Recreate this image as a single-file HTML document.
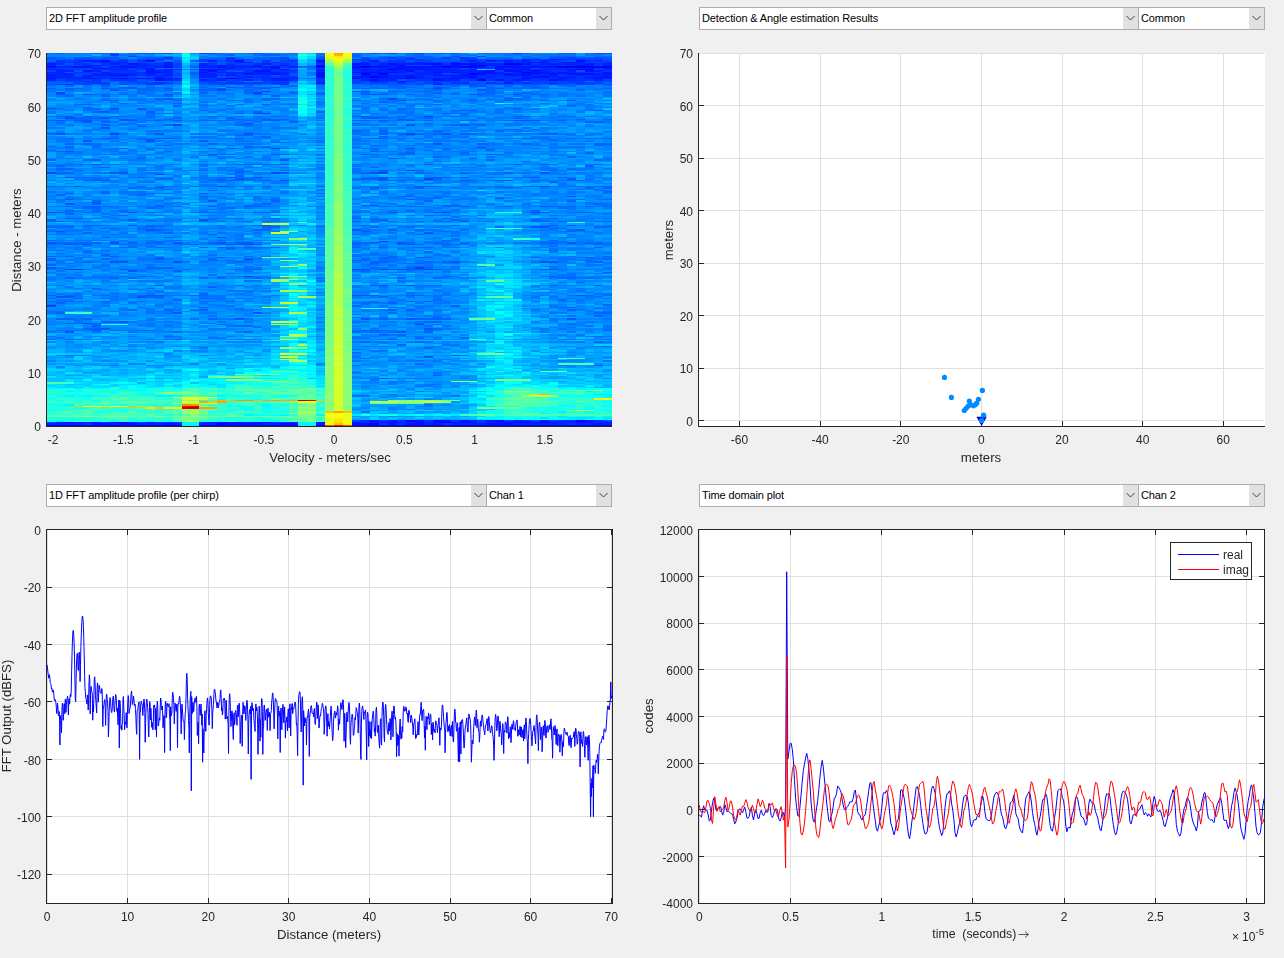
<!DOCTYPE html>
<html><head><meta charset="utf-8"><style>
html,body{margin:0;padding:0;background:#f0f0f0;width:1284px;height:958px;overflow:hidden;font-family:"Liberation Sans",sans-serif}
.dd{position:absolute;background:#fff;border:1px solid #adadad;}
.dd .t{position:absolute;left:2px;top:4px;font-size:11px;color:#000;white-space:nowrap;line-height:13px;letter-spacing:-0.12px}
.dd .ar{position:absolute;right:0;top:0;width:15px;height:21px;background:#e1e1e1}
#hmw{position:absolute;left:46px;top:53px;width:566px;height:373px;overflow:hidden;background:#0a6eff}
#hmw canvas{position:absolute;left:0.9px;top:0;width:565.1px;height:373px;image-rendering:pixelated}
svg text{font-family:"Liberation Sans",sans-serif}
</style></head><body>
<div class="dd" style="left:46px;top:7px;width:439px;height:21px"><span class="t">2D FFT amplitude profile</span><div class="ar"><svg width="15" height="21" style="display:block"><path d="M3.5 8 L7.5 12 L11.5 8" fill="none" stroke="#404040" stroke-width="1"/></svg></div></div><div class="dd" style="left:486px;top:7px;width:124px;height:21px"><span class="t">Common</span><div class="ar"><svg width="15" height="21" style="display:block"><path d="M3.5 8 L7.5 12 L11.5 8" fill="none" stroke="#404040" stroke-width="1"/></svg></div></div><div class="dd" style="left:699px;top:7px;width:438px;height:21px"><span class="t">Detection &amp; Angle estimation Results</span><div class="ar"><svg width="15" height="21" style="display:block"><path d="M3.5 8 L7.5 12 L11.5 8" fill="none" stroke="#404040" stroke-width="1"/></svg></div></div><div class="dd" style="left:1138px;top:7px;width:125px;height:21px"><span class="t">Common</span><div class="ar"><svg width="15" height="21" style="display:block"><path d="M3.5 8 L7.5 12 L11.5 8" fill="none" stroke="#404040" stroke-width="1"/></svg></div></div><div class="dd" style="left:46px;top:484px;width:439px;height:21px"><span class="t">1D FFT amplitude profile (per chirp)</span><div class="ar"><svg width="15" height="21" style="display:block"><path d="M3.5 8 L7.5 12 L11.5 8" fill="none" stroke="#404040" stroke-width="1"/></svg></div></div><div class="dd" style="left:486px;top:484px;width:124px;height:21px"><span class="t">Chan 1</span><div class="ar"><svg width="15" height="21" style="display:block"><path d="M3.5 8 L7.5 12 L11.5 8" fill="none" stroke="#404040" stroke-width="1"/></svg></div></div><div class="dd" style="left:699px;top:484px;width:438px;height:21px"><span class="t">Time domain plot</span><div class="ar"><svg width="15" height="21" style="display:block"><path d="M3.5 8 L7.5 12 L11.5 8" fill="none" stroke="#404040" stroke-width="1"/></svg></div></div><div class="dd" style="left:1138px;top:484px;width:125px;height:21px"><span class="t">Chan 2</span><div class="ar"><svg width="15" height="21" style="display:block"><path d="M3.5 8 L7.5 12 L11.5 8" fill="none" stroke="#404040" stroke-width="1"/></svg></div></div>
<div id="hmw"><svg width="567" height="373" style="position:absolute;left:0.9px;top:0" shape-rendering="crispEdges"><rect x="0.0" y="0.0" width="9" height="12.2" fill="#005fff"/><rect x="9.0" y="0.0" width="9" height="12.2" fill="#0059ff"/><rect x="17.9" y="0.0" width="9" height="12.2" fill="#0065ff"/><rect x="26.9" y="0.0" width="9" height="12.2" fill="#0059ff"/><rect x="35.9" y="0.0" width="9" height="12.2" fill="#005bff"/><rect x="44.9" y="0.0" width="9" height="12.2" fill="#005dff"/><rect x="53.8" y="0.0" width="9" height="12.2" fill="#004eff"/><rect x="62.8" y="0.0" width="9" height="12.2" fill="#004aff"/><rect x="71.8" y="0.0" width="9" height="12.2" fill="#0059ff"/><rect x="80.7" y="0.0" width="9" height="12.2" fill="#0059ff"/><rect x="89.7" y="0.0" width="9" height="12.2" fill="#0052ff"/><rect x="98.7" y="0.0" width="9" height="12.2" fill="#0050ff"/><rect x="107.6" y="0.0" width="9" height="12.2" fill="#005dff"/><rect x="116.6" y="0.0" width="9" height="12.2" fill="#0057ff"/><rect x="125.6" y="0.0" width="9" height="12.2" fill="#0077ff"/><rect x="134.6" y="0.0" width="9" height="12.2" fill="#05e9f9"/><rect x="143.5" y="0.0" width="9" height="12.2" fill="#00a3ff"/><rect x="152.5" y="0.0" width="9" height="12.2" fill="#005dff"/><rect x="161.5" y="0.0" width="9" height="12.2" fill="#0059ff"/><rect x="170.4" y="0.0" width="9" height="12.2" fill="#0063ff"/><rect x="179.4" y="0.0" width="9" height="12.2" fill="#0050ff"/><rect x="188.4" y="0.0" width="9" height="12.2" fill="#0057ff"/><rect x="197.3" y="0.0" width="9" height="12.2" fill="#005fff"/><rect x="206.3" y="0.0" width="9" height="12.2" fill="#005fff"/><rect x="215.3" y="0.0" width="9" height="12.2" fill="#0057ff"/><rect x="224.3" y="0.0" width="9" height="12.2" fill="#005fff"/><rect x="233.2" y="0.0" width="9" height="12.2" fill="#0059ff"/><rect x="242.2" y="0.0" width="9" height="12.2" fill="#0065ff"/><rect x="251.2" y="0.0" width="9" height="12.2" fill="#08e4f6"/><rect x="260.1" y="0.0" width="9" height="12.2" fill="#00c6ff"/><rect x="269.1" y="0.0" width="9" height="12.2" fill="#0048ff"/><rect x="278.1" y="0.0" width="9" height="12.2" fill="#c0ff3e"/><rect x="287.0" y="0.0" width="9" height="12.2" fill="#efe50f"/><rect x="296.0" y="0.0" width="9" height="12.2" fill="#beff40"/><rect x="305.0" y="0.0" width="9" height="12.2" fill="#0054ff"/><rect x="314.0" y="0.0" width="9" height="12.2" fill="#0050ff"/><rect x="322.9" y="0.0" width="9" height="12.2" fill="#0054ff"/><rect x="331.9" y="0.0" width="9" height="12.2" fill="#0059ff"/><rect x="340.9" y="0.0" width="9" height="12.2" fill="#004eff"/><rect x="349.8" y="0.0" width="9" height="12.2" fill="#0052ff"/><rect x="358.8" y="0.0" width="9" height="12.2" fill="#004eff"/><rect x="367.8" y="0.0" width="9" height="12.2" fill="#0046ff"/><rect x="376.7" y="0.0" width="9" height="12.2" fill="#0050ff"/><rect x="385.7" y="0.0" width="9" height="12.2" fill="#0054ff"/><rect x="394.7" y="0.0" width="9" height="12.2" fill="#005bff"/><rect x="403.7" y="0.0" width="9" height="12.2" fill="#004eff"/><rect x="412.6" y="0.0" width="9" height="12.2" fill="#0050ff"/><rect x="421.6" y="0.0" width="9" height="12.2" fill="#0052ff"/><rect x="430.6" y="0.0" width="9" height="12.2" fill="#0052ff"/><rect x="439.5" y="0.0" width="9" height="12.2" fill="#005bff"/><rect x="448.5" y="0.0" width="9" height="12.2" fill="#005bff"/><rect x="457.5" y="0.0" width="9" height="12.2" fill="#004aff"/><rect x="466.4" y="0.0" width="9" height="12.2" fill="#004cff"/><rect x="475.4" y="0.0" width="9" height="12.2" fill="#0044ff"/><rect x="484.4" y="0.0" width="9" height="12.2" fill="#0052ff"/><rect x="493.4" y="0.0" width="9" height="12.2" fill="#0050ff"/><rect x="502.3" y="0.0" width="9" height="12.2" fill="#004eff"/><rect x="511.3" y="0.0" width="9" height="12.2" fill="#0048ff"/><rect x="520.3" y="0.0" width="9" height="12.2" fill="#0048ff"/><rect x="529.2" y="0.0" width="9" height="12.2" fill="#0050ff"/><rect x="538.2" y="0.0" width="9" height="12.2" fill="#0050ff"/><rect x="547.2" y="0.0" width="9" height="12.2" fill="#004aff"/><rect x="556.1" y="0.0" width="9" height="12.2" fill="#004eff"/><rect x="0.0" y="11.7" width="9" height="12.2" fill="#0024ff"/><rect x="9.0" y="11.7" width="9" height="12.2" fill="#002cff"/><rect x="17.9" y="11.7" width="9" height="12.2" fill="#0032ff"/><rect x="26.9" y="11.7" width="9" height="12.2" fill="#003cff"/><rect x="35.9" y="11.7" width="9" height="12.2" fill="#002cff"/><rect x="44.9" y="11.7" width="9" height="12.2" fill="#0026ff"/><rect x="53.8" y="11.7" width="9" height="12.2" fill="#002cff"/><rect x="62.8" y="11.7" width="9" height="12.2" fill="#002aff"/><rect x="71.8" y="11.7" width="9" height="12.2" fill="#0022ff"/><rect x="80.7" y="11.7" width="9" height="12.2" fill="#002eff"/><rect x="89.7" y="11.7" width="9" height="12.2" fill="#0030ff"/><rect x="98.7" y="11.7" width="9" height="12.2" fill="#001eff"/><rect x="107.6" y="11.7" width="9" height="12.2" fill="#0032ff"/><rect x="116.6" y="11.7" width="9" height="12.2" fill="#0028ff"/><rect x="125.6" y="11.7" width="9" height="12.2" fill="#0048ff"/><rect x="134.6" y="11.7" width="9" height="12.2" fill="#00b2ff"/><rect x="143.5" y="11.7" width="9" height="12.2" fill="#0071ff"/><rect x="152.5" y="11.7" width="9" height="12.2" fill="#0022ff"/><rect x="161.5" y="11.7" width="9" height="12.2" fill="#0026ff"/><rect x="170.4" y="11.7" width="9" height="12.2" fill="#0028ff"/><rect x="179.4" y="11.7" width="9" height="12.2" fill="#0028ff"/><rect x="188.4" y="11.7" width="9" height="12.2" fill="#0032ff"/><rect x="197.3" y="11.7" width="9" height="12.2" fill="#002eff"/><rect x="206.3" y="11.7" width="9" height="12.2" fill="#002aff"/><rect x="215.3" y="11.7" width="9" height="12.2" fill="#002aff"/><rect x="224.3" y="11.7" width="9" height="12.2" fill="#0028ff"/><rect x="233.2" y="11.7" width="9" height="12.2" fill="#002eff"/><rect x="242.2" y="11.7" width="9" height="12.2" fill="#0040ff"/><rect x="251.2" y="11.7" width="9" height="12.2" fill="#00a3ff"/><rect x="260.1" y="11.7" width="9" height="12.2" fill="#0079ff"/><rect x="269.1" y="11.7" width="9" height="12.2" fill="#0018ff"/><rect x="278.1" y="11.7" width="9" height="12.2" fill="#30ffce"/><rect x="287.0" y="11.7" width="9" height="12.2" fill="#7fff7f"/><rect x="296.0" y="11.7" width="9" height="12.2" fill="#2effd0"/><rect x="305.0" y="11.7" width="9" height="12.2" fill="#0026ff"/><rect x="314.0" y="11.7" width="9" height="12.2" fill="#0018fd"/><rect x="322.9" y="11.7" width="9" height="12.2" fill="#0022ff"/><rect x="331.9" y="11.7" width="9" height="12.2" fill="#001aff"/><rect x="340.9" y="11.7" width="9" height="12.2" fill="#001cff"/><rect x="349.8" y="11.7" width="9" height="12.2" fill="#001cff"/><rect x="358.8" y="11.7" width="9" height="12.2" fill="#0022ff"/><rect x="367.8" y="11.7" width="9" height="12.2" fill="#0022ff"/><rect x="376.7" y="11.7" width="9" height="12.2" fill="#0024ff"/><rect x="385.7" y="11.7" width="9" height="12.2" fill="#001cff"/><rect x="394.7" y="11.7" width="9" height="12.2" fill="#0020ff"/><rect x="403.7" y="11.7" width="9" height="12.2" fill="#0020ff"/><rect x="412.6" y="11.7" width="9" height="12.2" fill="#0024ff"/><rect x="421.6" y="11.7" width="9" height="12.2" fill="#001aff"/><rect x="430.6" y="11.7" width="9" height="12.2" fill="#0030ff"/><rect x="439.5" y="11.7" width="9" height="12.2" fill="#0036ff"/><rect x="448.5" y="11.7" width="9" height="12.2" fill="#0022ff"/><rect x="457.5" y="11.7" width="9" height="12.2" fill="#001eff"/><rect x="466.4" y="11.7" width="9" height="12.2" fill="#001aff"/><rect x="475.4" y="11.7" width="9" height="12.2" fill="#0018ff"/><rect x="484.4" y="11.7" width="9" height="12.2" fill="#0022ff"/><rect x="493.4" y="11.7" width="9" height="12.2" fill="#0022ff"/><rect x="502.3" y="11.7" width="9" height="12.2" fill="#0022ff"/><rect x="511.3" y="11.7" width="9" height="12.2" fill="#0026fd"/><rect x="520.3" y="11.7" width="9" height="12.2" fill="#001eff"/><rect x="529.2" y="11.7" width="9" height="12.2" fill="#001efd"/><rect x="538.2" y="11.7" width="9" height="12.2" fill="#001aff"/><rect x="547.2" y="11.7" width="9" height="12.2" fill="#002aff"/><rect x="556.1" y="11.7" width="9" height="12.2" fill="#001cff"/><rect x="0.0" y="23.3" width="9" height="12.2" fill="#004aff"/><rect x="9.0" y="23.3" width="9" height="12.2" fill="#0052ff"/><rect x="17.9" y="23.3" width="9" height="12.2" fill="#004aff"/><rect x="26.9" y="23.3" width="9" height="12.2" fill="#0050ff"/><rect x="35.9" y="23.3" width="9" height="12.2" fill="#0042ff"/><rect x="44.9" y="23.3" width="9" height="12.2" fill="#004eff"/><rect x="53.8" y="23.3" width="9" height="12.2" fill="#004eff"/><rect x="62.8" y="23.3" width="9" height="12.2" fill="#005bff"/><rect x="71.8" y="23.3" width="9" height="12.2" fill="#004aff"/><rect x="80.7" y="23.3" width="9" height="12.2" fill="#004eff"/><rect x="89.7" y="23.3" width="9" height="12.2" fill="#0057ff"/><rect x="98.7" y="23.3" width="9" height="12.2" fill="#004aff"/><rect x="107.6" y="23.3" width="9" height="12.2" fill="#0044ff"/><rect x="116.6" y="23.3" width="9" height="12.2" fill="#004eff"/><rect x="125.6" y="23.3" width="9" height="12.2" fill="#0063ff"/><rect x="134.6" y="23.3" width="9" height="12.2" fill="#02dffc"/><rect x="143.5" y="23.3" width="9" height="12.2" fill="#0093ff"/><rect x="152.5" y="23.3" width="9" height="12.2" fill="#004aff"/><rect x="161.5" y="23.3" width="9" height="12.2" fill="#004aff"/><rect x="170.4" y="23.3" width="9" height="12.2" fill="#0052ff"/><rect x="179.4" y="23.3" width="9" height="12.2" fill="#0046ff"/><rect x="188.4" y="23.3" width="9" height="12.2" fill="#0048ff"/><rect x="197.3" y="23.3" width="9" height="12.2" fill="#004aff"/><rect x="206.3" y="23.3" width="9" height="12.2" fill="#0052ff"/><rect x="215.3" y="23.3" width="9" height="12.2" fill="#004aff"/><rect x="224.3" y="23.3" width="9" height="12.2" fill="#0044ff"/><rect x="233.2" y="23.3" width="9" height="12.2" fill="#0040ff"/><rect x="242.2" y="23.3" width="9" height="12.2" fill="#005bff"/><rect x="251.2" y="23.3" width="9" height="12.2" fill="#00c2ff"/><rect x="260.1" y="23.3" width="9" height="12.2" fill="#00b2ff"/><rect x="269.1" y="23.3" width="9" height="12.2" fill="#0040ff"/><rect x="278.1" y="23.3" width="9" height="12.2" fill="#2cffd2"/><rect x="287.0" y="23.3" width="9" height="12.2" fill="#73ff8b"/><rect x="296.0" y="23.3" width="9" height="12.2" fill="#2cffd2"/><rect x="305.0" y="23.3" width="9" height="12.2" fill="#004aff"/><rect x="314.0" y="23.3" width="9" height="12.2" fill="#004aff"/><rect x="322.9" y="23.3" width="9" height="12.2" fill="#003aff"/><rect x="331.9" y="23.3" width="9" height="12.2" fill="#0042ff"/><rect x="340.9" y="23.3" width="9" height="12.2" fill="#0042ff"/><rect x="349.8" y="23.3" width="9" height="12.2" fill="#0040ff"/><rect x="358.8" y="23.3" width="9" height="12.2" fill="#0042ff"/><rect x="367.8" y="23.3" width="9" height="12.2" fill="#0048ff"/><rect x="376.7" y="23.3" width="9" height="12.2" fill="#004eff"/><rect x="385.7" y="23.3" width="9" height="12.2" fill="#0036ff"/><rect x="394.7" y="23.3" width="9" height="12.2" fill="#0040ff"/><rect x="403.7" y="23.3" width="9" height="12.2" fill="#0040ff"/><rect x="412.6" y="23.3" width="9" height="12.2" fill="#004cff"/><rect x="421.6" y="23.3" width="9" height="12.2" fill="#0044ff"/><rect x="430.6" y="23.3" width="9" height="12.2" fill="#0048ff"/><rect x="439.5" y="23.3" width="9" height="12.2" fill="#004aff"/><rect x="448.5" y="23.3" width="9" height="12.2" fill="#004aff"/><rect x="457.5" y="23.3" width="9" height="12.2" fill="#0042ff"/><rect x="466.4" y="23.3" width="9" height="12.2" fill="#0048ff"/><rect x="475.4" y="23.3" width="9" height="12.2" fill="#0040ff"/><rect x="484.4" y="23.3" width="9" height="12.2" fill="#0040ff"/><rect x="493.4" y="23.3" width="9" height="12.2" fill="#0046ff"/><rect x="502.3" y="23.3" width="9" height="12.2" fill="#0048ff"/><rect x="511.3" y="23.3" width="9" height="12.2" fill="#0046ff"/><rect x="520.3" y="23.3" width="9" height="12.2" fill="#0046ff"/><rect x="529.2" y="23.3" width="9" height="12.2" fill="#004aff"/><rect x="538.2" y="23.3" width="9" height="12.2" fill="#004aff"/><rect x="547.2" y="23.3" width="9" height="12.2" fill="#0048ff"/><rect x="556.1" y="23.3" width="9" height="12.2" fill="#004aff"/><rect x="0.0" y="35.0" width="9" height="12.2" fill="#0081ff"/><rect x="9.0" y="35.0" width="9" height="12.2" fill="#007dff"/><rect x="17.9" y="35.0" width="9" height="12.2" fill="#0077ff"/><rect x="26.9" y="35.0" width="9" height="12.2" fill="#0083ff"/><rect x="35.9" y="35.0" width="9" height="12.2" fill="#007fff"/><rect x="44.9" y="35.0" width="9" height="12.2" fill="#008bff"/><rect x="53.8" y="35.0" width="9" height="12.2" fill="#0077ff"/><rect x="62.8" y="35.0" width="9" height="12.2" fill="#007fff"/><rect x="71.8" y="35.0" width="9" height="12.2" fill="#0083ff"/><rect x="80.7" y="35.0" width="9" height="12.2" fill="#007bff"/><rect x="89.7" y="35.0" width="9" height="12.2" fill="#0077ff"/><rect x="98.7" y="35.0" width="9" height="12.2" fill="#0079ff"/><rect x="107.6" y="35.0" width="9" height="12.2" fill="#007dff"/><rect x="116.6" y="35.0" width="9" height="12.2" fill="#006dff"/><rect x="125.6" y="35.0" width="9" height="12.2" fill="#0091ff"/><rect x="134.6" y="35.0" width="9" height="12.2" fill="#00ceff"/><rect x="143.5" y="35.0" width="9" height="12.2" fill="#00a5ff"/><rect x="152.5" y="35.0" width="9" height="12.2" fill="#0077ff"/><rect x="161.5" y="35.0" width="9" height="12.2" fill="#007dff"/><rect x="170.4" y="35.0" width="9" height="12.2" fill="#0075ff"/><rect x="179.4" y="35.0" width="9" height="12.2" fill="#0083ff"/><rect x="188.4" y="35.0" width="9" height="12.2" fill="#008dff"/><rect x="197.3" y="35.0" width="9" height="12.2" fill="#0079ff"/><rect x="206.3" y="35.0" width="9" height="12.2" fill="#0071ff"/><rect x="215.3" y="35.0" width="9" height="12.2" fill="#0075ff"/><rect x="224.3" y="35.0" width="9" height="12.2" fill="#007fff"/><rect x="233.2" y="35.0" width="9" height="12.2" fill="#0091ff"/><rect x="242.2" y="35.0" width="9" height="12.2" fill="#0089ff"/><rect x="251.2" y="35.0" width="9" height="12.2" fill="#06f2f8"/><rect x="260.1" y="35.0" width="9" height="12.2" fill="#00d4ff"/><rect x="269.1" y="35.0" width="9" height="12.2" fill="#007fff"/><rect x="278.1" y="35.0" width="9" height="12.2" fill="#2cffd2"/><rect x="287.0" y="35.0" width="9" height="12.2" fill="#77ff87"/><rect x="296.0" y="35.0" width="9" height="12.2" fill="#2cffd2"/><rect x="305.0" y="35.0" width="9" height="12.2" fill="#008bff"/><rect x="314.0" y="35.0" width="9" height="12.2" fill="#0077ff"/><rect x="322.9" y="35.0" width="9" height="12.2" fill="#0087ff"/><rect x="331.9" y="35.0" width="9" height="12.2" fill="#007fff"/><rect x="340.9" y="35.0" width="9" height="12.2" fill="#0075ff"/><rect x="349.8" y="35.0" width="9" height="12.2" fill="#0081ff"/><rect x="358.8" y="35.0" width="9" height="12.2" fill="#007fff"/><rect x="367.8" y="35.0" width="9" height="12.2" fill="#007bff"/><rect x="376.7" y="35.0" width="9" height="12.2" fill="#0073ff"/><rect x="385.7" y="35.0" width="9" height="12.2" fill="#0073ff"/><rect x="394.7" y="35.0" width="9" height="12.2" fill="#0087ff"/><rect x="403.7" y="35.0" width="9" height="12.2" fill="#0081ff"/><rect x="412.6" y="35.0" width="9" height="12.2" fill="#0089ff"/><rect x="421.6" y="35.0" width="9" height="12.2" fill="#0081ff"/><rect x="430.6" y="35.0" width="9" height="12.2" fill="#0077ff"/><rect x="439.5" y="35.0" width="9" height="12.2" fill="#006fff"/><rect x="448.5" y="35.0" width="9" height="12.2" fill="#0079ff"/><rect x="457.5" y="35.0" width="9" height="12.2" fill="#0083ff"/><rect x="466.4" y="35.0" width="9" height="12.2" fill="#0079ff"/><rect x="475.4" y="35.0" width="9" height="12.2" fill="#007bff"/><rect x="484.4" y="35.0" width="9" height="12.2" fill="#007fff"/><rect x="493.4" y="35.0" width="9" height="12.2" fill="#0079ff"/><rect x="502.3" y="35.0" width="9" height="12.2" fill="#0087ff"/><rect x="511.3" y="35.0" width="9" height="12.2" fill="#0085ff"/><rect x="520.3" y="35.0" width="9" height="12.2" fill="#0085ff"/><rect x="529.2" y="35.0" width="9" height="12.2" fill="#007fff"/><rect x="538.2" y="35.0" width="9" height="12.2" fill="#0089ff"/><rect x="547.2" y="35.0" width="9" height="12.2" fill="#0087ff"/><rect x="556.1" y="35.0" width="9" height="12.2" fill="#0081ff"/><rect x="0.0" y="46.6" width="9" height="12.2" fill="#008dff"/><rect x="9.0" y="46.6" width="9" height="12.2" fill="#0089ff"/><rect x="17.9" y="46.6" width="9" height="12.2" fill="#008bff"/><rect x="26.9" y="46.6" width="9" height="12.2" fill="#0089ff"/><rect x="35.9" y="46.6" width="9" height="12.2" fill="#0079ff"/><rect x="44.9" y="46.6" width="9" height="12.2" fill="#0087ff"/><rect x="53.8" y="46.6" width="9" height="12.2" fill="#008fff"/><rect x="62.8" y="46.6" width="9" height="12.2" fill="#0079ff"/><rect x="71.8" y="46.6" width="9" height="12.2" fill="#0089ff"/><rect x="80.7" y="46.6" width="9" height="12.2" fill="#0089ff"/><rect x="89.7" y="46.6" width="9" height="12.2" fill="#007fff"/><rect x="98.7" y="46.6" width="9" height="12.2" fill="#0089ff"/><rect x="107.6" y="46.6" width="9" height="12.2" fill="#0087ff"/><rect x="116.6" y="46.6" width="9" height="12.2" fill="#0093ff"/><rect x="125.6" y="46.6" width="9" height="12.2" fill="#007bff"/><rect x="134.6" y="46.6" width="9" height="12.2" fill="#00a5ff"/><rect x="143.5" y="46.6" width="9" height="12.2" fill="#00a1ff"/><rect x="152.5" y="46.6" width="9" height="12.2" fill="#007bff"/><rect x="161.5" y="46.6" width="9" height="12.2" fill="#008fff"/><rect x="170.4" y="46.6" width="9" height="12.2" fill="#0087ff"/><rect x="179.4" y="46.6" width="9" height="12.2" fill="#008bff"/><rect x="188.4" y="46.6" width="9" height="12.2" fill="#008fff"/><rect x="197.3" y="46.6" width="9" height="12.2" fill="#008dff"/><rect x="206.3" y="46.6" width="9" height="12.2" fill="#0091ff"/><rect x="215.3" y="46.6" width="9" height="12.2" fill="#0089ff"/><rect x="224.3" y="46.6" width="9" height="12.2" fill="#0089ff"/><rect x="233.2" y="46.6" width="9" height="12.2" fill="#0089ff"/><rect x="242.2" y="46.6" width="9" height="12.2" fill="#0095ff"/><rect x="251.2" y="46.6" width="9" height="12.2" fill="#11fbed"/><rect x="260.1" y="46.6" width="9" height="12.2" fill="#02dffc"/><rect x="269.1" y="46.6" width="9" height="12.2" fill="#0089ff"/><rect x="278.1" y="46.6" width="9" height="12.2" fill="#2effd0"/><rect x="287.0" y="46.6" width="9" height="12.2" fill="#77ff87"/><rect x="296.0" y="46.6" width="9" height="12.2" fill="#2cffd2"/><rect x="305.0" y="46.6" width="9" height="12.2" fill="#0089ff"/><rect x="314.0" y="46.6" width="9" height="12.2" fill="#007bff"/><rect x="322.9" y="46.6" width="9" height="12.2" fill="#008dff"/><rect x="331.9" y="46.6" width="9" height="12.2" fill="#007dff"/><rect x="340.9" y="46.6" width="9" height="12.2" fill="#0085ff"/><rect x="349.8" y="46.6" width="9" height="12.2" fill="#0079ff"/><rect x="358.8" y="46.6" width="9" height="12.2" fill="#007fff"/><rect x="367.8" y="46.6" width="9" height="12.2" fill="#008fff"/><rect x="376.7" y="46.6" width="9" height="12.2" fill="#0083ff"/><rect x="385.7" y="46.6" width="9" height="12.2" fill="#007fff"/><rect x="394.7" y="46.6" width="9" height="12.2" fill="#008bff"/><rect x="403.7" y="46.6" width="9" height="12.2" fill="#0089ff"/><rect x="412.6" y="46.6" width="9" height="12.2" fill="#008bff"/><rect x="421.6" y="46.6" width="9" height="12.2" fill="#0081ff"/><rect x="430.6" y="46.6" width="9" height="12.2" fill="#0085ff"/><rect x="439.5" y="46.6" width="9" height="12.2" fill="#008fff"/><rect x="448.5" y="46.6" width="9" height="12.2" fill="#0292fc"/><rect x="457.5" y="46.6" width="9" height="12.2" fill="#008dff"/><rect x="466.4" y="46.6" width="9" height="12.2" fill="#0085ff"/><rect x="475.4" y="46.6" width="9" height="12.2" fill="#0087ff"/><rect x="484.4" y="46.6" width="9" height="12.2" fill="#0093ff"/><rect x="493.4" y="46.6" width="9" height="12.2" fill="#0097ff"/><rect x="502.3" y="46.6" width="9" height="12.2" fill="#0095ff"/><rect x="511.3" y="46.6" width="9" height="12.2" fill="#0091ff"/><rect x="520.3" y="46.6" width="9" height="12.2" fill="#0081ff"/><rect x="529.2" y="46.6" width="9" height="12.2" fill="#0087ff"/><rect x="538.2" y="46.6" width="9" height="12.2" fill="#0081ff"/><rect x="547.2" y="46.6" width="9" height="12.2" fill="#0089ff"/><rect x="556.1" y="46.6" width="9" height="12.2" fill="#0093ff"/><rect x="0.0" y="58.3" width="9" height="12.2" fill="#007fff"/><rect x="9.0" y="58.3" width="9" height="12.2" fill="#007dff"/><rect x="17.9" y="58.3" width="9" height="12.2" fill="#007bff"/><rect x="26.9" y="58.3" width="9" height="12.2" fill="#0079ff"/><rect x="35.9" y="58.3" width="9" height="12.2" fill="#0073ff"/><rect x="44.9" y="58.3" width="9" height="12.2" fill="#007dff"/><rect x="53.8" y="58.3" width="9" height="12.2" fill="#0077ff"/><rect x="62.8" y="58.3" width="9" height="12.2" fill="#0083ff"/><rect x="71.8" y="58.3" width="9" height="12.2" fill="#0079ff"/><rect x="80.7" y="58.3" width="9" height="12.2" fill="#007bff"/><rect x="89.7" y="58.3" width="9" height="12.2" fill="#007fff"/><rect x="98.7" y="58.3" width="9" height="12.2" fill="#0071ff"/><rect x="107.6" y="58.3" width="9" height="12.2" fill="#007fff"/><rect x="116.6" y="58.3" width="9" height="12.2" fill="#0089ff"/><rect x="125.6" y="58.3" width="9" height="12.2" fill="#0079ff"/><rect x="134.6" y="58.3" width="9" height="12.2" fill="#0099ff"/><rect x="143.5" y="58.3" width="9" height="12.2" fill="#0093ff"/><rect x="152.5" y="58.3" width="9" height="12.2" fill="#0085ff"/><rect x="161.5" y="58.3" width="9" height="12.2" fill="#0085ff"/><rect x="170.4" y="58.3" width="9" height="12.2" fill="#008bff"/><rect x="179.4" y="58.3" width="9" height="12.2" fill="#007fff"/><rect x="188.4" y="58.3" width="9" height="12.2" fill="#0079ff"/><rect x="197.3" y="58.3" width="9" height="12.2" fill="#0085ff"/><rect x="206.3" y="58.3" width="9" height="12.2" fill="#0071ff"/><rect x="215.3" y="58.3" width="9" height="12.2" fill="#0073ff"/><rect x="224.3" y="58.3" width="9" height="12.2" fill="#007fff"/><rect x="233.2" y="58.3" width="9" height="12.2" fill="#007fff"/><rect x="242.2" y="58.3" width="9" height="12.2" fill="#0081ff"/><rect x="251.2" y="58.3" width="9" height="12.2" fill="#01cafd"/><rect x="260.1" y="58.3" width="9" height="12.2" fill="#00b4ff"/><rect x="269.1" y="58.3" width="9" height="12.2" fill="#0083ff"/><rect x="278.1" y="58.3" width="9" height="12.2" fill="#2cffd2"/><rect x="287.0" y="58.3" width="9" height="12.2" fill="#75ff89"/><rect x="296.0" y="58.3" width="9" height="12.2" fill="#2effd0"/><rect x="305.0" y="58.3" width="9" height="12.2" fill="#0083ff"/><rect x="314.0" y="58.3" width="9" height="12.2" fill="#007bff"/><rect x="322.9" y="58.3" width="9" height="12.2" fill="#007dff"/><rect x="331.9" y="58.3" width="9" height="12.2" fill="#0079ff"/><rect x="340.9" y="58.3" width="9" height="12.2" fill="#007bff"/><rect x="349.8" y="58.3" width="9" height="12.2" fill="#0073ff"/><rect x="358.8" y="58.3" width="9" height="12.2" fill="#0077ff"/><rect x="367.8" y="58.3" width="9" height="12.2" fill="#0083ff"/><rect x="376.7" y="58.3" width="9" height="12.2" fill="#007dff"/><rect x="385.7" y="58.3" width="9" height="12.2" fill="#0087ff"/><rect x="394.7" y="58.3" width="9" height="12.2" fill="#0081ff"/><rect x="403.7" y="58.3" width="9" height="12.2" fill="#0081ff"/><rect x="412.6" y="58.3" width="9" height="12.2" fill="#007fff"/><rect x="421.6" y="58.3" width="9" height="12.2" fill="#0081ff"/><rect x="430.6" y="58.3" width="9" height="12.2" fill="#008bff"/><rect x="439.5" y="58.3" width="9" height="12.2" fill="#0083ff"/><rect x="448.5" y="58.3" width="9" height="12.2" fill="#0081ff"/><rect x="457.5" y="58.3" width="9" height="12.2" fill="#0085ff"/><rect x="466.4" y="58.3" width="9" height="12.2" fill="#007bff"/><rect x="475.4" y="58.3" width="9" height="12.2" fill="#0081ff"/><rect x="484.4" y="58.3" width="9" height="12.2" fill="#008bff"/><rect x="493.4" y="58.3" width="9" height="12.2" fill="#008fff"/><rect x="502.3" y="58.3" width="9" height="12.2" fill="#007fff"/><rect x="511.3" y="58.3" width="9" height="12.2" fill="#007fff"/><rect x="520.3" y="58.3" width="9" height="12.2" fill="#0089ff"/><rect x="529.2" y="58.3" width="9" height="12.2" fill="#0085ff"/><rect x="538.2" y="58.3" width="9" height="12.2" fill="#0093ff"/><rect x="547.2" y="58.3" width="9" height="12.2" fill="#008bff"/><rect x="556.1" y="58.3" width="9" height="12.2" fill="#0083ff"/><rect x="0.0" y="69.9" width="9" height="12.2" fill="#0085ff"/><rect x="9.0" y="69.9" width="9" height="12.2" fill="#007dff"/><rect x="17.9" y="69.9" width="9" height="12.2" fill="#0093ff"/><rect x="26.9" y="69.9" width="9" height="12.2" fill="#0093ff"/><rect x="35.9" y="69.9" width="9" height="12.2" fill="#0087ff"/><rect x="44.9" y="69.9" width="9" height="12.2" fill="#0085ff"/><rect x="53.8" y="69.9" width="9" height="12.2" fill="#007fff"/><rect x="62.8" y="69.9" width="9" height="12.2" fill="#0083ff"/><rect x="71.8" y="69.9" width="9" height="12.2" fill="#0089ff"/><rect x="80.7" y="69.9" width="9" height="12.2" fill="#0087ff"/><rect x="89.7" y="69.9" width="9" height="12.2" fill="#008bff"/><rect x="98.7" y="69.9" width="9" height="12.2" fill="#0087ff"/><rect x="107.6" y="69.9" width="9" height="12.2" fill="#0083ff"/><rect x="116.6" y="69.9" width="9" height="12.2" fill="#008fff"/><rect x="125.6" y="69.9" width="9" height="12.2" fill="#0089ff"/><rect x="134.6" y="69.9" width="9" height="12.2" fill="#009dff"/><rect x="143.5" y="69.9" width="9" height="12.2" fill="#00a7ff"/><rect x="152.5" y="69.9" width="9" height="12.2" fill="#008dff"/><rect x="161.5" y="69.9" width="9" height="12.2" fill="#0093ff"/><rect x="170.4" y="69.9" width="9" height="12.2" fill="#008dff"/><rect x="179.4" y="69.9" width="9" height="12.2" fill="#0087ff"/><rect x="188.4" y="69.9" width="9" height="12.2" fill="#0085ff"/><rect x="197.3" y="69.9" width="9" height="12.2" fill="#0071ff"/><rect x="206.3" y="69.9" width="9" height="12.2" fill="#007fff"/><rect x="215.3" y="69.9" width="9" height="12.2" fill="#0085ff"/><rect x="224.3" y="69.9" width="9" height="12.2" fill="#0085ff"/><rect x="233.2" y="69.9" width="9" height="12.2" fill="#0093ff"/><rect x="242.2" y="69.9" width="9" height="12.2" fill="#0091ff"/><rect x="251.2" y="69.9" width="9" height="12.2" fill="#00a5ff"/><rect x="260.1" y="69.9" width="9" height="12.2" fill="#00b2ff"/><rect x="269.1" y="69.9" width="9" height="12.2" fill="#008fff"/><rect x="278.1" y="69.9" width="9" height="12.2" fill="#34ffca"/><rect x="287.0" y="69.9" width="9" height="12.2" fill="#77ff87"/><rect x="296.0" y="69.9" width="9" height="12.2" fill="#2effd0"/><rect x="305.0" y="69.9" width="9" height="12.2" fill="#007bff"/><rect x="314.0" y="69.9" width="9" height="12.2" fill="#0081ff"/><rect x="322.9" y="69.9" width="9" height="12.2" fill="#008bff"/><rect x="331.9" y="69.9" width="9" height="12.2" fill="#007bff"/><rect x="340.9" y="69.9" width="9" height="12.2" fill="#0089ff"/><rect x="349.8" y="69.9" width="9" height="12.2" fill="#008fff"/><rect x="358.8" y="69.9" width="9" height="12.2" fill="#007dff"/><rect x="367.8" y="69.9" width="9" height="12.2" fill="#0087ff"/><rect x="376.7" y="69.9" width="9" height="12.2" fill="#0081ff"/><rect x="385.7" y="69.9" width="9" height="12.2" fill="#0083ff"/><rect x="394.7" y="69.9" width="9" height="12.2" fill="#007fff"/><rect x="403.7" y="69.9" width="9" height="12.2" fill="#0085ff"/><rect x="412.6" y="69.9" width="9" height="12.2" fill="#007dff"/><rect x="421.6" y="69.9" width="9" height="12.2" fill="#007dff"/><rect x="430.6" y="69.9" width="9" height="12.2" fill="#0081ff"/><rect x="439.5" y="69.9" width="9" height="12.2" fill="#008dff"/><rect x="448.5" y="69.9" width="9" height="12.2" fill="#0087ff"/><rect x="457.5" y="69.9" width="9" height="12.2" fill="#0085ff"/><rect x="466.4" y="69.9" width="9" height="12.2" fill="#0081ff"/><rect x="475.4" y="69.9" width="9" height="12.2" fill="#008bff"/><rect x="484.4" y="69.9" width="9" height="12.2" fill="#0087ff"/><rect x="493.4" y="69.9" width="9" height="12.2" fill="#0081ff"/><rect x="502.3" y="69.9" width="9" height="12.2" fill="#0089ff"/><rect x="511.3" y="69.9" width="9" height="12.2" fill="#008fff"/><rect x="520.3" y="69.9" width="9" height="12.2" fill="#0091ff"/><rect x="529.2" y="69.9" width="9" height="12.2" fill="#0097ff"/><rect x="538.2" y="69.9" width="9" height="12.2" fill="#008fff"/><rect x="547.2" y="69.9" width="9" height="12.2" fill="#0091ff"/><rect x="556.1" y="69.9" width="9" height="12.2" fill="#0091ff"/><rect x="0.0" y="81.6" width="9" height="12.2" fill="#008dff"/><rect x="9.0" y="81.6" width="9" height="12.2" fill="#0087ff"/><rect x="17.9" y="81.6" width="9" height="12.2" fill="#0081ff"/><rect x="26.9" y="81.6" width="9" height="12.2" fill="#0093ff"/><rect x="35.9" y="81.6" width="9" height="12.2" fill="#007dff"/><rect x="44.9" y="81.6" width="9" height="12.2" fill="#0083ff"/><rect x="53.8" y="81.6" width="9" height="12.2" fill="#0087ff"/><rect x="62.8" y="81.6" width="9" height="12.2" fill="#007dff"/><rect x="71.8" y="81.6" width="9" height="12.2" fill="#0085ff"/><rect x="80.7" y="81.6" width="9" height="12.2" fill="#008dff"/><rect x="89.7" y="81.6" width="9" height="12.2" fill="#0085ff"/><rect x="98.7" y="81.6" width="9" height="12.2" fill="#0081ff"/><rect x="107.6" y="81.6" width="9" height="12.2" fill="#0081ff"/><rect x="116.6" y="81.6" width="9" height="12.2" fill="#007bff"/><rect x="125.6" y="81.6" width="9" height="12.2" fill="#0085ff"/><rect x="134.6" y="81.6" width="9" height="12.2" fill="#009bff"/><rect x="143.5" y="81.6" width="9" height="12.2" fill="#008fff"/><rect x="152.5" y="81.6" width="9" height="12.2" fill="#0081ff"/><rect x="161.5" y="81.6" width="9" height="12.2" fill="#0085ff"/><rect x="170.4" y="81.6" width="9" height="12.2" fill="#0085ff"/><rect x="179.4" y="81.6" width="9" height="12.2" fill="#0087ff"/><rect x="188.4" y="81.6" width="9" height="12.2" fill="#0075ff"/><rect x="197.3" y="81.6" width="9" height="12.2" fill="#007dff"/><rect x="206.3" y="81.6" width="9" height="12.2" fill="#0083ff"/><rect x="215.3" y="81.6" width="9" height="12.2" fill="#008dff"/><rect x="224.3" y="81.6" width="9" height="12.2" fill="#0089ff"/><rect x="233.2" y="81.6" width="9" height="12.2" fill="#0089ff"/><rect x="242.2" y="81.6" width="9" height="12.2" fill="#008fff"/><rect x="251.2" y="81.6" width="9" height="12.2" fill="#009fff"/><rect x="260.1" y="81.6" width="9" height="12.2" fill="#0093ff"/><rect x="269.1" y="81.6" width="9" height="12.2" fill="#0081ff"/><rect x="278.1" y="81.6" width="9" height="12.2" fill="#32ffcc"/><rect x="287.0" y="81.6" width="9" height="12.2" fill="#77ff87"/><rect x="296.0" y="81.6" width="9" height="12.2" fill="#34ffca"/><rect x="305.0" y="81.6" width="9" height="12.2" fill="#007fff"/><rect x="314.0" y="81.6" width="9" height="12.2" fill="#0087ff"/><rect x="322.9" y="81.6" width="9" height="12.2" fill="#0083ff"/><rect x="331.9" y="81.6" width="9" height="12.2" fill="#007dff"/><rect x="340.9" y="81.6" width="9" height="12.2" fill="#008dff"/><rect x="349.8" y="81.6" width="9" height="12.2" fill="#0083ff"/><rect x="358.8" y="81.6" width="9" height="12.2" fill="#0089ff"/><rect x="367.8" y="81.6" width="9" height="12.2" fill="#0087ff"/><rect x="376.7" y="81.6" width="9" height="12.2" fill="#0085ff"/><rect x="385.7" y="81.6" width="9" height="12.2" fill="#007bff"/><rect x="394.7" y="81.6" width="9" height="12.2" fill="#007dff"/><rect x="403.7" y="81.6" width="9" height="12.2" fill="#0085ff"/><rect x="412.6" y="81.6" width="9" height="12.2" fill="#0083ff"/><rect x="421.6" y="81.6" width="9" height="12.2" fill="#0089ff"/><rect x="430.6" y="81.6" width="9" height="12.2" fill="#008bff"/><rect x="439.5" y="81.6" width="9" height="12.2" fill="#008bff"/><rect x="448.5" y="81.6" width="9" height="12.2" fill="#0087ff"/><rect x="457.5" y="81.6" width="9" height="12.2" fill="#008bff"/><rect x="466.4" y="81.6" width="9" height="12.2" fill="#008bff"/><rect x="475.4" y="81.6" width="9" height="12.2" fill="#0083ff"/><rect x="484.4" y="81.6" width="9" height="12.2" fill="#0081ff"/><rect x="493.4" y="81.6" width="9" height="12.2" fill="#007fff"/><rect x="502.3" y="81.6" width="9" height="12.2" fill="#0081ff"/><rect x="511.3" y="81.6" width="9" height="12.2" fill="#0089ff"/><rect x="520.3" y="81.6" width="9" height="12.2" fill="#0085ff"/><rect x="529.2" y="81.6" width="9" height="12.2" fill="#0085ff"/><rect x="538.2" y="81.6" width="9" height="12.2" fill="#0089ff"/><rect x="547.2" y="81.6" width="9" height="12.2" fill="#0083ff"/><rect x="556.1" y="81.6" width="9" height="12.2" fill="#007dff"/><rect x="0.0" y="93.2" width="9" height="12.2" fill="#008fff"/><rect x="9.0" y="93.2" width="9" height="12.2" fill="#007fff"/><rect x="17.9" y="93.2" width="9" height="12.2" fill="#007bff"/><rect x="26.9" y="93.2" width="9" height="12.2" fill="#0087ff"/><rect x="35.9" y="93.2" width="9" height="12.2" fill="#0093ff"/><rect x="44.9" y="93.2" width="9" height="12.2" fill="#0081ff"/><rect x="53.8" y="93.2" width="9" height="12.2" fill="#0089ff"/><rect x="62.8" y="93.2" width="9" height="12.2" fill="#0087ff"/><rect x="71.8" y="93.2" width="9" height="12.2" fill="#0089ff"/><rect x="80.7" y="93.2" width="9" height="12.2" fill="#0089ff"/><rect x="89.7" y="93.2" width="9" height="12.2" fill="#0085ff"/><rect x="98.7" y="93.2" width="9" height="12.2" fill="#008dff"/><rect x="107.6" y="93.2" width="9" height="12.2" fill="#0089ff"/><rect x="116.6" y="93.2" width="9" height="12.2" fill="#0081ff"/><rect x="125.6" y="93.2" width="9" height="12.2" fill="#008bff"/><rect x="134.6" y="93.2" width="9" height="12.2" fill="#00a1ff"/><rect x="143.5" y="93.2" width="9" height="12.2" fill="#0093ff"/><rect x="152.5" y="93.2" width="9" height="12.2" fill="#008dff"/><rect x="161.5" y="93.2" width="9" height="12.2" fill="#007fff"/><rect x="170.4" y="93.2" width="9" height="12.2" fill="#0085ff"/><rect x="179.4" y="93.2" width="9" height="12.2" fill="#0087ff"/><rect x="188.4" y="93.2" width="9" height="12.2" fill="#0091ff"/><rect x="197.3" y="93.2" width="9" height="12.2" fill="#0081ff"/><rect x="206.3" y="93.2" width="9" height="12.2" fill="#008fff"/><rect x="215.3" y="93.2" width="9" height="12.2" fill="#0087ff"/><rect x="224.3" y="93.2" width="9" height="12.2" fill="#007bff"/><rect x="233.2" y="93.2" width="9" height="12.2" fill="#0095ff"/><rect x="242.2" y="93.2" width="9" height="12.2" fill="#00aaff"/><rect x="251.2" y="93.2" width="9" height="12.2" fill="#009fff"/><rect x="260.1" y="93.2" width="9" height="12.2" fill="#00acff"/><rect x="269.1" y="93.2" width="9" height="12.2" fill="#0091ff"/><rect x="278.1" y="93.2" width="9" height="12.2" fill="#34ffca"/><rect x="287.0" y="93.2" width="9" height="12.2" fill="#7bff83"/><rect x="296.0" y="93.2" width="9" height="12.2" fill="#34ffca"/><rect x="305.0" y="93.2" width="9" height="12.2" fill="#008dff"/><rect x="314.0" y="93.2" width="9" height="12.2" fill="#0085ff"/><rect x="322.9" y="93.2" width="9" height="12.2" fill="#0075ff"/><rect x="331.9" y="93.2" width="9" height="12.2" fill="#0085ff"/><rect x="340.9" y="93.2" width="9" height="12.2" fill="#008dff"/><rect x="349.8" y="93.2" width="9" height="12.2" fill="#007fff"/><rect x="358.8" y="93.2" width="9" height="12.2" fill="#0079ff"/><rect x="367.8" y="93.2" width="9" height="12.2" fill="#008fff"/><rect x="376.7" y="93.2" width="9" height="12.2" fill="#0087ff"/><rect x="385.7" y="93.2" width="9" height="12.2" fill="#007fff"/><rect x="394.7" y="93.2" width="9" height="12.2" fill="#007bff"/><rect x="403.7" y="93.2" width="9" height="12.2" fill="#0083ff"/><rect x="412.6" y="93.2" width="9" height="12.2" fill="#007fff"/><rect x="421.6" y="93.2" width="9" height="12.2" fill="#0083ff"/><rect x="430.6" y="93.2" width="9" height="12.2" fill="#008bff"/><rect x="439.5" y="93.2" width="9" height="12.2" fill="#007fff"/><rect x="448.5" y="93.2" width="9" height="12.2" fill="#0085ff"/><rect x="457.5" y="93.2" width="9" height="12.2" fill="#007fff"/><rect x="466.4" y="93.2" width="9" height="12.2" fill="#008bff"/><rect x="475.4" y="93.2" width="9" height="12.2" fill="#0091ff"/><rect x="484.4" y="93.2" width="9" height="12.2" fill="#008dff"/><rect x="493.4" y="93.2" width="9" height="12.2" fill="#0091ff"/><rect x="502.3" y="93.2" width="9" height="12.2" fill="#007fff"/><rect x="511.3" y="93.2" width="9" height="12.2" fill="#0083ff"/><rect x="520.3" y="93.2" width="9" height="12.2" fill="#008bff"/><rect x="529.2" y="93.2" width="9" height="12.2" fill="#0087ff"/><rect x="538.2" y="93.2" width="9" height="12.2" fill="#008dff"/><rect x="547.2" y="93.2" width="9" height="12.2" fill="#0099ff"/><rect x="556.1" y="93.2" width="9" height="12.2" fill="#008bff"/><rect x="0.0" y="104.9" width="9" height="12.2" fill="#0085ff"/><rect x="9.0" y="104.9" width="9" height="12.2" fill="#007fff"/><rect x="17.9" y="104.9" width="9" height="12.2" fill="#007fff"/><rect x="26.9" y="104.9" width="9" height="12.2" fill="#0089ff"/><rect x="35.9" y="104.9" width="9" height="12.2" fill="#008bff"/><rect x="44.9" y="104.9" width="9" height="12.2" fill="#0081ff"/><rect x="53.8" y="104.9" width="9" height="12.2" fill="#0087ff"/><rect x="62.8" y="104.9" width="9" height="12.2" fill="#0095ff"/><rect x="71.8" y="104.9" width="9" height="12.2" fill="#0091ff"/><rect x="80.7" y="104.9" width="9" height="12.2" fill="#008dff"/><rect x="89.7" y="104.9" width="9" height="12.2" fill="#0081ff"/><rect x="98.7" y="104.9" width="9" height="12.2" fill="#008fff"/><rect x="107.6" y="104.9" width="9" height="12.2" fill="#0087ff"/><rect x="116.6" y="104.9" width="9" height="12.2" fill="#0093ff"/><rect x="125.6" y="104.9" width="9" height="12.2" fill="#008dff"/><rect x="134.6" y="104.9" width="9" height="12.2" fill="#00acff"/><rect x="143.5" y="104.9" width="9" height="12.2" fill="#00a1ff"/><rect x="152.5" y="104.9" width="9" height="12.2" fill="#0085ff"/><rect x="161.5" y="104.9" width="9" height="12.2" fill="#0095ff"/><rect x="170.4" y="104.9" width="9" height="12.2" fill="#008bff"/><rect x="179.4" y="104.9" width="9" height="12.2" fill="#008bff"/><rect x="188.4" y="104.9" width="9" height="12.2" fill="#0087ff"/><rect x="197.3" y="104.9" width="9" height="12.2" fill="#0087ff"/><rect x="206.3" y="104.9" width="9" height="12.2" fill="#0089ff"/><rect x="215.3" y="104.9" width="9" height="12.2" fill="#0085ff"/><rect x="224.3" y="104.9" width="9" height="12.2" fill="#008fff"/><rect x="233.2" y="104.9" width="9" height="12.2" fill="#007dff"/><rect x="242.2" y="104.9" width="9" height="12.2" fill="#00a3ff"/><rect x="251.2" y="104.9" width="9" height="12.2" fill="#00b0ff"/><rect x="260.1" y="104.9" width="9" height="12.2" fill="#00a7ff"/><rect x="269.1" y="104.9" width="9" height="12.2" fill="#007fff"/><rect x="278.1" y="104.9" width="9" height="12.2" fill="#36ffc8"/><rect x="287.0" y="104.9" width="9" height="12.2" fill="#83ff7b"/><rect x="296.0" y="104.9" width="9" height="12.2" fill="#36ffc8"/><rect x="305.0" y="104.9" width="9" height="12.2" fill="#0089ff"/><rect x="314.0" y="104.9" width="9" height="12.2" fill="#0089ff"/><rect x="322.9" y="104.9" width="9" height="12.2" fill="#008dff"/><rect x="331.9" y="104.9" width="9" height="12.2" fill="#008bff"/><rect x="340.9" y="104.9" width="9" height="12.2" fill="#0089ff"/><rect x="349.8" y="104.9" width="9" height="12.2" fill="#0091ff"/><rect x="358.8" y="104.9" width="9" height="12.2" fill="#0093ff"/><rect x="367.8" y="104.9" width="9" height="12.2" fill="#0095ff"/><rect x="376.7" y="104.9" width="9" height="12.2" fill="#0095ff"/><rect x="385.7" y="104.9" width="9" height="12.2" fill="#008fff"/><rect x="394.7" y="104.9" width="9" height="12.2" fill="#008bff"/><rect x="403.7" y="104.9" width="9" height="12.2" fill="#0095ff"/><rect x="412.6" y="104.9" width="9" height="12.2" fill="#008bff"/><rect x="421.6" y="104.9" width="9" height="12.2" fill="#0081ff"/><rect x="430.6" y="104.9" width="9" height="12.2" fill="#008fff"/><rect x="439.5" y="104.9" width="9" height="12.2" fill="#0091ff"/><rect x="448.5" y="104.9" width="9" height="12.2" fill="#0091ff"/><rect x="457.5" y="104.9" width="9" height="12.2" fill="#0091ff"/><rect x="466.4" y="104.9" width="9" height="12.2" fill="#0091ff"/><rect x="475.4" y="104.9" width="9" height="12.2" fill="#0093ff"/><rect x="484.4" y="104.9" width="9" height="12.2" fill="#008fff"/><rect x="493.4" y="104.9" width="9" height="12.2" fill="#0087ff"/><rect x="502.3" y="104.9" width="9" height="12.2" fill="#0089ff"/><rect x="511.3" y="104.9" width="9" height="12.2" fill="#0093ff"/><rect x="520.3" y="104.9" width="9" height="12.2" fill="#008bff"/><rect x="529.2" y="104.9" width="9" height="12.2" fill="#0093ff"/><rect x="538.2" y="104.9" width="9" height="12.2" fill="#0083ff"/><rect x="547.2" y="104.9" width="9" height="12.2" fill="#0089ff"/><rect x="556.1" y="104.9" width="9" height="12.2" fill="#0089ff"/><rect x="0.0" y="116.6" width="9" height="12.2" fill="#0085ff"/><rect x="9.0" y="116.6" width="9" height="12.2" fill="#0087ff"/><rect x="17.9" y="116.6" width="9" height="12.2" fill="#0081ff"/><rect x="26.9" y="116.6" width="9" height="12.2" fill="#007dff"/><rect x="35.9" y="116.6" width="9" height="12.2" fill="#0083ff"/><rect x="44.9" y="116.6" width="9" height="12.2" fill="#007bff"/><rect x="53.8" y="116.6" width="9" height="12.2" fill="#0087ff"/><rect x="62.8" y="116.6" width="9" height="12.2" fill="#0087ff"/><rect x="71.8" y="116.6" width="9" height="12.2" fill="#007fff"/><rect x="80.7" y="116.6" width="9" height="12.2" fill="#008dff"/><rect x="89.7" y="116.6" width="9" height="12.2" fill="#007dff"/><rect x="98.7" y="116.6" width="9" height="12.2" fill="#0087ff"/><rect x="107.6" y="116.6" width="9" height="12.2" fill="#007fff"/><rect x="116.6" y="116.6" width="9" height="12.2" fill="#0091ff"/><rect x="125.6" y="116.6" width="9" height="12.2" fill="#0089ff"/><rect x="134.6" y="116.6" width="9" height="12.2" fill="#009dff"/><rect x="143.5" y="116.6" width="9" height="12.2" fill="#0093ff"/><rect x="152.5" y="116.6" width="9" height="12.2" fill="#007dff"/><rect x="161.5" y="116.6" width="9" height="12.2" fill="#008dff"/><rect x="170.4" y="116.6" width="9" height="12.2" fill="#007fff"/><rect x="179.4" y="116.6" width="9" height="12.2" fill="#0077ff"/><rect x="188.4" y="116.6" width="9" height="12.2" fill="#0067ff"/><rect x="197.3" y="116.6" width="9" height="12.2" fill="#007fff"/><rect x="206.3" y="116.6" width="9" height="12.2" fill="#007dff"/><rect x="215.3" y="116.6" width="9" height="12.2" fill="#0083ff"/><rect x="224.3" y="116.6" width="9" height="12.2" fill="#0087ff"/><rect x="233.2" y="116.6" width="9" height="12.2" fill="#0081ff"/><rect x="242.2" y="116.6" width="9" height="12.2" fill="#00a1ff"/><rect x="251.2" y="116.6" width="9" height="12.2" fill="#00a5ff"/><rect x="260.1" y="116.6" width="9" height="12.2" fill="#00a5ff"/><rect x="269.1" y="116.6" width="9" height="12.2" fill="#008bff"/><rect x="278.1" y="116.6" width="9" height="12.2" fill="#36ffc8"/><rect x="287.0" y="116.6" width="9" height="12.2" fill="#83ff7b"/><rect x="296.0" y="116.6" width="9" height="12.2" fill="#38ffc6"/><rect x="305.0" y="116.6" width="9" height="12.2" fill="#0081ff"/><rect x="314.0" y="116.6" width="9" height="12.2" fill="#007dff"/><rect x="322.9" y="116.6" width="9" height="12.2" fill="#0079ff"/><rect x="331.9" y="116.6" width="9" height="12.2" fill="#0071ff"/><rect x="340.9" y="116.6" width="9" height="12.2" fill="#008bff"/><rect x="349.8" y="116.6" width="9" height="12.2" fill="#007fff"/><rect x="358.8" y="116.6" width="9" height="12.2" fill="#007fff"/><rect x="367.8" y="116.6" width="9" height="12.2" fill="#0085ff"/><rect x="376.7" y="116.6" width="9" height="12.2" fill="#0079ff"/><rect x="385.7" y="116.6" width="9" height="12.2" fill="#007dff"/><rect x="394.7" y="116.6" width="9" height="12.2" fill="#0087ff"/><rect x="403.7" y="116.6" width="9" height="12.2" fill="#008bff"/><rect x="412.6" y="116.6" width="9" height="12.2" fill="#007dff"/><rect x="421.6" y="116.6" width="9" height="12.2" fill="#0085ff"/><rect x="430.6" y="116.6" width="9" height="12.2" fill="#0089ff"/><rect x="439.5" y="116.6" width="9" height="12.2" fill="#0085ff"/><rect x="448.5" y="116.6" width="9" height="12.2" fill="#0083ff"/><rect x="457.5" y="116.6" width="9" height="12.2" fill="#008dff"/><rect x="466.4" y="116.6" width="9" height="12.2" fill="#008fff"/><rect x="475.4" y="116.6" width="9" height="12.2" fill="#0081ff"/><rect x="484.4" y="116.6" width="9" height="12.2" fill="#0083ff"/><rect x="493.4" y="116.6" width="9" height="12.2" fill="#0081ff"/><rect x="502.3" y="116.6" width="9" height="12.2" fill="#007fff"/><rect x="511.3" y="116.6" width="9" height="12.2" fill="#007bff"/><rect x="520.3" y="116.6" width="9" height="12.2" fill="#0083ff"/><rect x="529.2" y="116.6" width="9" height="12.2" fill="#008bff"/><rect x="538.2" y="116.6" width="9" height="12.2" fill="#0081ff"/><rect x="547.2" y="116.6" width="9" height="12.2" fill="#0085ff"/><rect x="556.1" y="116.6" width="9" height="12.2" fill="#0091ff"/><rect x="0.0" y="128.2" width="9" height="12.2" fill="#008dff"/><rect x="9.0" y="128.2" width="9" height="12.2" fill="#0091ff"/><rect x="17.9" y="128.2" width="9" height="12.2" fill="#0093ff"/><rect x="26.9" y="128.2" width="9" height="12.2" fill="#0097ff"/><rect x="35.9" y="128.2" width="9" height="12.2" fill="#0097ff"/><rect x="44.9" y="128.2" width="9" height="12.2" fill="#0095ff"/><rect x="53.8" y="128.2" width="9" height="12.2" fill="#008bff"/><rect x="62.8" y="128.2" width="9" height="12.2" fill="#008dff"/><rect x="71.8" y="128.2" width="9" height="12.2" fill="#0087ff"/><rect x="80.7" y="128.2" width="9" height="12.2" fill="#008bff"/><rect x="89.7" y="128.2" width="9" height="12.2" fill="#0085ff"/><rect x="98.7" y="128.2" width="9" height="12.2" fill="#0091ff"/><rect x="107.6" y="128.2" width="9" height="12.2" fill="#0087ff"/><rect x="116.6" y="128.2" width="9" height="12.2" fill="#0093ff"/><rect x="125.6" y="128.2" width="9" height="12.2" fill="#0083ff"/><rect x="134.6" y="128.2" width="9" height="12.2" fill="#00a5ff"/><rect x="143.5" y="128.2" width="9" height="12.2" fill="#009fff"/><rect x="152.5" y="128.2" width="9" height="12.2" fill="#0089ff"/><rect x="161.5" y="128.2" width="9" height="12.2" fill="#0081ff"/><rect x="170.4" y="128.2" width="9" height="12.2" fill="#0087ff"/><rect x="179.4" y="128.2" width="9" height="12.2" fill="#0089ff"/><rect x="188.4" y="128.2" width="9" height="12.2" fill="#0095ff"/><rect x="197.3" y="128.2" width="9" height="12.2" fill="#0097ff"/><rect x="206.3" y="128.2" width="9" height="12.2" fill="#009fff"/><rect x="215.3" y="128.2" width="9" height="12.2" fill="#008bff"/><rect x="224.3" y="128.2" width="9" height="12.2" fill="#0089ff"/><rect x="233.2" y="128.2" width="9" height="12.2" fill="#008bff"/><rect x="242.2" y="128.2" width="9" height="12.2" fill="#00b4ff"/><rect x="251.2" y="128.2" width="9" height="12.2" fill="#00b4ff"/><rect x="260.1" y="128.2" width="9" height="12.2" fill="#00b4ff"/><rect x="269.1" y="128.2" width="9" height="12.2" fill="#008bff"/><rect x="278.1" y="128.2" width="9" height="12.2" fill="#3effc0"/><rect x="287.0" y="128.2" width="9" height="12.2" fill="#87ff77"/><rect x="296.0" y="128.2" width="9" height="12.2" fill="#3affc4"/><rect x="305.0" y="128.2" width="9" height="12.2" fill="#0095ff"/><rect x="314.0" y="128.2" width="9" height="12.2" fill="#0089ff"/><rect x="322.9" y="128.2" width="9" height="12.2" fill="#0091ff"/><rect x="331.9" y="128.2" width="9" height="12.2" fill="#008bff"/><rect x="340.9" y="128.2" width="9" height="12.2" fill="#0097ff"/><rect x="349.8" y="128.2" width="9" height="12.2" fill="#008dff"/><rect x="358.8" y="128.2" width="9" height="12.2" fill="#0087ff"/><rect x="367.8" y="128.2" width="9" height="12.2" fill="#0085ff"/><rect x="376.7" y="128.2" width="9" height="12.2" fill="#0087ff"/><rect x="385.7" y="128.2" width="9" height="12.2" fill="#0085ff"/><rect x="394.7" y="128.2" width="9" height="12.2" fill="#008bff"/><rect x="403.7" y="128.2" width="9" height="12.2" fill="#0091ff"/><rect x="412.6" y="128.2" width="9" height="12.2" fill="#0087ff"/><rect x="421.6" y="128.2" width="9" height="12.2" fill="#008bff"/><rect x="430.6" y="128.2" width="9" height="12.2" fill="#0093ff"/><rect x="439.5" y="128.2" width="9" height="12.2" fill="#009bff"/><rect x="448.5" y="128.2" width="9" height="12.2" fill="#008bff"/><rect x="457.5" y="128.2" width="9" height="12.2" fill="#008fff"/><rect x="466.4" y="128.2" width="9" height="12.2" fill="#0097ff"/><rect x="475.4" y="128.2" width="9" height="12.2" fill="#008fff"/><rect x="484.4" y="128.2" width="9" height="12.2" fill="#0093ff"/><rect x="493.4" y="128.2" width="9" height="12.2" fill="#0089ff"/><rect x="502.3" y="128.2" width="9" height="12.2" fill="#0087ff"/><rect x="511.3" y="128.2" width="9" height="12.2" fill="#0083ff"/><rect x="520.3" y="128.2" width="9" height="12.2" fill="#0083ff"/><rect x="529.2" y="128.2" width="9" height="12.2" fill="#008bff"/><rect x="538.2" y="128.2" width="9" height="12.2" fill="#008bff"/><rect x="547.2" y="128.2" width="9" height="12.2" fill="#0081ff"/><rect x="556.1" y="128.2" width="9" height="12.2" fill="#007dff"/><rect x="0.0" y="139.9" width="9" height="12.2" fill="#0087ff"/><rect x="9.0" y="139.9" width="9" height="12.2" fill="#0081ff"/><rect x="17.9" y="139.9" width="9" height="12.2" fill="#0075ff"/><rect x="26.9" y="139.9" width="9" height="12.2" fill="#0089ff"/><rect x="35.9" y="139.9" width="9" height="12.2" fill="#0087ff"/><rect x="44.9" y="139.9" width="9" height="12.2" fill="#007bff"/><rect x="53.8" y="139.9" width="9" height="12.2" fill="#008bff"/><rect x="62.8" y="139.9" width="9" height="12.2" fill="#0099ff"/><rect x="71.8" y="139.9" width="9" height="12.2" fill="#008bff"/><rect x="80.7" y="139.9" width="9" height="12.2" fill="#0089ff"/><rect x="89.7" y="139.9" width="9" height="12.2" fill="#0085ff"/><rect x="98.7" y="139.9" width="9" height="12.2" fill="#0085ff"/><rect x="107.6" y="139.9" width="9" height="12.2" fill="#008dff"/><rect x="116.6" y="139.9" width="9" height="12.2" fill="#0083ff"/><rect x="125.6" y="139.9" width="9" height="12.2" fill="#008dff"/><rect x="134.6" y="139.9" width="9" height="12.2" fill="#00a1ff"/><rect x="143.5" y="139.9" width="9" height="12.2" fill="#009fff"/><rect x="152.5" y="139.9" width="9" height="12.2" fill="#007dff"/><rect x="161.5" y="139.9" width="9" height="12.2" fill="#0085ff"/><rect x="170.4" y="139.9" width="9" height="12.2" fill="#0085ff"/><rect x="179.4" y="139.9" width="9" height="12.2" fill="#008dff"/><rect x="188.4" y="139.9" width="9" height="12.2" fill="#0091ff"/><rect x="197.3" y="139.9" width="9" height="12.2" fill="#0099ff"/><rect x="206.3" y="139.9" width="9" height="12.2" fill="#0083ff"/><rect x="215.3" y="139.9" width="9" height="12.2" fill="#0083ff"/><rect x="224.3" y="139.9" width="9" height="12.2" fill="#007dff"/><rect x="233.2" y="139.9" width="9" height="12.2" fill="#008fff"/><rect x="242.2" y="139.9" width="9" height="12.2" fill="#00a7ff"/><rect x="251.2" y="139.9" width="9" height="12.2" fill="#00b8ff"/><rect x="260.1" y="139.9" width="9" height="12.2" fill="#00a7ff"/><rect x="269.1" y="139.9" width="9" height="12.2" fill="#0089ff"/><rect x="278.1" y="139.9" width="9" height="12.2" fill="#40ffbe"/><rect x="287.0" y="139.9" width="9" height="12.2" fill="#87ff77"/><rect x="296.0" y="139.9" width="9" height="12.2" fill="#44ffba"/><rect x="305.0" y="139.9" width="9" height="12.2" fill="#008dff"/><rect x="314.0" y="139.9" width="9" height="12.2" fill="#0095ff"/><rect x="322.9" y="139.9" width="9" height="12.2" fill="#0087ff"/><rect x="331.9" y="139.9" width="9" height="12.2" fill="#0087ff"/><rect x="340.9" y="139.9" width="9" height="12.2" fill="#0085ff"/><rect x="349.8" y="139.9" width="9" height="12.2" fill="#008dff"/><rect x="358.8" y="139.9" width="9" height="12.2" fill="#007fff"/><rect x="367.8" y="139.9" width="9" height="12.2" fill="#007dff"/><rect x="376.7" y="139.9" width="9" height="12.2" fill="#0081ff"/><rect x="385.7" y="139.9" width="9" height="12.2" fill="#008fff"/><rect x="394.7" y="139.9" width="9" height="12.2" fill="#0085ff"/><rect x="403.7" y="139.9" width="9" height="12.2" fill="#0085ff"/><rect x="412.6" y="139.9" width="9" height="12.2" fill="#0087ff"/><rect x="421.6" y="139.9" width="9" height="12.2" fill="#0087ff"/><rect x="430.6" y="139.9" width="9" height="12.2" fill="#0093ff"/><rect x="439.5" y="139.9" width="9" height="12.2" fill="#0099ff"/><rect x="448.5" y="139.9" width="9" height="12.2" fill="#0095ff"/><rect x="457.5" y="139.9" width="9" height="12.2" fill="#0097ff"/><rect x="466.4" y="139.9" width="9" height="12.2" fill="#008fff"/><rect x="475.4" y="139.9" width="9" height="12.2" fill="#0087ff"/><rect x="484.4" y="139.9" width="9" height="12.2" fill="#008bff"/><rect x="493.4" y="139.9" width="9" height="12.2" fill="#0089ff"/><rect x="502.3" y="139.9" width="9" height="12.2" fill="#0081ff"/><rect x="511.3" y="139.9" width="9" height="12.2" fill="#008bff"/><rect x="520.3" y="139.9" width="9" height="12.2" fill="#0077ff"/><rect x="529.2" y="139.9" width="9" height="12.2" fill="#008fff"/><rect x="538.2" y="139.9" width="9" height="12.2" fill="#0083ff"/><rect x="547.2" y="139.9" width="9" height="12.2" fill="#007fff"/><rect x="556.1" y="139.9" width="9" height="12.2" fill="#0081ff"/><rect x="0.0" y="151.5" width="9" height="12.2" fill="#0085ff"/><rect x="9.0" y="151.5" width="9" height="12.2" fill="#0089ff"/><rect x="17.9" y="151.5" width="9" height="12.2" fill="#007bff"/><rect x="26.9" y="151.5" width="9" height="12.2" fill="#0085ff"/><rect x="35.9" y="151.5" width="9" height="12.2" fill="#007dff"/><rect x="44.9" y="151.5" width="9" height="12.2" fill="#0077ff"/><rect x="53.8" y="151.5" width="9" height="12.2" fill="#0083ff"/><rect x="62.8" y="151.5" width="9" height="12.2" fill="#0081ff"/><rect x="71.8" y="151.5" width="9" height="12.2" fill="#007fff"/><rect x="80.7" y="151.5" width="9" height="12.2" fill="#0087ff"/><rect x="89.7" y="151.5" width="9" height="12.2" fill="#0085ff"/><rect x="98.7" y="151.5" width="9" height="12.2" fill="#0085ff"/><rect x="107.6" y="151.5" width="9" height="12.2" fill="#007dff"/><rect x="116.6" y="151.5" width="9" height="12.2" fill="#0087ff"/><rect x="125.6" y="151.5" width="9" height="12.2" fill="#0087ff"/><rect x="134.6" y="151.5" width="9" height="12.2" fill="#00a9ff"/><rect x="143.5" y="151.5" width="9" height="12.2" fill="#009bff"/><rect x="152.5" y="151.5" width="9" height="12.2" fill="#0081ff"/><rect x="161.5" y="151.5" width="9" height="12.2" fill="#007bff"/><rect x="170.4" y="151.5" width="9" height="12.2" fill="#007bff"/><rect x="179.4" y="151.5" width="9" height="12.2" fill="#0085ff"/><rect x="188.4" y="151.5" width="9" height="12.2" fill="#0091ff"/><rect x="197.3" y="151.5" width="9" height="12.2" fill="#0089ff"/><rect x="206.3" y="151.5" width="9" height="12.2" fill="#0085ff"/><rect x="215.3" y="151.5" width="9" height="12.2" fill="#0087ff"/><rect x="224.3" y="151.5" width="9" height="12.2" fill="#0085ff"/><rect x="233.2" y="151.5" width="9" height="12.2" fill="#00a3ff"/><rect x="242.2" y="151.5" width="9" height="12.2" fill="#00b6ff"/><rect x="251.2" y="151.5" width="9" height="12.2" fill="#00baff"/><rect x="260.1" y="151.5" width="9" height="12.2" fill="#00aaff"/><rect x="269.1" y="151.5" width="9" height="12.2" fill="#0087ff"/><rect x="278.1" y="151.5" width="9" height="12.2" fill="#46ffb8"/><rect x="287.0" y="151.5" width="9" height="12.2" fill="#95ff69"/><rect x="296.0" y="151.5" width="9" height="12.2" fill="#48ffb6"/><rect x="305.0" y="151.5" width="9" height="12.2" fill="#0089ff"/><rect x="314.0" y="151.5" width="9" height="12.2" fill="#0087ff"/><rect x="322.9" y="151.5" width="9" height="12.2" fill="#0087ff"/><rect x="331.9" y="151.5" width="9" height="12.2" fill="#0083ff"/><rect x="340.9" y="151.5" width="9" height="12.2" fill="#0083ff"/><rect x="349.8" y="151.5" width="9" height="12.2" fill="#0087ff"/><rect x="358.8" y="151.5" width="9" height="12.2" fill="#0083ff"/><rect x="367.8" y="151.5" width="9" height="12.2" fill="#0089ff"/><rect x="376.7" y="151.5" width="9" height="12.2" fill="#007fff"/><rect x="385.7" y="151.5" width="9" height="12.2" fill="#007bff"/><rect x="394.7" y="151.5" width="9" height="12.2" fill="#0075ff"/><rect x="403.7" y="151.5" width="9" height="12.2" fill="#007bff"/><rect x="412.6" y="151.5" width="9" height="12.2" fill="#0089ff"/><rect x="421.6" y="151.5" width="9" height="12.2" fill="#009bff"/><rect x="430.6" y="151.5" width="9" height="12.2" fill="#0097ff"/><rect x="439.5" y="151.5" width="9" height="12.2" fill="#009fff"/><rect x="448.5" y="151.5" width="9" height="12.2" fill="#04a5fa"/><rect x="457.5" y="151.5" width="9" height="12.2" fill="#04a5fa"/><rect x="466.4" y="151.5" width="9" height="12.2" fill="#06a9f8"/><rect x="475.4" y="151.5" width="9" height="12.2" fill="#0085ff"/><rect x="484.4" y="151.5" width="9" height="12.2" fill="#007dff"/><rect x="493.4" y="151.5" width="9" height="12.2" fill="#0081ff"/><rect x="502.3" y="151.5" width="9" height="12.2" fill="#0081ff"/><rect x="511.3" y="151.5" width="9" height="12.2" fill="#0083ff"/><rect x="520.3" y="151.5" width="9" height="12.2" fill="#0079ff"/><rect x="529.2" y="151.5" width="9" height="12.2" fill="#0089ff"/><rect x="538.2" y="151.5" width="9" height="12.2" fill="#0083ff"/><rect x="547.2" y="151.5" width="9" height="12.2" fill="#008bff"/><rect x="556.1" y="151.5" width="9" height="12.2" fill="#0081ff"/><rect x="0.0" y="163.2" width="9" height="12.2" fill="#0085ff"/><rect x="9.0" y="163.2" width="9" height="12.2" fill="#0087ff"/><rect x="17.9" y="163.2" width="9" height="12.2" fill="#0081ff"/><rect x="26.9" y="163.2" width="9" height="12.2" fill="#0085ff"/><rect x="35.9" y="163.2" width="9" height="12.2" fill="#0083ff"/><rect x="44.9" y="163.2" width="9" height="12.2" fill="#0087ff"/><rect x="53.8" y="163.2" width="9" height="12.2" fill="#0087ff"/><rect x="62.8" y="163.2" width="9" height="12.2" fill="#0087ff"/><rect x="71.8" y="163.2" width="9" height="12.2" fill="#0093ff"/><rect x="80.7" y="163.2" width="9" height="12.2" fill="#0087ff"/><rect x="89.7" y="163.2" width="9" height="12.2" fill="#008bff"/><rect x="98.7" y="163.2" width="9" height="12.2" fill="#0089ff"/><rect x="107.6" y="163.2" width="9" height="12.2" fill="#0087ff"/><rect x="116.6" y="163.2" width="9" height="12.2" fill="#007bff"/><rect x="125.6" y="163.2" width="9" height="12.2" fill="#008dff"/><rect x="134.6" y="163.2" width="9" height="12.2" fill="#009bff"/><rect x="143.5" y="163.2" width="9" height="12.2" fill="#009bff"/><rect x="152.5" y="163.2" width="9" height="12.2" fill="#008dff"/><rect x="161.5" y="163.2" width="9" height="12.2" fill="#0087ff"/><rect x="170.4" y="163.2" width="9" height="12.2" fill="#0089ff"/><rect x="179.4" y="163.2" width="9" height="12.2" fill="#0093ff"/><rect x="188.4" y="163.2" width="9" height="12.2" fill="#0087ff"/><rect x="197.3" y="163.2" width="9" height="12.2" fill="#0093ff"/><rect x="206.3" y="163.2" width="9" height="12.2" fill="#009dff"/><rect x="215.3" y="163.2" width="9" height="12.2" fill="#1b86e3"/><rect x="224.3" y="163.2" width="9" height="12.2" fill="#1797e7"/><rect x="233.2" y="163.2" width="9" height="12.2" fill="#19a9e5"/><rect x="242.2" y="163.2" width="9" height="12.2" fill="#00b8ff"/><rect x="251.2" y="163.2" width="9" height="12.2" fill="#08c7f6"/><rect x="260.1" y="163.2" width="9" height="12.2" fill="#00beff"/><rect x="269.1" y="163.2" width="9" height="12.2" fill="#008fff"/><rect x="278.1" y="163.2" width="9" height="12.2" fill="#48ffb6"/><rect x="287.0" y="163.2" width="9" height="12.2" fill="#95ff69"/><rect x="296.0" y="163.2" width="9" height="12.2" fill="#46ffb8"/><rect x="305.0" y="163.2" width="9" height="12.2" fill="#007bff"/><rect x="314.0" y="163.2" width="9" height="12.2" fill="#008fff"/><rect x="322.9" y="163.2" width="9" height="12.2" fill="#007dff"/><rect x="331.9" y="163.2" width="9" height="12.2" fill="#0089ff"/><rect x="340.9" y="163.2" width="9" height="12.2" fill="#008dff"/><rect x="349.8" y="163.2" width="9" height="12.2" fill="#0093ff"/><rect x="358.8" y="163.2" width="9" height="12.2" fill="#0085ff"/><rect x="367.8" y="163.2" width="9" height="12.2" fill="#0089ff"/><rect x="376.7" y="163.2" width="9" height="12.2" fill="#0091ff"/><rect x="385.7" y="163.2" width="9" height="12.2" fill="#0089ff"/><rect x="394.7" y="163.2" width="9" height="12.2" fill="#0085ff"/><rect x="403.7" y="163.2" width="9" height="12.2" fill="#0085ff"/><rect x="412.6" y="163.2" width="9" height="12.2" fill="#008dff"/><rect x="421.6" y="163.2" width="9" height="12.2" fill="#0091ff"/><rect x="430.6" y="163.2" width="9" height="12.2" fill="#0097ff"/><rect x="439.5" y="163.2" width="9" height="12.2" fill="#009fff"/><rect x="448.5" y="163.2" width="9" height="12.2" fill="#00a1ff"/><rect x="457.5" y="163.2" width="9" height="12.2" fill="#00b0ff"/><rect x="466.4" y="163.2" width="9" height="12.2" fill="#009dff"/><rect x="475.4" y="163.2" width="9" height="12.2" fill="#0097ff"/><rect x="484.4" y="163.2" width="9" height="12.2" fill="#0089ff"/><rect x="493.4" y="163.2" width="9" height="12.2" fill="#007dff"/><rect x="502.3" y="163.2" width="9" height="12.2" fill="#007bff"/><rect x="511.3" y="163.2" width="9" height="12.2" fill="#0085ff"/><rect x="520.3" y="163.2" width="9" height="12.2" fill="#0297fc"/><rect x="529.2" y="163.2" width="9" height="12.2" fill="#0697f8"/><rect x="538.2" y="163.2" width="9" height="12.2" fill="#0083ff"/><rect x="547.2" y="163.2" width="9" height="12.2" fill="#0085ff"/><rect x="556.1" y="163.2" width="9" height="12.2" fill="#007bff"/><rect x="0.0" y="174.8" width="9" height="12.2" fill="#008bff"/><rect x="9.0" y="174.8" width="9" height="12.2" fill="#007dff"/><rect x="17.9" y="174.8" width="9" height="12.2" fill="#0083ff"/><rect x="26.9" y="174.8" width="9" height="12.2" fill="#0087ff"/><rect x="35.9" y="174.8" width="9" height="12.2" fill="#0087ff"/><rect x="44.9" y="174.8" width="9" height="12.2" fill="#0089ff"/><rect x="53.8" y="174.8" width="9" height="12.2" fill="#007dff"/><rect x="62.8" y="174.8" width="9" height="12.2" fill="#0083ff"/><rect x="71.8" y="174.8" width="9" height="12.2" fill="#0081ff"/><rect x="80.7" y="174.8" width="9" height="12.2" fill="#0089ff"/><rect x="89.7" y="174.8" width="9" height="12.2" fill="#0087ff"/><rect x="98.7" y="174.8" width="9" height="12.2" fill="#0081ff"/><rect x="107.6" y="174.8" width="9" height="12.2" fill="#0085ff"/><rect x="116.6" y="174.8" width="9" height="12.2" fill="#0081ff"/><rect x="125.6" y="174.8" width="9" height="12.2" fill="#008bff"/><rect x="134.6" y="174.8" width="9" height="12.2" fill="#009fff"/><rect x="143.5" y="174.8" width="9" height="12.2" fill="#009fff"/><rect x="152.5" y="174.8" width="9" height="12.2" fill="#0081ff"/><rect x="161.5" y="174.8" width="9" height="12.2" fill="#0085ff"/><rect x="170.4" y="174.8" width="9" height="12.2" fill="#007fff"/><rect x="179.4" y="174.8" width="9" height="12.2" fill="#0085ff"/><rect x="188.4" y="174.8" width="9" height="12.2" fill="#007fff"/><rect x="197.3" y="174.8" width="9" height="12.2" fill="#008dff"/><rect x="206.3" y="174.8" width="9" height="12.2" fill="#0087ff"/><rect x="215.3" y="174.8" width="9" height="12.2" fill="#008fff"/><rect x="224.3" y="174.8" width="9" height="12.2" fill="#1ba9e3"/><rect x="233.2" y="174.8" width="9" height="12.2" fill="#2cc4d2"/><rect x="242.2" y="174.8" width="9" height="12.2" fill="#21d5dd"/><rect x="251.2" y="174.8" width="9" height="12.2" fill="#14cbea"/><rect x="260.1" y="174.8" width="9" height="12.2" fill="#00beff"/><rect x="269.1" y="174.8" width="9" height="12.2" fill="#008fff"/><rect x="278.1" y="174.8" width="9" height="12.2" fill="#54ffaa"/><rect x="287.0" y="174.8" width="9" height="12.2" fill="#9bff63"/><rect x="296.0" y="174.8" width="9" height="12.2" fill="#50ffae"/><rect x="305.0" y="174.8" width="9" height="12.2" fill="#0085ff"/><rect x="314.0" y="174.8" width="9" height="12.2" fill="#0081ff"/><rect x="322.9" y="174.8" width="9" height="12.2" fill="#008dff"/><rect x="331.9" y="174.8" width="9" height="12.2" fill="#008dff"/><rect x="340.9" y="174.8" width="9" height="12.2" fill="#007fff"/><rect x="349.8" y="174.8" width="9" height="12.2" fill="#008dff"/><rect x="358.8" y="174.8" width="9" height="12.2" fill="#008bff"/><rect x="367.8" y="174.8" width="9" height="12.2" fill="#008bff"/><rect x="376.7" y="174.8" width="9" height="12.2" fill="#0083ff"/><rect x="385.7" y="174.8" width="9" height="12.2" fill="#0083ff"/><rect x="394.7" y="174.8" width="9" height="12.2" fill="#008bff"/><rect x="403.7" y="174.8" width="9" height="12.2" fill="#0081ff"/><rect x="412.6" y="174.8" width="9" height="12.2" fill="#0089ff"/><rect x="421.6" y="174.8" width="9" height="12.2" fill="#0095ff"/><rect x="430.6" y="174.8" width="9" height="12.2" fill="#00aaff"/><rect x="439.5" y="174.8" width="9" height="12.2" fill="#06bbf8"/><rect x="448.5" y="174.8" width="9" height="12.2" fill="#0ab7f4"/><rect x="457.5" y="174.8" width="9" height="12.2" fill="#08b7f6"/><rect x="466.4" y="174.8" width="9" height="12.2" fill="#0db6f1"/><rect x="475.4" y="174.8" width="9" height="12.2" fill="#06a7f8"/><rect x="484.4" y="174.8" width="9" height="12.2" fill="#02a1fc"/><rect x="493.4" y="174.8" width="9" height="12.2" fill="#0083ff"/><rect x="502.3" y="174.8" width="9" height="12.2" fill="#0087ff"/><rect x="511.3" y="174.8" width="9" height="12.2" fill="#0089ff"/><rect x="520.3" y="174.8" width="9" height="12.2" fill="#007fff"/><rect x="529.2" y="174.8" width="9" height="12.2" fill="#0083ff"/><rect x="538.2" y="174.8" width="9" height="12.2" fill="#0089ff"/><rect x="547.2" y="174.8" width="9" height="12.2" fill="#008fff"/><rect x="556.1" y="174.8" width="9" height="12.2" fill="#008dff"/><rect x="0.0" y="186.5" width="9" height="12.2" fill="#0073ff"/><rect x="9.0" y="186.5" width="9" height="12.2" fill="#0079ff"/><rect x="17.9" y="186.5" width="9" height="12.2" fill="#007dff"/><rect x="26.9" y="186.5" width="9" height="12.2" fill="#0075ff"/><rect x="35.9" y="186.5" width="9" height="12.2" fill="#007bff"/><rect x="44.9" y="186.5" width="9" height="12.2" fill="#0089ff"/><rect x="53.8" y="186.5" width="9" height="12.2" fill="#0083ff"/><rect x="62.8" y="186.5" width="9" height="12.2" fill="#007fff"/><rect x="71.8" y="186.5" width="9" height="12.2" fill="#007dff"/><rect x="80.7" y="186.5" width="9" height="12.2" fill="#007fff"/><rect x="89.7" y="186.5" width="9" height="12.2" fill="#0087ff"/><rect x="98.7" y="186.5" width="9" height="12.2" fill="#007bff"/><rect x="107.6" y="186.5" width="9" height="12.2" fill="#007fff"/><rect x="116.6" y="186.5" width="9" height="12.2" fill="#007fff"/><rect x="125.6" y="186.5" width="9" height="12.2" fill="#0075ff"/><rect x="134.6" y="186.5" width="9" height="12.2" fill="#0091ff"/><rect x="143.5" y="186.5" width="9" height="12.2" fill="#008fff"/><rect x="152.5" y="186.5" width="9" height="12.2" fill="#008fff"/><rect x="161.5" y="186.5" width="9" height="12.2" fill="#0089ff"/><rect x="170.4" y="186.5" width="9" height="12.2" fill="#0077ff"/><rect x="179.4" y="186.5" width="9" height="12.2" fill="#007dff"/><rect x="188.4" y="186.5" width="9" height="12.2" fill="#007dff"/><rect x="197.3" y="186.5" width="9" height="12.2" fill="#0077ff"/><rect x="206.3" y="186.5" width="9" height="12.2" fill="#007dff"/><rect x="215.3" y="186.5" width="9" height="12.2" fill="#0095ff"/><rect x="224.3" y="186.5" width="9" height="12.2" fill="#0ca5f2"/><rect x="233.2" y="186.5" width="9" height="12.2" fill="#19b7e5"/><rect x="242.2" y="186.5" width="9" height="12.2" fill="#19e1e5"/><rect x="251.2" y="186.5" width="9" height="12.2" fill="#21dbdd"/><rect x="260.1" y="186.5" width="9" height="12.2" fill="#0abbf4"/><rect x="269.1" y="186.5" width="9" height="12.2" fill="#0093ff"/><rect x="278.1" y="186.5" width="9" height="12.2" fill="#57ffa7"/><rect x="287.0" y="186.5" width="9" height="12.2" fill="#9fff5f"/><rect x="296.0" y="186.5" width="9" height="12.2" fill="#59ffa5"/><rect x="305.0" y="186.5" width="9" height="12.2" fill="#0073ff"/><rect x="314.0" y="186.5" width="9" height="12.2" fill="#0083ff"/><rect x="322.9" y="186.5" width="9" height="12.2" fill="#0091ff"/><rect x="331.9" y="186.5" width="9" height="12.2" fill="#007dff"/><rect x="340.9" y="186.5" width="9" height="12.2" fill="#0091ff"/><rect x="349.8" y="186.5" width="9" height="12.2" fill="#007fff"/><rect x="358.8" y="186.5" width="9" height="12.2" fill="#0077ff"/><rect x="367.8" y="186.5" width="9" height="12.2" fill="#0083ff"/><rect x="376.7" y="186.5" width="9" height="12.2" fill="#0089ff"/><rect x="385.7" y="186.5" width="9" height="12.2" fill="#0081ff"/><rect x="394.7" y="186.5" width="9" height="12.2" fill="#0077ff"/><rect x="403.7" y="186.5" width="9" height="12.2" fill="#0081ff"/><rect x="412.6" y="186.5" width="9" height="12.2" fill="#008fff"/><rect x="421.6" y="186.5" width="9" height="12.2" fill="#0099ff"/><rect x="430.6" y="186.5" width="9" height="12.2" fill="#00aeff"/><rect x="439.5" y="186.5" width="9" height="12.2" fill="#00b2ff"/><rect x="448.5" y="186.5" width="9" height="12.2" fill="#00a7ff"/><rect x="457.5" y="186.5" width="9" height="12.2" fill="#00b2ff"/><rect x="466.4" y="186.5" width="9" height="12.2" fill="#00a3ff"/><rect x="475.4" y="186.5" width="9" height="12.2" fill="#0095ff"/><rect x="484.4" y="186.5" width="9" height="12.2" fill="#0089ff"/><rect x="493.4" y="186.5" width="9" height="12.2" fill="#007fff"/><rect x="502.3" y="186.5" width="9" height="12.2" fill="#006fff"/><rect x="511.3" y="186.5" width="9" height="12.2" fill="#0083ff"/><rect x="520.3" y="186.5" width="9" height="12.2" fill="#007fff"/><rect x="529.2" y="186.5" width="9" height="12.2" fill="#007fff"/><rect x="538.2" y="186.5" width="9" height="12.2" fill="#0083ff"/><rect x="547.2" y="186.5" width="9" height="12.2" fill="#007fff"/><rect x="556.1" y="186.5" width="9" height="12.2" fill="#008bff"/><rect x="0.0" y="198.2" width="9" height="12.2" fill="#0081ff"/><rect x="9.0" y="198.2" width="9" height="12.2" fill="#007fff"/><rect x="17.9" y="198.2" width="9" height="12.2" fill="#0085ff"/><rect x="26.9" y="198.2" width="9" height="12.2" fill="#0087ff"/><rect x="35.9" y="198.2" width="9" height="12.2" fill="#007dff"/><rect x="44.9" y="198.2" width="9" height="12.2" fill="#0087ff"/><rect x="53.8" y="198.2" width="9" height="12.2" fill="#007fff"/><rect x="62.8" y="198.2" width="9" height="12.2" fill="#0077ff"/><rect x="71.8" y="198.2" width="9" height="12.2" fill="#0081ff"/><rect x="80.7" y="198.2" width="9" height="12.2" fill="#008bff"/><rect x="89.7" y="198.2" width="9" height="12.2" fill="#0083ff"/><rect x="98.7" y="198.2" width="9" height="12.2" fill="#0085ff"/><rect x="107.6" y="198.2" width="9" height="12.2" fill="#0083ff"/><rect x="116.6" y="198.2" width="9" height="12.2" fill="#0091ff"/><rect x="125.6" y="198.2" width="9" height="12.2" fill="#0085ff"/><rect x="134.6" y="198.2" width="9" height="12.2" fill="#009bff"/><rect x="143.5" y="198.2" width="9" height="12.2" fill="#009dff"/><rect x="152.5" y="198.2" width="9" height="12.2" fill="#0089ff"/><rect x="161.5" y="198.2" width="9" height="12.2" fill="#007bff"/><rect x="170.4" y="198.2" width="9" height="12.2" fill="#0087ff"/><rect x="179.4" y="198.2" width="9" height="12.2" fill="#0087ff"/><rect x="188.4" y="198.2" width="9" height="12.2" fill="#0087ff"/><rect x="197.3" y="198.2" width="9" height="12.2" fill="#007bff"/><rect x="206.3" y="198.2" width="9" height="12.2" fill="#0089ff"/><rect x="215.3" y="198.2" width="9" height="12.2" fill="#0e9ff0"/><rect x="224.3" y="198.2" width="9" height="12.2" fill="#0eb5f0"/><rect x="233.2" y="198.2" width="9" height="12.2" fill="#25cad9"/><rect x="242.2" y="198.2" width="9" height="12.2" fill="#15dfe9"/><rect x="251.2" y="198.2" width="9" height="12.2" fill="#00d7fe"/><rect x="260.1" y="198.2" width="9" height="12.2" fill="#00c8ff"/><rect x="269.1" y="198.2" width="9" height="12.2" fill="#009dff"/><rect x="278.1" y="198.2" width="9" height="12.2" fill="#5fff9f"/><rect x="287.0" y="198.2" width="9" height="12.2" fill="#a5ff59"/><rect x="296.0" y="198.2" width="9" height="12.2" fill="#61ff9d"/><rect x="305.0" y="198.2" width="9" height="12.2" fill="#007fff"/><rect x="314.0" y="198.2" width="9" height="12.2" fill="#007dff"/><rect x="322.9" y="198.2" width="9" height="12.2" fill="#007bff"/><rect x="331.9" y="198.2" width="9" height="12.2" fill="#0073ff"/><rect x="340.9" y="198.2" width="9" height="12.2" fill="#0077ff"/><rect x="349.8" y="198.2" width="9" height="12.2" fill="#008bff"/><rect x="358.8" y="198.2" width="9" height="12.2" fill="#008dff"/><rect x="367.8" y="198.2" width="9" height="12.2" fill="#0085ff"/><rect x="376.7" y="198.2" width="9" height="12.2" fill="#007bff"/><rect x="385.7" y="198.2" width="9" height="12.2" fill="#0085ff"/><rect x="394.7" y="198.2" width="9" height="12.2" fill="#0087ff"/><rect x="403.7" y="198.2" width="9" height="12.2" fill="#0083ff"/><rect x="412.6" y="198.2" width="9" height="12.2" fill="#0093ff"/><rect x="421.6" y="198.2" width="9" height="12.2" fill="#009fff"/><rect x="430.6" y="198.2" width="9" height="12.2" fill="#00b4ff"/><rect x="439.5" y="198.2" width="9" height="12.2" fill="#00bcff"/><rect x="448.5" y="198.2" width="9" height="12.2" fill="#00c4ff"/><rect x="457.5" y="198.2" width="9" height="12.2" fill="#00c2ff"/><rect x="466.4" y="198.2" width="9" height="12.2" fill="#00b0ff"/><rect x="475.4" y="198.2" width="9" height="12.2" fill="#009fff"/><rect x="484.4" y="198.2" width="9" height="12.2" fill="#0091ff"/><rect x="493.4" y="198.2" width="9" height="12.2" fill="#008dff"/><rect x="502.3" y="198.2" width="9" height="12.2" fill="#0083ff"/><rect x="511.3" y="198.2" width="9" height="12.2" fill="#0085ff"/><rect x="520.3" y="198.2" width="9" height="12.2" fill="#008fff"/><rect x="529.2" y="198.2" width="9" height="12.2" fill="#0085ff"/><rect x="538.2" y="198.2" width="9" height="12.2" fill="#007bff"/><rect x="547.2" y="198.2" width="9" height="12.2" fill="#007bff"/><rect x="556.1" y="198.2" width="9" height="12.2" fill="#0079ff"/><rect x="0.0" y="209.8" width="9" height="12.2" fill="#007bff"/><rect x="9.0" y="209.8" width="9" height="12.2" fill="#0081ff"/><rect x="17.9" y="209.8" width="9" height="12.2" fill="#007bff"/><rect x="26.9" y="209.8" width="9" height="12.2" fill="#007dff"/><rect x="35.9" y="209.8" width="9" height="12.2" fill="#0091ff"/><rect x="44.9" y="209.8" width="9" height="12.2" fill="#008fff"/><rect x="53.8" y="209.8" width="9" height="12.2" fill="#0083ff"/><rect x="62.8" y="209.8" width="9" height="12.2" fill="#008dff"/><rect x="71.8" y="209.8" width="9" height="12.2" fill="#0083ff"/><rect x="80.7" y="209.8" width="9" height="12.2" fill="#0081ff"/><rect x="89.7" y="209.8" width="9" height="12.2" fill="#0085ff"/><rect x="98.7" y="209.8" width="9" height="12.2" fill="#007dff"/><rect x="107.6" y="209.8" width="9" height="12.2" fill="#0083ff"/><rect x="116.6" y="209.8" width="9" height="12.2" fill="#0085ff"/><rect x="125.6" y="209.8" width="9" height="12.2" fill="#0087ff"/><rect x="134.6" y="209.8" width="9" height="12.2" fill="#0095ff"/><rect x="143.5" y="209.8" width="9" height="12.2" fill="#0097ff"/><rect x="152.5" y="209.8" width="9" height="12.2" fill="#008bff"/><rect x="161.5" y="209.8" width="9" height="12.2" fill="#0087ff"/><rect x="170.4" y="209.8" width="9" height="12.2" fill="#008fff"/><rect x="179.4" y="209.8" width="9" height="12.2" fill="#008dff"/><rect x="188.4" y="209.8" width="9" height="12.2" fill="#0087ff"/><rect x="197.3" y="209.8" width="9" height="12.2" fill="#007bff"/><rect x="206.3" y="209.8" width="9" height="12.2" fill="#0083ff"/><rect x="215.3" y="209.8" width="9" height="12.2" fill="#0099ff"/><rect x="224.3" y="209.8" width="9" height="12.2" fill="#00aaff"/><rect x="233.2" y="209.8" width="9" height="12.2" fill="#14cbea"/><rect x="242.2" y="209.8" width="9" height="12.2" fill="#17d9e7"/><rect x="251.2" y="209.8" width="9" height="12.2" fill="#13e1eb"/><rect x="260.1" y="209.8" width="9" height="12.2" fill="#00beff"/><rect x="269.1" y="209.8" width="9" height="12.2" fill="#008fff"/><rect x="278.1" y="209.8" width="9" height="12.2" fill="#63ff9b"/><rect x="287.0" y="209.8" width="9" height="12.2" fill="#a7ff57"/><rect x="296.0" y="209.8" width="9" height="12.2" fill="#65ff99"/><rect x="305.0" y="209.8" width="9" height="12.2" fill="#0085ff"/><rect x="314.0" y="209.8" width="9" height="12.2" fill="#0077ff"/><rect x="322.9" y="209.8" width="9" height="12.2" fill="#0081ff"/><rect x="331.9" y="209.8" width="9" height="12.2" fill="#0081ff"/><rect x="340.9" y="209.8" width="9" height="12.2" fill="#0081ff"/><rect x="349.8" y="209.8" width="9" height="12.2" fill="#0083ff"/><rect x="358.8" y="209.8" width="9" height="12.2" fill="#007bff"/><rect x="367.8" y="209.8" width="9" height="12.2" fill="#0071ff"/><rect x="376.7" y="209.8" width="9" height="12.2" fill="#0071ff"/><rect x="385.7" y="209.8" width="9" height="12.2" fill="#0085ff"/><rect x="394.7" y="209.8" width="9" height="12.2" fill="#0081ff"/><rect x="403.7" y="209.8" width="9" height="12.2" fill="#0087ff"/><rect x="412.6" y="209.8" width="9" height="12.2" fill="#009fff"/><rect x="421.6" y="209.8" width="9" height="12.2" fill="#00a7ff"/><rect x="430.6" y="209.8" width="9" height="12.2" fill="#08bff6"/><rect x="439.5" y="209.8" width="9" height="12.2" fill="#0ccdf2"/><rect x="448.5" y="209.8" width="9" height="12.2" fill="#00bcff"/><rect x="457.5" y="209.8" width="9" height="12.2" fill="#00caff"/><rect x="466.4" y="209.8" width="9" height="12.2" fill="#00c2ff"/><rect x="475.4" y="209.8" width="9" height="12.2" fill="#00acff"/><rect x="484.4" y="209.8" width="9" height="12.2" fill="#0097ff"/><rect x="493.4" y="209.8" width="9" height="12.2" fill="#0093ff"/><rect x="502.3" y="209.8" width="9" height="12.2" fill="#007dff"/><rect x="511.3" y="209.8" width="9" height="12.2" fill="#0085ff"/><rect x="520.3" y="209.8" width="9" height="12.2" fill="#008dff"/><rect x="529.2" y="209.8" width="9" height="12.2" fill="#0087ff"/><rect x="538.2" y="209.8" width="9" height="12.2" fill="#0087ff"/><rect x="547.2" y="209.8" width="9" height="12.2" fill="#0089ff"/><rect x="556.1" y="209.8" width="9" height="12.2" fill="#007bff"/><rect x="0.0" y="221.5" width="9" height="12.2" fill="#008dff"/><rect x="9.0" y="221.5" width="9" height="12.2" fill="#0085ff"/><rect x="17.9" y="221.5" width="9" height="12.2" fill="#008bff"/><rect x="26.9" y="221.5" width="9" height="12.2" fill="#0093ff"/><rect x="35.9" y="221.5" width="9" height="12.2" fill="#008bff"/><rect x="44.9" y="221.5" width="9" height="12.2" fill="#008dff"/><rect x="53.8" y="221.5" width="9" height="12.2" fill="#0081ff"/><rect x="62.8" y="221.5" width="9" height="12.2" fill="#0081ff"/><rect x="71.8" y="221.5" width="9" height="12.2" fill="#008fff"/><rect x="80.7" y="221.5" width="9" height="12.2" fill="#0091ff"/><rect x="89.7" y="221.5" width="9" height="12.2" fill="#0087ff"/><rect x="98.7" y="221.5" width="9" height="12.2" fill="#008dff"/><rect x="107.6" y="221.5" width="9" height="12.2" fill="#0085ff"/><rect x="116.6" y="221.5" width="9" height="12.2" fill="#0093ff"/><rect x="125.6" y="221.5" width="9" height="12.2" fill="#008fff"/><rect x="134.6" y="221.5" width="9" height="12.2" fill="#00b0ff"/><rect x="143.5" y="221.5" width="9" height="12.2" fill="#00a7ff"/><rect x="152.5" y="221.5" width="9" height="12.2" fill="#0095ff"/><rect x="161.5" y="221.5" width="9" height="12.2" fill="#008dff"/><rect x="170.4" y="221.5" width="9" height="12.2" fill="#008bff"/><rect x="179.4" y="221.5" width="9" height="12.2" fill="#0093ff"/><rect x="188.4" y="221.5" width="9" height="12.2" fill="#0097ff"/><rect x="197.3" y="221.5" width="9" height="12.2" fill="#008bff"/><rect x="206.3" y="221.5" width="9" height="12.2" fill="#008dff"/><rect x="215.3" y="221.5" width="9" height="12.2" fill="#0097ff"/><rect x="224.3" y="221.5" width="9" height="12.2" fill="#29b8d5"/><rect x="233.2" y="221.5" width="9" height="12.2" fill="#3cdac2"/><rect x="242.2" y="221.5" width="9" height="12.2" fill="#3cf2c2"/><rect x="251.2" y="221.5" width="9" height="12.2" fill="#27e1d7"/><rect x="260.1" y="221.5" width="9" height="12.2" fill="#00d1fe"/><rect x="269.1" y="221.5" width="9" height="12.2" fill="#008fff"/><rect x="278.1" y="221.5" width="9" height="12.2" fill="#69ff95"/><rect x="287.0" y="221.5" width="9" height="12.2" fill="#b6ff48"/><rect x="296.0" y="221.5" width="9" height="12.2" fill="#67ff97"/><rect x="305.0" y="221.5" width="9" height="12.2" fill="#0093ff"/><rect x="314.0" y="221.5" width="9" height="12.2" fill="#009bff"/><rect x="322.9" y="221.5" width="9" height="12.2" fill="#0085ff"/><rect x="331.9" y="221.5" width="9" height="12.2" fill="#0093ff"/><rect x="340.9" y="221.5" width="9" height="12.2" fill="#009fff"/><rect x="349.8" y="221.5" width="9" height="12.2" fill="#007fff"/><rect x="358.8" y="221.5" width="9" height="12.2" fill="#0091ff"/><rect x="367.8" y="221.5" width="9" height="12.2" fill="#0089ff"/><rect x="376.7" y="221.5" width="9" height="12.2" fill="#008fff"/><rect x="385.7" y="221.5" width="9" height="12.2" fill="#0089ff"/><rect x="394.7" y="221.5" width="9" height="12.2" fill="#008dff"/><rect x="403.7" y="221.5" width="9" height="12.2" fill="#0095ff"/><rect x="412.6" y="221.5" width="9" height="12.2" fill="#009dff"/><rect x="421.6" y="221.5" width="9" height="12.2" fill="#00aaff"/><rect x="430.6" y="221.5" width="9" height="12.2" fill="#00c0ff"/><rect x="439.5" y="221.5" width="9" height="12.2" fill="#0cd5f2"/><rect x="448.5" y="221.5" width="9" height="12.2" fill="#12e4ec"/><rect x="457.5" y="221.5" width="9" height="12.2" fill="#00e2ff"/><rect x="466.4" y="221.5" width="9" height="12.2" fill="#00ceff"/><rect x="475.4" y="221.5" width="9" height="12.2" fill="#00b8ff"/><rect x="484.4" y="221.5" width="9" height="12.2" fill="#00a3ff"/><rect x="493.4" y="221.5" width="9" height="12.2" fill="#0099ff"/><rect x="502.3" y="221.5" width="9" height="12.2" fill="#0085ff"/><rect x="511.3" y="221.5" width="9" height="12.2" fill="#0083ff"/><rect x="520.3" y="221.5" width="9" height="12.2" fill="#0083ff"/><rect x="529.2" y="221.5" width="9" height="12.2" fill="#0083ff"/><rect x="538.2" y="221.5" width="9" height="12.2" fill="#008fff"/><rect x="547.2" y="221.5" width="9" height="12.2" fill="#0087ff"/><rect x="556.1" y="221.5" width="9" height="12.2" fill="#0095ff"/><rect x="0.0" y="233.1" width="9" height="12.2" fill="#0089ff"/><rect x="9.0" y="233.1" width="9" height="12.2" fill="#0089ff"/><rect x="17.9" y="233.1" width="9" height="12.2" fill="#0081ff"/><rect x="26.9" y="233.1" width="9" height="12.2" fill="#0085ff"/><rect x="35.9" y="233.1" width="9" height="12.2" fill="#0093ff"/><rect x="44.9" y="233.1" width="9" height="12.2" fill="#0083ff"/><rect x="53.8" y="233.1" width="9" height="12.2" fill="#0087ff"/><rect x="62.8" y="233.1" width="9" height="12.2" fill="#0087ff"/><rect x="71.8" y="233.1" width="9" height="12.2" fill="#0093ff"/><rect x="80.7" y="233.1" width="9" height="12.2" fill="#0089ff"/><rect x="89.7" y="233.1" width="9" height="12.2" fill="#0081ff"/><rect x="98.7" y="233.1" width="9" height="12.2" fill="#0077ff"/><rect x="107.6" y="233.1" width="9" height="12.2" fill="#0083ff"/><rect x="116.6" y="233.1" width="9" height="12.2" fill="#0083ff"/><rect x="125.6" y="233.1" width="9" height="12.2" fill="#0085ff"/><rect x="134.6" y="233.1" width="9" height="12.2" fill="#0093ff"/><rect x="143.5" y="233.1" width="9" height="12.2" fill="#0093ff"/><rect x="152.5" y="233.1" width="9" height="12.2" fill="#007dff"/><rect x="161.5" y="233.1" width="9" height="12.2" fill="#0083ff"/><rect x="170.4" y="233.1" width="9" height="12.2" fill="#0085ff"/><rect x="179.4" y="233.1" width="9" height="12.2" fill="#008dff"/><rect x="188.4" y="233.1" width="9" height="12.2" fill="#0091ff"/><rect x="197.3" y="233.1" width="9" height="12.2" fill="#0085ff"/><rect x="206.3" y="233.1" width="9" height="12.2" fill="#008bff"/><rect x="215.3" y="233.1" width="9" height="12.2" fill="#008dff"/><rect x="224.3" y="233.1" width="9" height="12.2" fill="#00a5ff"/><rect x="233.2" y="233.1" width="9" height="12.2" fill="#14c9ea"/><rect x="242.2" y="233.1" width="9" height="12.2" fill="#14f2ea"/><rect x="251.2" y="233.1" width="9" height="12.2" fill="#27ebd7"/><rect x="260.1" y="233.1" width="9" height="12.2" fill="#14c9ea"/><rect x="269.1" y="233.1" width="9" height="12.2" fill="#009dff"/><rect x="278.1" y="233.1" width="9" height="12.2" fill="#69ff95"/><rect x="287.0" y="233.1" width="9" height="12.2" fill="#b8ff46"/><rect x="296.0" y="233.1" width="9" height="12.2" fill="#71ff8d"/><rect x="305.0" y="233.1" width="9" height="12.2" fill="#007bff"/><rect x="314.0" y="233.1" width="9" height="12.2" fill="#007bff"/><rect x="322.9" y="233.1" width="9" height="12.2" fill="#0089ff"/><rect x="331.9" y="233.1" width="9" height="12.2" fill="#007dff"/><rect x="340.9" y="233.1" width="9" height="12.2" fill="#008dff"/><rect x="349.8" y="233.1" width="9" height="12.2" fill="#008fff"/><rect x="358.8" y="233.1" width="9" height="12.2" fill="#0083ff"/><rect x="367.8" y="233.1" width="9" height="12.2" fill="#0081ff"/><rect x="376.7" y="233.1" width="9" height="12.2" fill="#008bff"/><rect x="385.7" y="233.1" width="9" height="12.2" fill="#0081ff"/><rect x="394.7" y="233.1" width="9" height="12.2" fill="#0081ff"/><rect x="403.7" y="233.1" width="9" height="12.2" fill="#008bff"/><rect x="412.6" y="233.1" width="9" height="12.2" fill="#009bff"/><rect x="421.6" y="233.1" width="9" height="12.2" fill="#009dff"/><rect x="430.6" y="233.1" width="9" height="12.2" fill="#00c4ff"/><rect x="439.5" y="233.1" width="9" height="12.2" fill="#0ad9f4"/><rect x="448.5" y="233.1" width="9" height="12.2" fill="#0dd5f1"/><rect x="457.5" y="233.1" width="9" height="12.2" fill="#0addf4"/><rect x="466.4" y="233.1" width="9" height="12.2" fill="#00b8ff"/><rect x="475.4" y="233.1" width="9" height="12.2" fill="#009bff"/><rect x="484.4" y="233.1" width="9" height="12.2" fill="#008bff"/><rect x="493.4" y="233.1" width="9" height="12.2" fill="#0091ff"/><rect x="502.3" y="233.1" width="9" height="12.2" fill="#0085ff"/><rect x="511.3" y="233.1" width="9" height="12.2" fill="#0091ff"/><rect x="520.3" y="233.1" width="9" height="12.2" fill="#0085ff"/><rect x="529.2" y="233.1" width="9" height="12.2" fill="#0081ff"/><rect x="538.2" y="233.1" width="9" height="12.2" fill="#0087ff"/><rect x="547.2" y="233.1" width="9" height="12.2" fill="#0087ff"/><rect x="556.1" y="233.1" width="9" height="12.2" fill="#0087ff"/><rect x="0.0" y="244.8" width="9" height="12.2" fill="#0077ff"/><rect x="9.0" y="244.8" width="9" height="12.2" fill="#007dff"/><rect x="17.9" y="244.8" width="9" height="12.2" fill="#0089ff"/><rect x="26.9" y="244.8" width="9" height="12.2" fill="#0089ff"/><rect x="35.9" y="244.8" width="9" height="12.2" fill="#008dff"/><rect x="44.9" y="244.8" width="9" height="12.2" fill="#0087ff"/><rect x="53.8" y="244.8" width="9" height="12.2" fill="#0083ff"/><rect x="62.8" y="244.8" width="9" height="12.2" fill="#008fff"/><rect x="71.8" y="244.8" width="9" height="12.2" fill="#0089ff"/><rect x="80.7" y="244.8" width="9" height="12.2" fill="#0091ff"/><rect x="89.7" y="244.8" width="9" height="12.2" fill="#0085ff"/><rect x="98.7" y="244.8" width="9" height="12.2" fill="#0091ff"/><rect x="107.6" y="244.8" width="9" height="12.2" fill="#0083ff"/><rect x="116.6" y="244.8" width="9" height="12.2" fill="#0087ff"/><rect x="125.6" y="244.8" width="9" height="12.2" fill="#0081ff"/><rect x="134.6" y="244.8" width="9" height="12.2" fill="#00a5ff"/><rect x="143.5" y="244.8" width="9" height="12.2" fill="#0095ff"/><rect x="152.5" y="244.8" width="9" height="12.2" fill="#0079ff"/><rect x="161.5" y="244.8" width="9" height="12.2" fill="#0081ff"/><rect x="170.4" y="244.8" width="9" height="12.2" fill="#0081ff"/><rect x="179.4" y="244.8" width="9" height="12.2" fill="#0081ff"/><rect x="188.4" y="244.8" width="9" height="12.2" fill="#0089ff"/><rect x="197.3" y="244.8" width="9" height="12.2" fill="#0095ff"/><rect x="206.3" y="244.8" width="9" height="12.2" fill="#009bff"/><rect x="215.3" y="244.8" width="9" height="12.2" fill="#19a3e5"/><rect x="224.3" y="244.8" width="9" height="12.2" fill="#14bfea"/><rect x="233.2" y="244.8" width="9" height="12.2" fill="#38d9c6"/><rect x="242.2" y="244.8" width="9" height="12.2" fill="#1bf0e3"/><rect x="251.2" y="244.8" width="9" height="12.2" fill="#00d8ff"/><rect x="260.1" y="244.8" width="9" height="12.2" fill="#00d4ff"/><rect x="269.1" y="244.8" width="9" height="12.2" fill="#00a3ff"/><rect x="278.1" y="244.8" width="9" height="12.2" fill="#71ff8d"/><rect x="287.0" y="244.8" width="9" height="12.2" fill="#baff44"/><rect x="296.0" y="244.8" width="9" height="12.2" fill="#69ff95"/><rect x="305.0" y="244.8" width="9" height="12.2" fill="#0087ff"/><rect x="314.0" y="244.8" width="9" height="12.2" fill="#0290fc"/><rect x="322.9" y="244.8" width="9" height="12.2" fill="#0097fe"/><rect x="331.9" y="244.8" width="9" height="12.2" fill="#0299fc"/><rect x="340.9" y="244.8" width="9" height="12.2" fill="#0081ff"/><rect x="349.8" y="244.8" width="9" height="12.2" fill="#0087ff"/><rect x="358.8" y="244.8" width="9" height="12.2" fill="#008bff"/><rect x="367.8" y="244.8" width="9" height="12.2" fill="#0083ff"/><rect x="376.7" y="244.8" width="9" height="12.2" fill="#0085ff"/><rect x="385.7" y="244.8" width="9" height="12.2" fill="#007fff"/><rect x="394.7" y="244.8" width="9" height="12.2" fill="#0087ff"/><rect x="403.7" y="244.8" width="9" height="12.2" fill="#0089ff"/><rect x="412.6" y="244.8" width="9" height="12.2" fill="#008fff"/><rect x="421.6" y="244.8" width="9" height="12.2" fill="#00a7ff"/><rect x="430.6" y="244.8" width="9" height="12.2" fill="#00caff"/><rect x="439.5" y="244.8" width="9" height="12.2" fill="#00d8ff"/><rect x="448.5" y="244.8" width="9" height="12.2" fill="#00dffe"/><rect x="457.5" y="244.8" width="9" height="12.2" fill="#00dcff"/><rect x="466.4" y="244.8" width="9" height="12.2" fill="#00c8ff"/><rect x="475.4" y="244.8" width="9" height="12.2" fill="#009dff"/><rect x="484.4" y="244.8" width="9" height="12.2" fill="#0093ff"/><rect x="493.4" y="244.8" width="9" height="12.2" fill="#00a3ff"/><rect x="502.3" y="244.8" width="9" height="12.2" fill="#0087ff"/><rect x="511.3" y="244.8" width="9" height="12.2" fill="#007bff"/><rect x="520.3" y="244.8" width="9" height="12.2" fill="#0087ff"/><rect x="529.2" y="244.8" width="9" height="12.2" fill="#0083ff"/><rect x="538.2" y="244.8" width="9" height="12.2" fill="#008fff"/><rect x="547.2" y="244.8" width="9" height="12.2" fill="#0087ff"/><rect x="556.1" y="244.8" width="9" height="12.2" fill="#007fff"/><rect x="0.0" y="256.4" width="9" height="12.2" fill="#008bff"/><rect x="9.0" y="256.4" width="9" height="12.2" fill="#0083ff"/><rect x="17.9" y="256.4" width="9" height="12.2" fill="#0690f8"/><rect x="26.9" y="256.4" width="9" height="12.2" fill="#0495fa"/><rect x="35.9" y="256.4" width="9" height="12.2" fill="#0895f6"/><rect x="44.9" y="256.4" width="9" height="12.2" fill="#008dff"/><rect x="53.8" y="256.4" width="9" height="12.2" fill="#0091ff"/><rect x="62.8" y="256.4" width="9" height="12.2" fill="#0097ff"/><rect x="71.8" y="256.4" width="9" height="12.2" fill="#008bff"/><rect x="80.7" y="256.4" width="9" height="12.2" fill="#008fff"/><rect x="89.7" y="256.4" width="9" height="12.2" fill="#0093ff"/><rect x="98.7" y="256.4" width="9" height="12.2" fill="#007fff"/><rect x="107.6" y="256.4" width="9" height="12.2" fill="#008fff"/><rect x="116.6" y="256.4" width="9" height="12.2" fill="#0081ff"/><rect x="125.6" y="256.4" width="9" height="12.2" fill="#0085ff"/><rect x="134.6" y="256.4" width="9" height="12.2" fill="#00a7ff"/><rect x="143.5" y="256.4" width="9" height="12.2" fill="#0095ff"/><rect x="152.5" y="256.4" width="9" height="12.2" fill="#0087ff"/><rect x="161.5" y="256.4" width="9" height="12.2" fill="#0083ff"/><rect x="170.4" y="256.4" width="9" height="12.2" fill="#008dff"/><rect x="179.4" y="256.4" width="9" height="12.2" fill="#008fff"/><rect x="188.4" y="256.4" width="9" height="12.2" fill="#0087ff"/><rect x="197.3" y="256.4" width="9" height="12.2" fill="#0081ff"/><rect x="206.3" y="256.4" width="9" height="12.2" fill="#008fff"/><rect x="215.3" y="256.4" width="9" height="12.2" fill="#009bff"/><rect x="224.3" y="256.4" width="9" height="12.2" fill="#00a7ff"/><rect x="233.2" y="256.4" width="9" height="12.2" fill="#00c6ff"/><rect x="242.2" y="256.4" width="9" height="12.2" fill="#19ebe5"/><rect x="251.2" y="256.4" width="9" height="12.2" fill="#17eee7"/><rect x="260.1" y="256.4" width="9" height="12.2" fill="#00ceff"/><rect x="269.1" y="256.4" width="9" height="12.2" fill="#0097ff"/><rect x="278.1" y="256.4" width="9" height="12.2" fill="#77ff87"/><rect x="287.0" y="256.4" width="9" height="12.2" fill="#c2ff3c"/><rect x="296.0" y="256.4" width="9" height="12.2" fill="#77ff87"/><rect x="305.0" y="256.4" width="9" height="12.2" fill="#008bff"/><rect x="314.0" y="256.4" width="9" height="12.2" fill="#0083ff"/><rect x="322.9" y="256.4" width="9" height="12.2" fill="#008dff"/><rect x="331.9" y="256.4" width="9" height="12.2" fill="#007dff"/><rect x="340.9" y="256.4" width="9" height="12.2" fill="#008fff"/><rect x="349.8" y="256.4" width="9" height="12.2" fill="#008dff"/><rect x="358.8" y="256.4" width="9" height="12.2" fill="#007dff"/><rect x="367.8" y="256.4" width="9" height="12.2" fill="#0085ff"/><rect x="376.7" y="256.4" width="9" height="12.2" fill="#008dff"/><rect x="385.7" y="256.4" width="9" height="12.2" fill="#0077ff"/><rect x="394.7" y="256.4" width="9" height="12.2" fill="#008bff"/><rect x="403.7" y="256.4" width="9" height="12.2" fill="#0097ff"/><rect x="412.6" y="256.4" width="9" height="12.2" fill="#0091ff"/><rect x="421.6" y="256.4" width="9" height="12.2" fill="#0cbdf2"/><rect x="430.6" y="256.4" width="9" height="12.2" fill="#0ccff2"/><rect x="439.5" y="256.4" width="9" height="12.2" fill="#10e1ee"/><rect x="448.5" y="256.4" width="9" height="12.2" fill="#01e7fd"/><rect x="457.5" y="256.4" width="9" height="12.2" fill="#00e4ff"/><rect x="466.4" y="256.4" width="9" height="12.2" fill="#00d2ff"/><rect x="475.4" y="256.4" width="9" height="12.2" fill="#00baff"/><rect x="484.4" y="256.4" width="9" height="12.2" fill="#009dff"/><rect x="493.4" y="256.4" width="9" height="12.2" fill="#0091ff"/><rect x="502.3" y="256.4" width="9" height="12.2" fill="#008bff"/><rect x="511.3" y="256.4" width="9" height="12.2" fill="#0091ff"/><rect x="520.3" y="256.4" width="9" height="12.2" fill="#0083ff"/><rect x="529.2" y="256.4" width="9" height="12.2" fill="#0091ff"/><rect x="538.2" y="256.4" width="9" height="12.2" fill="#0085ff"/><rect x="547.2" y="256.4" width="9" height="12.2" fill="#0085ff"/><rect x="556.1" y="256.4" width="9" height="12.2" fill="#0079ff"/><rect x="0.0" y="268.1" width="9" height="12.2" fill="#0085ff"/><rect x="9.0" y="268.1" width="9" height="12.2" fill="#0087ff"/><rect x="17.9" y="268.1" width="9" height="12.2" fill="#007dff"/><rect x="26.9" y="268.1" width="9" height="12.2" fill="#008bff"/><rect x="35.9" y="268.1" width="9" height="12.2" fill="#0079ff"/><rect x="44.9" y="268.1" width="9" height="12.2" fill="#006bff"/><rect x="53.8" y="268.1" width="9" height="12.2" fill="#0490fa"/><rect x="62.8" y="268.1" width="9" height="12.2" fill="#0495fa"/><rect x="71.8" y="268.1" width="9" height="12.2" fill="#0490fa"/><rect x="80.7" y="268.1" width="9" height="12.2" fill="#0083ff"/><rect x="89.7" y="268.1" width="9" height="12.2" fill="#0083ff"/><rect x="98.7" y="268.1" width="9" height="12.2" fill="#007fff"/><rect x="107.6" y="268.1" width="9" height="12.2" fill="#0085ff"/><rect x="116.6" y="268.1" width="9" height="12.2" fill="#0081ff"/><rect x="125.6" y="268.1" width="9" height="12.2" fill="#0087ff"/><rect x="134.6" y="268.1" width="9" height="12.2" fill="#00a1ff"/><rect x="143.5" y="268.1" width="9" height="12.2" fill="#009bff"/><rect x="152.5" y="268.1" width="9" height="12.2" fill="#008dff"/><rect x="161.5" y="268.1" width="9" height="12.2" fill="#008dff"/><rect x="170.4" y="268.1" width="9" height="12.2" fill="#008bff"/><rect x="179.4" y="268.1" width="9" height="12.2" fill="#0089ff"/><rect x="188.4" y="268.1" width="9" height="12.2" fill="#0089ff"/><rect x="197.3" y="268.1" width="9" height="12.2" fill="#0085ff"/><rect x="206.3" y="268.1" width="9" height="12.2" fill="#0091ff"/><rect x="215.3" y="268.1" width="9" height="12.2" fill="#008fff"/><rect x="224.3" y="268.1" width="9" height="12.2" fill="#2ec0d0"/><rect x="233.2" y="268.1" width="9" height="12.2" fill="#30d9ce"/><rect x="242.2" y="268.1" width="9" height="12.2" fill="#2aeed4"/><rect x="251.2" y="268.1" width="9" height="12.2" fill="#14eaea"/><rect x="260.1" y="268.1" width="9" height="12.2" fill="#00d0ff"/><rect x="269.1" y="268.1" width="9" height="12.2" fill="#0093ff"/><rect x="278.1" y="268.1" width="9" height="12.2" fill="#7bff83"/><rect x="287.0" y="268.1" width="9" height="12.2" fill="#c8ff36"/><rect x="296.0" y="268.1" width="9" height="12.2" fill="#7bff83"/><rect x="305.0" y="268.1" width="9" height="12.2" fill="#0081ff"/><rect x="314.0" y="268.1" width="9" height="12.2" fill="#0083ff"/><rect x="322.9" y="268.1" width="9" height="12.2" fill="#0085ff"/><rect x="331.9" y="268.1" width="9" height="12.2" fill="#007dff"/><rect x="340.9" y="268.1" width="9" height="12.2" fill="#007fff"/><rect x="349.8" y="268.1" width="9" height="12.2" fill="#008bff"/><rect x="358.8" y="268.1" width="9" height="12.2" fill="#0085ff"/><rect x="367.8" y="268.1" width="9" height="12.2" fill="#007bff"/><rect x="376.7" y="268.1" width="9" height="12.2" fill="#0071ff"/><rect x="385.7" y="268.1" width="9" height="12.2" fill="#0085ff"/><rect x="394.7" y="268.1" width="9" height="12.2" fill="#008bff"/><rect x="403.7" y="268.1" width="9" height="12.2" fill="#0091ff"/><rect x="412.6" y="268.1" width="9" height="12.2" fill="#009bff"/><rect x="421.6" y="268.1" width="9" height="12.2" fill="#00a3ff"/><rect x="430.6" y="268.1" width="9" height="12.2" fill="#00bcff"/><rect x="439.5" y="268.1" width="9" height="12.2" fill="#00c0ff"/><rect x="448.5" y="268.1" width="9" height="12.2" fill="#00d2ff"/><rect x="457.5" y="268.1" width="9" height="12.2" fill="#00ceff"/><rect x="466.4" y="268.1" width="9" height="12.2" fill="#00baff"/><rect x="475.4" y="268.1" width="9" height="12.2" fill="#00aeff"/><rect x="484.4" y="268.1" width="9" height="12.2" fill="#0095ff"/><rect x="493.4" y="268.1" width="9" height="12.2" fill="#0095ff"/><rect x="502.3" y="268.1" width="9" height="12.2" fill="#0091ff"/><rect x="511.3" y="268.1" width="9" height="12.2" fill="#0087ff"/><rect x="520.3" y="268.1" width="9" height="12.2" fill="#007dff"/><rect x="529.2" y="268.1" width="9" height="12.2" fill="#0089ff"/><rect x="538.2" y="268.1" width="9" height="12.2" fill="#0087ff"/><rect x="547.2" y="268.1" width="9" height="12.2" fill="#0097ff"/><rect x="556.1" y="268.1" width="9" height="12.2" fill="#007dff"/><rect x="0.0" y="279.8" width="9" height="12.2" fill="#0099ff"/><rect x="9.0" y="279.8" width="9" height="12.2" fill="#0099ff"/><rect x="17.9" y="279.8" width="9" height="12.2" fill="#008dff"/><rect x="26.9" y="279.8" width="9" height="12.2" fill="#009dff"/><rect x="35.9" y="279.8" width="9" height="12.2" fill="#009dff"/><rect x="44.9" y="279.8" width="9" height="12.2" fill="#00a3ff"/><rect x="53.8" y="279.8" width="9" height="12.2" fill="#0099ff"/><rect x="62.8" y="279.8" width="9" height="12.2" fill="#009bff"/><rect x="71.8" y="279.8" width="9" height="12.2" fill="#00a1ff"/><rect x="80.7" y="279.8" width="9" height="12.2" fill="#0099ff"/><rect x="89.7" y="279.8" width="9" height="12.2" fill="#009bff"/><rect x="98.7" y="279.8" width="9" height="12.2" fill="#0097ff"/><rect x="107.6" y="279.8" width="9" height="12.2" fill="#0093ff"/><rect x="116.6" y="279.8" width="9" height="12.2" fill="#0095ff"/><rect x="125.6" y="279.8" width="9" height="12.2" fill="#009bff"/><rect x="134.6" y="279.8" width="9" height="12.2" fill="#00b0ff"/><rect x="143.5" y="279.8" width="9" height="12.2" fill="#00a1ff"/><rect x="152.5" y="279.8" width="9" height="12.2" fill="#00a1ff"/><rect x="161.5" y="279.8" width="9" height="12.2" fill="#0091ff"/><rect x="170.4" y="279.8" width="9" height="12.2" fill="#0099ff"/><rect x="179.4" y="279.8" width="9" height="12.2" fill="#009dff"/><rect x="188.4" y="279.8" width="9" height="12.2" fill="#009bff"/><rect x="197.3" y="279.8" width="9" height="12.2" fill="#009dff"/><rect x="206.3" y="279.8" width="9" height="12.2" fill="#0099ff"/><rect x="215.3" y="279.8" width="9" height="12.2" fill="#00acff"/><rect x="224.3" y="279.8" width="9" height="12.2" fill="#00baff"/><rect x="233.2" y="279.8" width="9" height="12.2" fill="#29e3d5"/><rect x="242.2" y="279.8" width="9" height="12.2" fill="#43f5bb"/><rect x="251.2" y="279.8" width="9" height="12.2" fill="#27edd7"/><rect x="260.1" y="279.8" width="9" height="12.2" fill="#00d8ff"/><rect x="269.1" y="279.8" width="9" height="12.2" fill="#00a5ff"/><rect x="278.1" y="279.8" width="9" height="12.2" fill="#7fff7f"/><rect x="287.0" y="279.8" width="9" height="12.2" fill="#caff34"/><rect x="296.0" y="279.8" width="9" height="12.2" fill="#7dff81"/><rect x="305.0" y="279.8" width="9" height="12.2" fill="#008bff"/><rect x="314.0" y="279.8" width="9" height="12.2" fill="#0089ff"/><rect x="322.9" y="279.8" width="9" height="12.2" fill="#008bff"/><rect x="331.9" y="279.8" width="9" height="12.2" fill="#0081ff"/><rect x="340.9" y="279.8" width="9" height="12.2" fill="#0087ff"/><rect x="349.8" y="279.8" width="9" height="12.2" fill="#0091ff"/><rect x="358.8" y="279.8" width="9" height="12.2" fill="#0093ff"/><rect x="367.8" y="279.8" width="9" height="12.2" fill="#0089ff"/><rect x="376.7" y="279.8" width="9" height="12.2" fill="#008dff"/><rect x="385.7" y="279.8" width="9" height="12.2" fill="#008dff"/><rect x="394.7" y="279.8" width="9" height="12.2" fill="#0097ff"/><rect x="403.7" y="279.8" width="9" height="12.2" fill="#0097ff"/><rect x="412.6" y="279.8" width="9" height="12.2" fill="#0095ff"/><rect x="421.6" y="279.8" width="9" height="12.2" fill="#08b9f6"/><rect x="430.6" y="279.8" width="9" height="12.2" fill="#06c9f8"/><rect x="439.5" y="279.8" width="9" height="12.2" fill="#00ccff"/><rect x="448.5" y="279.8" width="9" height="12.2" fill="#00e5fe"/><rect x="457.5" y="279.8" width="9" height="12.2" fill="#03d7fb"/><rect x="466.4" y="279.8" width="9" height="12.2" fill="#00c0ff"/><rect x="475.4" y="279.8" width="9" height="12.2" fill="#00b8ff"/><rect x="484.4" y="279.8" width="9" height="12.2" fill="#00acff"/><rect x="493.4" y="279.8" width="9" height="12.2" fill="#00a5ff"/><rect x="502.3" y="279.8" width="9" height="12.2" fill="#0093ff"/><rect x="511.3" y="279.8" width="9" height="12.2" fill="#0093ff"/><rect x="520.3" y="279.8" width="9" height="12.2" fill="#0093ff"/><rect x="529.2" y="279.8" width="9" height="12.2" fill="#0097ff"/><rect x="538.2" y="279.8" width="9" height="12.2" fill="#0097ff"/><rect x="547.2" y="279.8" width="9" height="12.2" fill="#008bff"/><rect x="556.1" y="279.8" width="9" height="12.2" fill="#008bff"/><rect x="0.0" y="291.4" width="9" height="12.2" fill="#00b0ff"/><rect x="9.0" y="291.4" width="9" height="12.2" fill="#00aaff"/><rect x="17.9" y="291.4" width="9" height="12.2" fill="#0099ff"/><rect x="26.9" y="291.4" width="9" height="12.2" fill="#0095ff"/><rect x="35.9" y="291.4" width="9" height="12.2" fill="#00acff"/><rect x="44.9" y="291.4" width="9" height="12.2" fill="#00a7ff"/><rect x="53.8" y="291.4" width="9" height="12.2" fill="#00a1ff"/><rect x="62.8" y="291.4" width="9" height="12.2" fill="#00a3ff"/><rect x="71.8" y="291.4" width="9" height="12.2" fill="#00a5ff"/><rect x="80.7" y="291.4" width="9" height="12.2" fill="#0099ff"/><rect x="89.7" y="291.4" width="9" height="12.2" fill="#00a7ff"/><rect x="98.7" y="291.4" width="9" height="12.2" fill="#00a3ff"/><rect x="107.6" y="291.4" width="9" height="12.2" fill="#00acff"/><rect x="116.6" y="291.4" width="9" height="12.2" fill="#00a9ff"/><rect x="125.6" y="291.4" width="9" height="12.2" fill="#00a5ff"/><rect x="134.6" y="291.4" width="9" height="12.2" fill="#00baff"/><rect x="143.5" y="291.4" width="9" height="12.2" fill="#00a1ff"/><rect x="152.5" y="291.4" width="9" height="12.2" fill="#0093ff"/><rect x="161.5" y="291.4" width="9" height="12.2" fill="#00a5ff"/><rect x="170.4" y="291.4" width="9" height="12.2" fill="#009dff"/><rect x="179.4" y="291.4" width="9" height="12.2" fill="#00acff"/><rect x="188.4" y="291.4" width="9" height="12.2" fill="#00a7ff"/><rect x="197.3" y="291.4" width="9" height="12.2" fill="#00a5ff"/><rect x="206.3" y="291.4" width="9" height="12.2" fill="#00a9ff"/><rect x="215.3" y="291.4" width="9" height="12.2" fill="#00a7ff"/><rect x="224.3" y="291.4" width="9" height="12.2" fill="#00c8ff"/><rect x="233.2" y="291.4" width="9" height="12.2" fill="#30d9ce"/><rect x="242.2" y="291.4" width="9" height="12.2" fill="#32fbcc"/><rect x="251.2" y="291.4" width="9" height="12.2" fill="#43f1bb"/><rect x="260.1" y="291.4" width="9" height="12.2" fill="#00eafe"/><rect x="269.1" y="291.4" width="9" height="12.2" fill="#00b6ff"/><rect x="278.1" y="291.4" width="9" height="12.2" fill="#81ff7d"/><rect x="287.0" y="291.4" width="9" height="12.2" fill="#d0ff2e"/><rect x="296.0" y="291.4" width="9" height="12.2" fill="#81ff7d"/><rect x="305.0" y="291.4" width="9" height="12.2" fill="#0083ff"/><rect x="314.0" y="291.4" width="9" height="12.2" fill="#008fff"/><rect x="322.9" y="291.4" width="9" height="12.2" fill="#0093ff"/><rect x="331.9" y="291.4" width="9" height="12.2" fill="#0091ff"/><rect x="340.9" y="291.4" width="9" height="12.2" fill="#00a5ff"/><rect x="349.8" y="291.4" width="9" height="12.2" fill="#0097ff"/><rect x="358.8" y="291.4" width="9" height="12.2" fill="#009bff"/><rect x="367.8" y="291.4" width="9" height="12.2" fill="#0099ff"/><rect x="376.7" y="291.4" width="9" height="12.2" fill="#0093ff"/><rect x="385.7" y="291.4" width="9" height="12.2" fill="#0091ff"/><rect x="394.7" y="291.4" width="9" height="12.2" fill="#0091ff"/><rect x="403.7" y="291.4" width="9" height="12.2" fill="#0091ff"/><rect x="412.6" y="291.4" width="9" height="12.2" fill="#0093ff"/><rect x="421.6" y="291.4" width="9" height="12.2" fill="#00b2ff"/><rect x="430.6" y="291.4" width="9" height="12.2" fill="#0cc9f2"/><rect x="439.5" y="291.4" width="9" height="12.2" fill="#0fe1ef"/><rect x="448.5" y="291.4" width="9" height="12.2" fill="#0fdbef"/><rect x="457.5" y="291.4" width="9" height="12.2" fill="#00e1fe"/><rect x="466.4" y="291.4" width="9" height="12.2" fill="#00d2ff"/><rect x="475.4" y="291.4" width="9" height="12.2" fill="#00baff"/><rect x="484.4" y="291.4" width="9" height="12.2" fill="#00b8ff"/><rect x="493.4" y="291.4" width="9" height="12.2" fill="#00baff"/><rect x="502.3" y="291.4" width="9" height="12.2" fill="#00acff"/><rect x="511.3" y="291.4" width="9" height="12.2" fill="#00a7ff"/><rect x="520.3" y="291.4" width="9" height="12.2" fill="#0097ff"/><rect x="529.2" y="291.4" width="9" height="12.2" fill="#009bff"/><rect x="538.2" y="291.4" width="9" height="12.2" fill="#00a1ff"/><rect x="547.2" y="291.4" width="9" height="12.2" fill="#009fff"/><rect x="556.1" y="291.4" width="9" height="12.2" fill="#00a5ff"/><rect x="0.0" y="303.1" width="9" height="12.2" fill="#00a1ff"/><rect x="9.0" y="303.1" width="9" height="12.2" fill="#00a7ff"/><rect x="17.9" y="303.1" width="9" height="12.2" fill="#00a7ff"/><rect x="26.9" y="303.1" width="9" height="12.2" fill="#00b8ff"/><rect x="35.9" y="303.1" width="9" height="12.2" fill="#00b0ff"/><rect x="44.9" y="303.1" width="9" height="12.2" fill="#00a5ff"/><rect x="53.8" y="303.1" width="9" height="12.2" fill="#00a5ff"/><rect x="62.8" y="303.1" width="9" height="12.2" fill="#009fff"/><rect x="71.8" y="303.1" width="9" height="12.2" fill="#00aeff"/><rect x="80.7" y="303.1" width="9" height="12.2" fill="#00acff"/><rect x="89.7" y="303.1" width="9" height="12.2" fill="#00b4ff"/><rect x="98.7" y="303.1" width="9" height="12.2" fill="#00acff"/><rect x="107.6" y="303.1" width="9" height="12.2" fill="#00aeff"/><rect x="116.6" y="303.1" width="9" height="12.2" fill="#00a7ff"/><rect x="125.6" y="303.1" width="9" height="12.2" fill="#00aeff"/><rect x="134.6" y="303.1" width="9" height="12.2" fill="#00beff"/><rect x="143.5" y="303.1" width="9" height="12.2" fill="#00c0ff"/><rect x="152.5" y="303.1" width="9" height="12.2" fill="#00bcff"/><rect x="161.5" y="303.1" width="9" height="12.2" fill="#00b6ff"/><rect x="170.4" y="303.1" width="9" height="12.2" fill="#00b6ff"/><rect x="179.4" y="303.1" width="9" height="12.2" fill="#00b4ff"/><rect x="188.4" y="303.1" width="9" height="12.2" fill="#00b6ff"/><rect x="197.3" y="303.1" width="9" height="12.2" fill="#00c2ff"/><rect x="206.3" y="303.1" width="9" height="12.2" fill="#00c2ff"/><rect x="215.3" y="303.1" width="9" height="12.2" fill="#00c2ff"/><rect x="224.3" y="303.1" width="9" height="12.2" fill="#00d6ff"/><rect x="233.2" y="303.1" width="9" height="12.2" fill="#30e3ce"/><rect x="242.2" y="303.1" width="9" height="12.2" fill="#48f9b6"/><rect x="251.2" y="303.1" width="9" height="12.2" fill="#1ef6e0"/><rect x="260.1" y="303.1" width="9" height="12.2" fill="#00deff"/><rect x="269.1" y="303.1" width="9" height="12.2" fill="#00b8ff"/><rect x="278.1" y="303.1" width="9" height="12.2" fill="#85ff79"/><rect x="287.0" y="303.1" width="9" height="12.2" fill="#d2ff2c"/><rect x="296.0" y="303.1" width="9" height="12.2" fill="#85ff79"/><rect x="305.0" y="303.1" width="9" height="12.2" fill="#0087ff"/><rect x="314.0" y="303.1" width="9" height="12.2" fill="#008fff"/><rect x="322.9" y="303.1" width="9" height="12.2" fill="#008dff"/><rect x="331.9" y="303.1" width="9" height="12.2" fill="#0093ff"/><rect x="340.9" y="303.1" width="9" height="12.2" fill="#0091ff"/><rect x="349.8" y="303.1" width="9" height="12.2" fill="#008fff"/><rect x="358.8" y="303.1" width="9" height="12.2" fill="#0093ff"/><rect x="367.8" y="303.1" width="9" height="12.2" fill="#008bff"/><rect x="376.7" y="303.1" width="9" height="12.2" fill="#0085ff"/><rect x="385.7" y="303.1" width="9" height="12.2" fill="#008fff"/><rect x="394.7" y="303.1" width="9" height="12.2" fill="#0095ff"/><rect x="403.7" y="303.1" width="9" height="12.2" fill="#0097ff"/><rect x="412.6" y="303.1" width="9" height="12.2" fill="#00a1ff"/><rect x="421.6" y="303.1" width="9" height="12.2" fill="#00acff"/><rect x="430.6" y="303.1" width="9" height="12.2" fill="#00b8ff"/><rect x="439.5" y="303.1" width="9" height="12.2" fill="#00cffe"/><rect x="448.5" y="303.1" width="9" height="12.2" fill="#00e3fe"/><rect x="457.5" y="303.1" width="9" height="12.2" fill="#00e2ff"/><rect x="466.4" y="303.1" width="9" height="12.2" fill="#00c6ff"/><rect x="475.4" y="303.1" width="9" height="12.2" fill="#00b4ff"/><rect x="484.4" y="303.1" width="9" height="12.2" fill="#00aeff"/><rect x="493.4" y="303.1" width="9" height="12.2" fill="#00a9ff"/><rect x="502.3" y="303.1" width="9" height="12.2" fill="#009bff"/><rect x="511.3" y="303.1" width="9" height="12.2" fill="#0fb0ef"/><rect x="520.3" y="303.1" width="9" height="12.2" fill="#13aceb"/><rect x="529.2" y="303.1" width="9" height="12.2" fill="#11b2ed"/><rect x="538.2" y="303.1" width="9" height="12.2" fill="#0aa7f4"/><rect x="547.2" y="303.1" width="9" height="12.2" fill="#0097ff"/><rect x="556.1" y="303.1" width="9" height="12.2" fill="#009dff"/><rect x="0.0" y="314.7" width="9" height="12.2" fill="#00c6ff"/><rect x="9.0" y="314.7" width="9" height="12.2" fill="#00beff"/><rect x="17.9" y="314.7" width="9" height="12.2" fill="#00bcff"/><rect x="26.9" y="314.7" width="9" height="12.2" fill="#00b6ff"/><rect x="35.9" y="314.7" width="9" height="12.2" fill="#00c4ff"/><rect x="44.9" y="314.7" width="9" height="12.2" fill="#00c2ff"/><rect x="53.8" y="314.7" width="9" height="12.2" fill="#00b6ff"/><rect x="62.8" y="314.7" width="9" height="12.2" fill="#00beff"/><rect x="71.8" y="314.7" width="9" height="12.2" fill="#00baff"/><rect x="80.7" y="314.7" width="9" height="12.2" fill="#00c2ff"/><rect x="89.7" y="314.7" width="9" height="12.2" fill="#00baff"/><rect x="98.7" y="314.7" width="9" height="12.2" fill="#00ceff"/><rect x="107.6" y="314.7" width="9" height="12.2" fill="#00c2ff"/><rect x="116.6" y="314.7" width="9" height="12.2" fill="#00c0ff"/><rect x="125.6" y="314.7" width="9" height="12.2" fill="#00c4ff"/><rect x="134.6" y="314.7" width="9" height="12.2" fill="#00dcff"/><rect x="143.5" y="314.7" width="9" height="12.2" fill="#00e5fe"/><rect x="152.5" y="314.7" width="9" height="12.2" fill="#00c8ff"/><rect x="161.5" y="314.7" width="9" height="12.2" fill="#0ad3f4"/><rect x="170.4" y="314.7" width="9" height="12.2" fill="#0fdbef"/><rect x="179.4" y="314.7" width="9" height="12.2" fill="#0ecdf0"/><rect x="188.4" y="314.7" width="9" height="12.2" fill="#1bebe3"/><rect x="197.3" y="314.7" width="9" height="12.2" fill="#20f9de"/><rect x="206.3" y="314.7" width="9" height="12.2" fill="#18eee6"/><rect x="215.3" y="314.7" width="9" height="12.2" fill="#10f2ee"/><rect x="224.3" y="314.7" width="9" height="12.2" fill="#23f5db"/><rect x="233.2" y="314.7" width="9" height="12.2" fill="#16fce8"/><rect x="242.2" y="314.7" width="9" height="12.2" fill="#25fdd9"/><rect x="251.2" y="314.7" width="9" height="12.2" fill="#12fcec"/><rect x="260.1" y="314.7" width="9" height="12.2" fill="#01edfd"/><rect x="269.1" y="314.7" width="9" height="12.2" fill="#00caff"/><rect x="278.1" y="314.7" width="9" height="12.2" fill="#87ff77"/><rect x="287.0" y="314.7" width="9" height="12.2" fill="#d2ff2c"/><rect x="296.0" y="314.7" width="9" height="12.2" fill="#87ff77"/><rect x="305.0" y="314.7" width="9" height="12.2" fill="#008fff"/><rect x="314.0" y="314.7" width="9" height="12.2" fill="#0099ff"/><rect x="322.9" y="314.7" width="9" height="12.2" fill="#009dff"/><rect x="331.9" y="314.7" width="9" height="12.2" fill="#008fff"/><rect x="340.9" y="314.7" width="9" height="12.2" fill="#009dff"/><rect x="349.8" y="314.7" width="9" height="12.2" fill="#0093ff"/><rect x="358.8" y="314.7" width="9" height="12.2" fill="#008bff"/><rect x="367.8" y="314.7" width="9" height="12.2" fill="#0093ff"/><rect x="376.7" y="314.7" width="9" height="12.2" fill="#0095ff"/><rect x="385.7" y="314.7" width="9" height="12.2" fill="#0089ff"/><rect x="394.7" y="314.7" width="9" height="12.2" fill="#0095ff"/><rect x="403.7" y="314.7" width="9" height="12.2" fill="#009bff"/><rect x="412.6" y="314.7" width="9" height="12.2" fill="#009fff"/><rect x="421.6" y="314.7" width="9" height="12.2" fill="#00acff"/><rect x="430.6" y="314.7" width="9" height="12.2" fill="#00c4ff"/><rect x="439.5" y="314.7" width="9" height="12.2" fill="#00d2ff"/><rect x="448.5" y="314.7" width="9" height="12.2" fill="#00d9fe"/><rect x="457.5" y="314.7" width="9" height="12.2" fill="#01e5fd"/><rect x="466.4" y="314.7" width="9" height="12.2" fill="#00d8ff"/><rect x="475.4" y="314.7" width="9" height="12.2" fill="#00ccff"/><rect x="484.4" y="314.7" width="9" height="12.2" fill="#00bcff"/><rect x="493.4" y="314.7" width="9" height="12.2" fill="#0cbff2"/><rect x="502.3" y="314.7" width="9" height="12.2" fill="#0eb7f0"/><rect x="511.3" y="314.7" width="9" height="12.2" fill="#0ec7f0"/><rect x="520.3" y="314.7" width="9" height="12.2" fill="#00baff"/><rect x="529.2" y="314.7" width="9" height="12.2" fill="#00b6ff"/><rect x="538.2" y="314.7" width="9" height="12.2" fill="#00beff"/><rect x="547.2" y="314.7" width="9" height="12.2" fill="#00acff"/><rect x="556.1" y="314.7" width="9" height="12.2" fill="#00a7ff"/><rect x="0.0" y="326.4" width="9" height="12.2" fill="#12e6ec"/><rect x="9.0" y="326.4" width="9" height="12.2" fill="#0ee2f0"/><rect x="17.9" y="326.4" width="9" height="12.2" fill="#0ae6f4"/><rect x="26.9" y="326.4" width="9" height="12.2" fill="#02dbfc"/><rect x="35.9" y="326.4" width="9" height="12.2" fill="#07e7f7"/><rect x="44.9" y="326.4" width="9" height="12.2" fill="#07e3f7"/><rect x="53.8" y="326.4" width="9" height="12.2" fill="#08e2f6"/><rect x="62.8" y="326.4" width="9" height="12.2" fill="#0ae6f4"/><rect x="71.8" y="326.4" width="9" height="12.2" fill="#03edfb"/><rect x="80.7" y="326.4" width="9" height="12.2" fill="#05e9f9"/><rect x="89.7" y="326.4" width="9" height="12.2" fill="#00e5fe"/><rect x="98.7" y="326.4" width="9" height="12.2" fill="#05e9f9"/><rect x="107.6" y="326.4" width="9" height="12.2" fill="#05e1f9"/><rect x="116.6" y="326.4" width="9" height="12.2" fill="#0fefef"/><rect x="125.6" y="326.4" width="9" height="12.2" fill="#09e7f5"/><rect x="134.6" y="326.4" width="9" height="12.2" fill="#12faec"/><rect x="143.5" y="326.4" width="9" height="12.2" fill="#1bf7e3"/><rect x="152.5" y="326.4" width="9" height="12.2" fill="#0ef4f0"/><rect x="161.5" y="326.4" width="9" height="12.2" fill="#12f2ec"/><rect x="170.4" y="326.4" width="9" height="12.2" fill="#09f1f5"/><rect x="179.4" y="326.4" width="9" height="12.2" fill="#26fcd8"/><rect x="188.4" y="326.4" width="9" height="12.2" fill="#37fdc7"/><rect x="197.3" y="326.4" width="9" height="12.2" fill="#38ffc6"/><rect x="206.3" y="326.4" width="9" height="12.2" fill="#36ffc8"/><rect x="215.3" y="326.4" width="9" height="12.2" fill="#34ffca"/><rect x="224.3" y="326.4" width="9" height="12.2" fill="#40ffbe"/><rect x="233.2" y="326.4" width="9" height="12.2" fill="#46ffb8"/><rect x="242.2" y="326.4" width="9" height="12.2" fill="#42ffbc"/><rect x="251.2" y="326.4" width="9" height="12.2" fill="#3cffc2"/><rect x="260.1" y="326.4" width="9" height="12.2" fill="#30ffce"/><rect x="269.1" y="326.4" width="9" height="12.2" fill="#09eff5"/><rect x="278.1" y="326.4" width="9" height="12.2" fill="#87ff77"/><rect x="287.0" y="326.4" width="9" height="12.2" fill="#d8ff26"/><rect x="296.0" y="326.4" width="9" height="12.2" fill="#89ff75"/><rect x="305.0" y="326.4" width="9" height="12.2" fill="#00a3ff"/><rect x="314.0" y="326.4" width="9" height="12.2" fill="#0093ff"/><rect x="322.9" y="326.4" width="9" height="12.2" fill="#008fff"/><rect x="331.9" y="326.4" width="9" height="12.2" fill="#009fff"/><rect x="340.9" y="326.4" width="9" height="12.2" fill="#0097ff"/><rect x="349.8" y="326.4" width="9" height="12.2" fill="#0091ff"/><rect x="358.8" y="326.4" width="9" height="12.2" fill="#0095ff"/><rect x="367.8" y="326.4" width="9" height="12.2" fill="#0099ff"/><rect x="376.7" y="326.4" width="9" height="12.2" fill="#0091ff"/><rect x="385.7" y="326.4" width="9" height="12.2" fill="#008bff"/><rect x="394.7" y="326.4" width="9" height="12.2" fill="#009bff"/><rect x="403.7" y="326.4" width="9" height="12.2" fill="#10a9ee"/><rect x="412.6" y="326.4" width="9" height="12.2" fill="#10b7ee"/><rect x="421.6" y="326.4" width="9" height="12.2" fill="#12c1ec"/><rect x="430.6" y="326.4" width="9" height="12.2" fill="#00cffe"/><rect x="439.5" y="326.4" width="9" height="12.2" fill="#01e3fd"/><rect x="448.5" y="326.4" width="9" height="12.2" fill="#15f3e9"/><rect x="457.5" y="326.4" width="9" height="12.2" fill="#22fcdc"/><rect x="466.4" y="326.4" width="9" height="12.2" fill="#22f8dc"/><rect x="475.4" y="326.4" width="9" height="12.2" fill="#23f5db"/><rect x="484.4" y="326.4" width="9" height="12.2" fill="#0dedf1"/><rect x="493.4" y="326.4" width="9" height="12.2" fill="#0ceaf2"/><rect x="502.3" y="326.4" width="9" height="12.2" fill="#0dedf1"/><rect x="511.3" y="326.4" width="9" height="12.2" fill="#09dbf5"/><rect x="520.3" y="326.4" width="9" height="12.2" fill="#0dddf1"/><rect x="529.2" y="326.4" width="9" height="12.2" fill="#0ed7f0"/><rect x="538.2" y="326.4" width="9" height="12.2" fill="#0fdbef"/><rect x="547.2" y="326.4" width="9" height="12.2" fill="#15d2e9"/><rect x="556.1" y="326.4" width="9" height="12.2" fill="#03cafb"/><rect x="0.0" y="338.0" width="9" height="12.2" fill="#20ffde"/><rect x="9.0" y="338.0" width="9" height="12.2" fill="#1affe4"/><rect x="17.9" y="338.0" width="9" height="12.2" fill="#18fce6"/><rect x="26.9" y="338.0" width="9" height="12.2" fill="#17fde7"/><rect x="35.9" y="338.0" width="9" height="12.2" fill="#1bfde3"/><rect x="44.9" y="338.0" width="9" height="12.2" fill="#1effe0"/><rect x="53.8" y="338.0" width="9" height="12.2" fill="#2cffd2"/><rect x="62.8" y="338.0" width="9" height="12.2" fill="#2affd4"/><rect x="71.8" y="338.0" width="9" height="12.2" fill="#3affc4"/><rect x="80.7" y="338.0" width="9" height="12.2" fill="#30ffce"/><rect x="89.7" y="338.0" width="9" height="12.2" fill="#2cffd2"/><rect x="98.7" y="338.0" width="9" height="12.2" fill="#25fdd9"/><rect x="107.6" y="338.0" width="9" height="12.2" fill="#2dfdd1"/><rect x="116.6" y="338.0" width="9" height="12.2" fill="#39fdc5"/><rect x="125.6" y="338.0" width="9" height="12.2" fill="#50ffae"/><rect x="134.6" y="338.0" width="9" height="12.2" fill="#93ff6b"/><rect x="143.5" y="338.0" width="9" height="12.2" fill="#8fff6f"/><rect x="152.5" y="338.0" width="9" height="12.2" fill="#7af384"/><rect x="161.5" y="338.0" width="9" height="12.2" fill="#69f795"/><rect x="170.4" y="338.0" width="9" height="12.2" fill="#57e8a7"/><rect x="179.4" y="338.0" width="9" height="12.2" fill="#3df5c1"/><rect x="188.4" y="338.0" width="9" height="12.2" fill="#45f1b9"/><rect x="197.3" y="338.0" width="9" height="12.2" fill="#4df1b1"/><rect x="206.3" y="338.0" width="9" height="12.2" fill="#47f5b7"/><rect x="215.3" y="338.0" width="9" height="12.2" fill="#55f3a9"/><rect x="224.3" y="338.0" width="9" height="12.2" fill="#59f1a5"/><rect x="233.2" y="338.0" width="9" height="12.2" fill="#51f3ad"/><rect x="242.2" y="338.0" width="9" height="12.2" fill="#67f397"/><rect x="251.2" y="338.0" width="9" height="12.2" fill="#74df80"/><rect x="260.1" y="338.0" width="9" height="12.2" fill="#80df7a"/><rect x="269.1" y="338.0" width="9" height="12.2" fill="#4ff7af"/><rect x="278.1" y="338.0" width="9" height="12.2" fill="#8bff73"/><rect x="287.0" y="338.0" width="9" height="12.2" fill="#d2ff2c"/><rect x="296.0" y="338.0" width="9" height="12.2" fill="#87ff77"/><rect x="305.0" y="338.0" width="9" height="12.2" fill="#00aeff"/><rect x="314.0" y="338.0" width="9" height="12.2" fill="#009bff"/><rect x="322.9" y="338.0" width="9" height="12.2" fill="#19b3e5"/><rect x="331.9" y="338.0" width="9" height="12.2" fill="#17a9e7"/><rect x="340.9" y="338.0" width="9" height="12.2" fill="#27b0d7"/><rect x="349.8" y="338.0" width="9" height="12.2" fill="#21badd"/><rect x="358.8" y="338.0" width="9" height="12.2" fill="#23badb"/><rect x="367.8" y="338.0" width="9" height="12.2" fill="#27bed7"/><rect x="376.7" y="338.0" width="9" height="12.2" fill="#2cbed2"/><rect x="385.7" y="338.0" width="9" height="12.2" fill="#29b6d5"/><rect x="394.7" y="338.0" width="9" height="12.2" fill="#1fb8df"/><rect x="403.7" y="338.0" width="9" height="12.2" fill="#0caff2"/><rect x="412.6" y="338.0" width="9" height="12.2" fill="#00b6ff"/><rect x="421.6" y="338.0" width="9" height="12.2" fill="#00daff"/><rect x="430.6" y="338.0" width="9" height="12.2" fill="#01e7fd"/><rect x="439.5" y="338.0" width="9" height="12.2" fill="#12faec"/><rect x="448.5" y="338.0" width="9" height="12.2" fill="#2affd4"/><rect x="457.5" y="338.0" width="9" height="12.2" fill="#4effb0"/><rect x="466.4" y="338.0" width="9" height="12.2" fill="#5bffa3"/><rect x="475.4" y="338.0" width="9" height="12.2" fill="#67ff97"/><rect x="484.4" y="338.0" width="9" height="12.2" fill="#6cf992"/><rect x="493.4" y="338.0" width="9" height="12.2" fill="#63f59b"/><rect x="502.3" y="338.0" width="9" height="12.2" fill="#3affc4"/><rect x="511.3" y="338.0" width="9" height="12.2" fill="#26ffd8"/><rect x="520.3" y="338.0" width="9" height="12.2" fill="#22ffdc"/><rect x="529.2" y="338.0" width="9" height="12.2" fill="#30ffce"/><rect x="538.2" y="338.0" width="9" height="12.2" fill="#19fde5"/><rect x="547.2" y="338.0" width="9" height="12.2" fill="#2cf8d2"/><rect x="556.1" y="338.0" width="9" height="12.2" fill="#24f6da"/><rect x="0.0" y="349.7" width="9" height="12.2" fill="#18ffe6"/><rect x="9.0" y="349.7" width="9" height="12.2" fill="#24ffda"/><rect x="17.9" y="349.7" width="9" height="12.2" fill="#2bfdd3"/><rect x="26.9" y="349.7" width="9" height="12.2" fill="#4df7b1"/><rect x="35.9" y="349.7" width="9" height="12.2" fill="#57fda7"/><rect x="44.9" y="349.7" width="9" height="12.2" fill="#53fdab"/><rect x="53.8" y="349.7" width="9" height="12.2" fill="#4ff9af"/><rect x="62.8" y="349.7" width="9" height="12.2" fill="#4affb4"/><rect x="71.8" y="349.7" width="9" height="12.2" fill="#49fbb5"/><rect x="80.7" y="349.7" width="9" height="12.2" fill="#59f5a5"/><rect x="89.7" y="349.7" width="9" height="12.2" fill="#55f9a9"/><rect x="98.7" y="349.7" width="9" height="12.2" fill="#51fbad"/><rect x="107.6" y="349.7" width="9" height="12.2" fill="#49f7b5"/><rect x="116.6" y="349.7" width="9" height="12.2" fill="#4bfdb3"/><rect x="125.6" y="349.7" width="9" height="12.2" fill="#70fd8e"/><rect x="134.6" y="349.7" width="9" height="12.2" fill="#b2b246"/><rect x="143.5" y="349.7" width="9" height="12.2" fill="#bab13c"/><rect x="152.5" y="349.7" width="9" height="12.2" fill="#8af374"/><rect x="161.5" y="349.7" width="9" height="12.2" fill="#61f39d"/><rect x="170.4" y="349.7" width="9" height="12.2" fill="#30ffce"/><rect x="179.4" y="349.7" width="9" height="12.2" fill="#24ffda"/><rect x="188.4" y="349.7" width="9" height="12.2" fill="#23fddb"/><rect x="197.3" y="349.7" width="9" height="12.2" fill="#1effe0"/><rect x="206.3" y="349.7" width="9" height="12.2" fill="#2cffd2"/><rect x="215.3" y="349.7" width="9" height="12.2" fill="#15fde9"/><rect x="224.3" y="349.7" width="9" height="12.2" fill="#24ffda"/><rect x="233.2" y="349.7" width="9" height="12.2" fill="#26ffd8"/><rect x="242.2" y="349.7" width="9" height="12.2" fill="#4effb0"/><rect x="251.2" y="349.7" width="9" height="12.2" fill="#83ff7b"/><rect x="260.1" y="349.7" width="9" height="12.2" fill="#85ff79"/><rect x="269.1" y="349.7" width="9" height="12.2" fill="#2effd0"/><rect x="278.1" y="349.7" width="9" height="12.2" fill="#a2f75c"/><rect x="287.0" y="349.7" width="9" height="12.2" fill="#dff31f"/><rect x="296.0" y="349.7" width="9" height="12.2" fill="#a2f75c"/><rect x="305.0" y="349.7" width="9" height="12.2" fill="#00acff"/><rect x="314.0" y="349.7" width="9" height="12.2" fill="#009bff"/><rect x="322.9" y="349.7" width="9" height="12.2" fill="#0ab7f4"/><rect x="331.9" y="349.7" width="9" height="12.2" fill="#0eaff0"/><rect x="340.9" y="349.7" width="9" height="12.2" fill="#0ca5f2"/><rect x="349.8" y="349.7" width="9" height="12.2" fill="#0cabf2"/><rect x="358.8" y="349.7" width="9" height="12.2" fill="#0cb3f2"/><rect x="367.8" y="349.7" width="9" height="12.2" fill="#0ca7f2"/><rect x="376.7" y="349.7" width="9" height="12.2" fill="#0099ff"/><rect x="385.7" y="349.7" width="9" height="12.2" fill="#00a7ff"/><rect x="394.7" y="349.7" width="9" height="12.2" fill="#00a1ff"/><rect x="403.7" y="349.7" width="9" height="12.2" fill="#00acff"/><rect x="412.6" y="349.7" width="9" height="12.2" fill="#00acff"/><rect x="421.6" y="349.7" width="9" height="12.2" fill="#00c8ff"/><rect x="430.6" y="349.7" width="9" height="12.2" fill="#10e3ee"/><rect x="439.5" y="349.7" width="9" height="12.2" fill="#1af4e4"/><rect x="448.5" y="349.7" width="9" height="12.2" fill="#25fdd9"/><rect x="457.5" y="349.7" width="9" height="12.2" fill="#42ffbc"/><rect x="466.4" y="349.7" width="9" height="12.2" fill="#44ffba"/><rect x="475.4" y="349.7" width="9" height="12.2" fill="#38ffc6"/><rect x="484.4" y="349.7" width="9" height="12.2" fill="#34ffca"/><rect x="493.4" y="349.7" width="9" height="12.2" fill="#25fdd9"/><rect x="502.3" y="349.7" width="9" height="12.2" fill="#22ffdc"/><rect x="511.3" y="349.7" width="9" height="12.2" fill="#17fde7"/><rect x="520.3" y="349.7" width="9" height="12.2" fill="#28ffd6"/><rect x="529.2" y="349.7" width="9" height="12.2" fill="#34ffca"/><rect x="538.2" y="349.7" width="9" height="12.2" fill="#26ffd8"/><rect x="547.2" y="349.7" width="9" height="12.2" fill="#22ffdc"/><rect x="556.1" y="349.7" width="9" height="12.2" fill="#14fcea"/><rect x="0.0" y="361.3" width="9" height="12.2" fill="#1eace0"/><rect x="9.0" y="361.3" width="9" height="12.2" fill="#21a4dd"/><rect x="17.9" y="361.3" width="9" height="12.2" fill="#1ca6e2"/><rect x="26.9" y="361.3" width="9" height="12.2" fill="#22a8dc"/><rect x="35.9" y="361.3" width="9" height="12.2" fill="#28aad6"/><rect x="44.9" y="361.3" width="9" height="12.2" fill="#20a4de"/><rect x="53.8" y="361.3" width="9" height="12.2" fill="#26a8d8"/><rect x="62.8" y="361.3" width="9" height="12.2" fill="#28a6d6"/><rect x="71.8" y="361.3" width="9" height="12.2" fill="#2ea2d0"/><rect x="80.7" y="361.3" width="9" height="12.2" fill="#1ea6e0"/><rect x="89.7" y="361.3" width="9" height="12.2" fill="#22acdc"/><rect x="98.7" y="361.3" width="9" height="12.2" fill="#22a6dc"/><rect x="107.6" y="361.3" width="9" height="12.2" fill="#28aad6"/><rect x="116.6" y="361.3" width="9" height="12.2" fill="#1ca8e2"/><rect x="125.6" y="361.3" width="9" height="12.2" fill="#32aacc"/><rect x="134.6" y="361.3" width="9" height="12.2" fill="#4cfbb2"/><rect x="143.5" y="361.3" width="9" height="12.2" fill="#4efbb0"/><rect x="152.5" y="361.3" width="9" height="12.2" fill="#30a8ce"/><rect x="161.5" y="361.3" width="9" height="12.2" fill="#22a6dc"/><rect x="170.4" y="361.3" width="9" height="12.2" fill="#1ea2e0"/><rect x="179.4" y="361.3" width="9" height="12.2" fill="#28a4d6"/><rect x="188.4" y="361.3" width="9" height="12.2" fill="#1ea4e0"/><rect x="197.3" y="361.3" width="9" height="12.2" fill="#1ba2e3"/><rect x="206.3" y="361.3" width="9" height="12.2" fill="#16a4e8"/><rect x="215.3" y="361.3" width="9" height="12.2" fill="#17a4e7"/><rect x="224.3" y="361.3" width="9" height="12.2" fill="#19a8e5"/><rect x="233.2" y="361.3" width="9" height="12.2" fill="#1fa6df"/><rect x="242.2" y="361.3" width="9" height="12.2" fill="#2aa6d4"/><rect x="251.2" y="361.3" width="9" height="12.2" fill="#44fbba"/><rect x="260.1" y="361.3" width="9" height="12.2" fill="#48fbb6"/><rect x="269.1" y="361.3" width="9" height="12.2" fill="#1fa4df"/><rect x="278.1" y="361.3" width="9" height="12.2" fill="#ebe913"/><rect x="287.0" y="361.3" width="9" height="12.2" fill="#fdcc01"/><rect x="296.0" y="361.3" width="9" height="12.2" fill="#ebe913"/><rect x="305.0" y="361.3" width="9" height="12.2" fill="#0065ff"/><rect x="314.0" y="361.3" width="9" height="12.2" fill="#026cfc"/><rect x="322.9" y="361.3" width="9" height="12.2" fill="#006fff"/><rect x="331.9" y="361.3" width="9" height="12.2" fill="#006efe"/><rect x="340.9" y="361.3" width="9" height="12.2" fill="#026afc"/><rect x="349.8" y="361.3" width="9" height="12.2" fill="#0069ff"/><rect x="358.8" y="361.3" width="9" height="12.2" fill="#0067ff"/><rect x="367.8" y="361.3" width="9" height="12.2" fill="#0068fe"/><rect x="376.7" y="361.3" width="9" height="12.2" fill="#006bff"/><rect x="385.7" y="361.3" width="9" height="12.2" fill="#0069ff"/><rect x="394.7" y="361.3" width="9" height="12.2" fill="#0069ff"/><rect x="403.7" y="361.3" width="9" height="12.2" fill="#0069ff"/><rect x="412.6" y="361.3" width="9" height="12.2" fill="#066af8"/><rect x="421.6" y="361.3" width="9" height="12.2" fill="#0a72f4"/><rect x="430.6" y="361.3" width="9" height="12.2" fill="#0f88ef"/><rect x="439.5" y="361.3" width="9" height="12.2" fill="#0b86f3"/><rect x="448.5" y="361.3" width="9" height="12.2" fill="#0682f8"/><rect x="457.5" y="361.3" width="9" height="12.2" fill="#0d8af1"/><rect x="466.4" y="361.3" width="9" height="12.2" fill="#0c87f2"/><rect x="475.4" y="361.3" width="9" height="12.2" fill="#118aed"/><rect x="484.4" y="361.3" width="9" height="12.2" fill="#0f8eef"/><rect x="493.4" y="361.3" width="9" height="12.2" fill="#1085ee"/><rect x="502.3" y="361.3" width="9" height="12.2" fill="#0b8cf3"/><rect x="511.3" y="361.3" width="9" height="12.2" fill="#0d8af1"/><rect x="520.3" y="361.3" width="9" height="12.2" fill="#098af5"/><rect x="529.2" y="361.3" width="9" height="12.2" fill="#0880f6"/><rect x="538.2" y="361.3" width="9" height="12.2" fill="#0d86f1"/><rect x="547.2" y="361.3" width="9" height="12.2" fill="#0e8bf0"/><rect x="556.1" y="361.3" width="9" height="12.2" fill="#0888f6"/></svg><canvas id="hm" width="63" height="256"></canvas></div>
<svg style="position:absolute;left:0;top:0" width="1284" height="958"><rect x="698" y="53" width="567" height="374" fill="#fff"/><rect x="46" y="529" width="567" height="375" fill="#fff"/><rect x="698" y="529" width="567" height="375" fill="#fff"/><path d="M739.5 53V426M820.5 53V426M900.5 53V426M981.5 53V426M1062.5 53V426M1142.5 53V426M1223.5 53V426M698 420.5H1264M698 368.5H1264M698 315.5H1264M698 263.5H1264M698 210.5H1264M698 158.5H1264M698 105.5H1264M698 53.5H1264" stroke="#dfdfdf" stroke-width="1" fill="none"/><path d="M47.5 529V903M127.5 529V903M208.5 529V903M288.5 529V903M369.5 529V903M450.5 529V903M530.5 529V903M611.5 529V903M46 529.5H612M46 587.5H612M46 644.5H612M46 701.5H612M46 759.5H612M46 816.5H612M46 874.5H612" stroke="#dfdfdf" stroke-width="1" fill="none"/><path d="M699.5 529V903M790.5 529V903M881.5 529V903M972.5 529V903M1064.5 529V903M1155.5 529V903M1246.5 529V903M698 903.5H1264M698 856.5H1264M698 809.5H1264M698 763.5H1264M698 716.5H1264M698 669.5H1264M698 623.5H1264M698 576.5H1264M698 529.5H1264" stroke="#dfdfdf" stroke-width="1" fill="none"/><path d="M46 426.5H612M46.5 53V427" stroke="#262626" stroke-width="1" fill="none"/><path d="M698 426.5H1265M698.5 53V427M739.5 426v-5M820.5 426v-5M900.5 426v-5M981.5 426v-5M1062.5 426v-5M1142.5 426v-5M1223.5 426v-5M699 420.5h5M699 368.5h5M699 315.5h5M699 263.5h5M699 210.5h5M699 158.5h5M699 105.5h5" stroke="#262626" stroke-width="1" fill="none"/><path d="M46 903.5H613M46.5 529V904M46 529.5H613M612.5 529V904M127.5 903v-5M127.5 530v5M208.5 903v-5M208.5 530v5M288.5 903v-5M288.5 530v5M369.5 903v-5M369.5 530v5M450.5 903v-5M450.5 530v5M530.5 903v-5M530.5 530v5M611.5 903v-5M611.5 530v5M47 587.5h5M612 587.5h-5M47 644.5h5M612 644.5h-5M47 701.5h5M612 701.5h-5M47 759.5h5M612 759.5h-5M47 816.5h5M612 816.5h-5M47 874.5h5M612 874.5h-5" stroke="#262626" stroke-width="1" fill="none"/><path d="M698 903.5H1265M698.5 529V904M698 529.5H1265M1264.5 529V904M790.5 903v-5M790.5 530v5M881.5 903v-5M881.5 530v5M972.5 903v-5M972.5 530v5M1064.5 903v-5M1064.5 530v5M1155.5 903v-5M1155.5 530v5M1246.5 903v-5M1246.5 530v5M699 856.5h5M1264 856.5h-5M699 809.5h5M1264 809.5h-5M699 763.5h5M1264 763.5h-5M699 716.5h5M1264 716.5h-5M699 669.5h5M1264 669.5h-5M699 623.5h5M1264 623.5h-5M699 576.5h5M1264 576.5h-5" stroke="#262626" stroke-width="1" fill="none"/><svg x="0" y="0" width="1284" height="958" overflow="hidden"><clipPath id="cf"><rect x="46" y="529" width="567" height="375"/></clipPath><clipPath id="ct"><rect x="698" y="529" width="567" height="375"/></clipPath></svg><path d="M976.4 416.8H986.8L981.6 426Z" fill="#0000e0"/><circle cx="944.5" cy="377.4" r="2.6" fill="#008cff"/><circle cx="951.4" cy="397.4" r="2.6" fill="#008cff"/><circle cx="982.4" cy="390.4" r="2.6" fill="#008cff"/><circle cx="969.3" cy="401.1" r="2.6" fill="#008cff"/><circle cx="978.4" cy="399.3" r="2.6" fill="#008cff"/><circle cx="964.3" cy="410.5" r="2.6" fill="#008cff"/><circle cx="966.2" cy="408.3" r="2.6" fill="#008cff"/><circle cx="968.2" cy="406" r="2.6" fill="#008cff"/><circle cx="970.5" cy="404.6" r="2.6" fill="#008cff"/><circle cx="973.4" cy="405.8" r="2.6" fill="#008cff"/><circle cx="975.5" cy="404.6" r="2.6" fill="#008cff"/><circle cx="976.8" cy="403" r="2.6" fill="#008cff"/><circle cx="983.6" cy="415.2" r="2.6" fill="#008cff"/><circle cx="981.6" cy="420.6" r="2.6" fill="#008cff"/><g clip-path="url(#cf)"><path d="M47.0,664.8 47.4,667.2 47.8,671.0 48.2,674.3 48.6,678.2 49.0,674.6 49.4,674.7 49.8,677.0 50.2,682.7 50.6,683.7 51.0,684.7 51.4,688.8 51.8,688.0 52.3,691.4 52.7,692.2 53.1,689.8 53.5,690.7 53.9,695.3 54.3,700.4 54.7,700.5 55.1,699.4 55.5,701.0 55.9,702.7 56.3,707.2 56.7,713.5 57.1,709.1 57.5,703.1 57.9,706.6 58.3,715.0 58.7,715.8 59.1,711.4 59.5,714.4 59.9,745.0 60.3,720.2 60.7,715.5 61.1,720.1 61.5,732.6 62.0,707.9 62.4,703.0 62.8,708.0 63.2,720.3 63.6,714.8 64.0,703.7 64.4,703.9 64.8,713.7 65.2,699.2 65.6,699.2 66.0,712.3 66.4,704.7 66.8,700.3 67.2,697.7 67.6,696.0 68.0,702.8 68.4,715.0 68.8,699.1 69.2,698.7 69.6,704.2 70.0,697.0 70.4,694.1 70.8,696.6 71.2,692.2 71.7,669.1 72.1,651.4 72.5,639.0 72.9,632.0 73.3,630.3 73.7,634.0 74.1,643.0 74.5,657.3 74.9,677.0 75.3,699.3 75.7,701.7 76.1,679.4 76.5,664.0 76.9,655.3 77.3,653.3 77.7,658.2 78.1,669.7 78.5,670.6 78.9,655.3 79.3,652.1 79.7,660.8 80.1,681.6 80.5,664.7 80.9,646.3 81.4,632.2 81.8,622.5 82.2,617.1 82.6,616.0 83.0,619.3 83.4,626.8 83.8,638.7 84.2,655.0 84.6,675.5 85.0,689.0 85.4,692.3 85.8,698.5 86.2,699.5 86.6,701.8 87.0,704.1 87.4,694.9 87.8,698.3 88.2,710.0 88.6,699.3 89.0,682.9 89.4,674.8 89.8,679.6 90.2,713.8 90.6,690.9 91.1,686.4 91.5,691.2 91.9,691.6 92.3,694.0 92.7,720.2 93.1,704.9 93.5,712.0 93.9,694.5 94.3,679.2 94.7,676.8 95.1,682.7 95.5,695.8 95.9,701.1 96.3,708.3 96.7,713.0 97.1,688.4 97.5,682.9 97.9,687.1 98.3,702.2 98.7,693.6 99.1,685.3 99.5,685.8 99.9,690.1 100.3,692.6 100.8,693.4 101.2,693.5 101.6,688.7 102.0,688.7 102.4,700.2 102.8,726.6 103.2,709.2 103.6,706.9 104.0,704.5 104.4,700.1 104.8,699.5 105.2,705.8 105.6,725.4 106.0,707.3 106.4,694.5 106.8,694.2 107.2,699.9 107.6,703.0 108.0,710.6 108.4,736.9 108.8,726.1 109.2,710.8 109.6,702.1 110.0,697.5 110.5,699.1 110.9,706.9 111.3,711.8 111.7,712.6 112.1,710.4 112.5,703.2 112.9,697.8 113.3,696.1 113.7,701.5 114.1,710.9 114.5,712.1 114.9,705.7 115.3,698.4 115.7,694.5 116.1,696.5 116.5,704.3 116.9,711.4 117.3,708.1 117.7,717.1 118.1,724.9 118.5,705.9 118.9,700.0 119.3,747.9 119.7,700.0 120.2,703.4 120.6,713.4 121.0,728.7 121.4,725.7 121.8,730.2 122.2,724.5 122.6,722.2 123.0,699.6 123.4,696.5 123.8,708.0 124.2,714.5 124.6,729.7 125.0,723.2 125.4,722.4 125.8,724.3 126.2,712.7 126.6,720.2 127.0,727.9 127.4,714.4 127.8,701.7 128.2,695.5 128.6,698.4 129.0,713.5 129.4,710.9 129.9,708.5 130.3,706.9 130.7,699.9 131.1,693.8 131.5,691.0 131.9,694.9 132.3,704.5 132.7,703.4 133.1,700.2 133.5,696.2 133.9,698.6 134.3,705.7 134.7,704.6 135.1,704.0 135.5,709.6 135.9,717.1 136.3,729.4 136.7,734.3 137.1,711.8 137.5,709.9 137.9,708.3 138.3,705.3 138.7,702.5 139.1,701.8 139.6,759.3 140.0,712.6 140.4,712.4 140.8,703.9 141.2,701.1 141.6,703.1 142.0,703.9 142.4,706.4 142.8,715.6 143.2,709.4 143.6,701.4 144.0,699.0 144.4,701.6 144.8,712.4 145.2,742.3 145.6,722.3 146.0,709.0 146.4,702.4 146.8,699.2 147.2,701.6 147.6,707.5 148.0,713.4 148.4,730.9 148.8,736.9 149.3,713.3 149.7,701.7 150.1,703.7 150.5,719.8 150.9,708.3 151.3,716.8 151.7,727.3 152.1,724.7 152.5,722.7 152.9,729.9 153.3,721.0 153.7,705.5 154.1,706.8 154.5,704.9 154.9,708.1 155.3,729.6 155.7,708.6 156.1,713.0 156.5,737.1 156.9,706.9 157.3,701.3 157.7,706.1 158.1,725.9 158.5,725.9 159.0,720.7 159.4,717.9 159.8,720.3 160.2,707.9 160.6,698.0 161.0,699.6 161.4,708.5 161.8,710.1 162.2,706.0 162.6,710.2 163.0,727.8 163.4,724.1 163.8,715.5 164.2,716.3 164.6,752.6 165.0,713.0 165.4,701.6 165.8,701.6 166.2,718.0 166.6,716.3 167.0,703.3 167.4,703.5 167.8,706.0 168.2,706.9 168.6,705.9 169.1,703.6 169.5,714.9 169.9,720.5 170.3,750.7 170.7,706.7 171.1,716.1 171.5,713.8 171.9,713.1 172.3,697.4 172.7,692.3 173.1,694.4 173.5,698.2 173.9,705.4 174.3,723.8 174.7,709.5 175.1,703.1 175.5,704.8 175.9,709.9 176.3,711.4 176.7,704.1 177.1,704.5 177.5,747.5 177.9,706.8 178.3,703.0 178.8,703.6 179.2,698.6 179.6,696.2 180.0,698.8 180.4,706.0 180.8,714.5 181.2,733.9 181.6,709.9 182.0,704.1 182.4,708.6 182.8,716.1 183.2,720.3 183.6,721.9 184.0,721.4 184.4,739.5 184.8,724.2 185.2,713.4 185.6,711.3 186.0,697.6 186.4,679.4 186.8,673.3 187.2,679.1 187.6,697.1 188.0,708.0 188.5,717.3 188.9,728.4 189.3,752.8 189.7,720.5 190.1,701.7 190.5,694.2 190.9,691.4 191.3,790.9 191.7,696.6 192.1,709.3 192.5,713.3 192.9,702.3 193.3,704.3 193.7,711.6 194.1,705.1 194.5,700.8 194.9,698.3 195.3,699.6 195.7,702.3 196.1,696.7 196.5,696.3 196.9,707.4 197.3,735.4 197.7,728.6 198.2,722.3 198.6,743.7 199.0,708.3 199.4,704.2 199.8,710.9 200.2,715.4 200.6,708.8 201.0,704.0 201.4,709.3 201.8,725.3 202.2,714.1 202.6,762.2 203.0,728.8 203.4,740.8 203.8,753.0 204.2,731.1 204.6,715.5 205.0,710.8 205.4,724.0 205.8,731.4 206.2,715.3 206.6,708.7 207.0,702.0 207.4,697.9 207.9,701.1 208.3,712.5 208.7,720.6 209.1,725.2 209.5,713.4 209.9,699.9 210.3,696.1 210.7,696.0 211.1,697.2 211.5,701.8 211.9,709.3 212.3,728.6 212.7,713.4 213.1,708.1 213.5,704.5 213.9,694.3 214.3,689.5 214.7,689.3 215.1,691.6 215.5,694.9 215.9,700.0 216.3,702.1 216.7,705.2 217.1,708.0 217.6,702.3 218.0,702.9 218.4,707.8 218.8,705.3 219.2,702.3 219.6,702.1 220.0,698.7 220.4,691.7 220.8,689.9 221.2,697.9 221.6,710.8 222.0,707.9 222.4,715.0 222.8,712.9 223.2,700.0 223.6,698.6 224.0,699.6 224.4,698.3 224.8,700.8 225.2,719.1 225.6,716.7 226.0,700.2 226.4,701.9 226.8,718.8 227.3,716.4 227.7,718.3 228.1,723.8 228.5,753.5 228.9,713.3 229.3,697.3 229.7,693.7 230.1,700.2 230.5,713.9 230.9,726.5 231.3,721.6 231.7,711.3 232.1,710.8 232.5,716.0 232.9,729.9 233.3,739.5 233.7,717.3 234.1,712.8 234.5,725.0 234.9,722.3 235.3,712.3 235.7,710.5 236.1,713.4 236.5,715.1 237.0,725.3 237.4,705.4 237.8,705.1 238.2,716.8 238.6,709.4 239.0,703.2 239.4,703.5 239.8,715.3 240.2,743.5 240.6,731.6 241.0,721.2 241.4,715.2 241.8,718.3 242.2,746.3 242.6,714.4 243.0,702.4 243.4,704.6 243.8,714.0 244.2,712.8 244.6,705.8 245.0,706.6 245.4,711.4 245.8,720.5 246.2,710.4 246.7,701.1 247.1,700.3 247.5,707.0 247.9,719.5 248.3,754.0 248.7,724.2 249.1,714.6 249.5,712.1 249.9,709.5 250.3,713.9 250.7,706.4 251.1,779.4 251.5,708.8 251.9,702.7 252.3,704.4 252.7,710.8 253.1,708.7 253.5,708.4 253.9,718.5 254.3,724.3 254.7,727.6 255.1,731.4 255.5,708.4 255.9,703.9 256.4,711.0 256.8,707.1 257.2,711.2 257.6,724.2 258.0,754.3 258.4,728.9 258.8,716.9 259.2,706.1 259.6,712.6 260.0,741.2 260.4,719.5 260.8,737.3 261.2,708.5 261.6,698.6 262.0,699.2 262.4,711.5 262.8,754.4 263.2,729.7 263.6,726.4 264.0,705.4 264.4,705.1 264.8,713.5 265.2,720.4 265.6,715.5 266.1,710.9 266.5,709.1 266.9,712.5 267.3,730.4 267.7,710.2 268.1,708.1 268.5,717.2 268.9,716.7 269.3,712.1 269.7,717.5 270.1,730.7 270.5,713.7 270.9,713.4 271.3,710.5 271.7,702.1 272.1,698.3 272.5,692.9 272.9,693.6 273.3,700.9 273.7,712.8 274.1,728.8 274.5,714.8 274.9,704.9 275.3,698.5 275.8,699.1 276.2,700.3 276.6,700.6 277.0,702.8 277.4,713.9 277.8,738.8 278.2,709.8 278.6,706.0 279.0,716.3 279.4,711.4 279.8,712.3 280.2,752.5 280.6,712.2 281.0,708.0 281.4,716.8 281.8,729.8 282.2,718.1 282.6,706.5 283.0,704.4 283.4,709.5 283.8,722.9 284.2,714.1 284.6,706.9 285.0,718.8 285.4,738.1 285.9,720.8 286.3,721.6 286.7,716.9 287.1,718.1 287.5,730.8 287.9,712.9 288.3,708.8 288.7,713.7 289.1,727.9 289.5,711.4 289.9,703.8 290.3,712.2 290.7,735.9 291.1,708.4 291.5,709.5 291.9,703.8 292.3,703.5 292.7,713.6 293.1,709.6 293.5,708.4 293.9,708.8 294.3,705.8 294.7,703.9 295.1,702.0 295.6,704.1 296.0,714.2 296.4,725.0 296.8,723.6 297.2,733.6 297.6,755.6 298.0,722.2 298.4,702.9 298.8,695.5 299.2,693.3 299.6,691.7 300.0,692.6 300.4,699.9 300.8,719.7 301.2,732.0 301.6,717.1 302.0,699.6 302.4,696.7 302.8,708.9 303.2,785.2 303.6,710.7 304.0,716.9 304.4,726.0 304.8,717.6 305.3,722.5 305.7,718.6 306.1,722.8 306.5,744.8 306.9,721.7 307.3,716.6 307.7,717.5 308.1,712.1 308.5,709.2 308.9,717.5 309.3,756.4 309.7,717.5 310.1,713.8 310.5,710.8 310.9,707.0 311.3,705.6 311.7,708.1 312.1,713.1 312.5,713.7 312.9,713.1 313.3,713.0 313.7,716.8 314.1,709.2 314.5,708.5 315.0,723.5 315.4,724.5 315.8,716.4 316.2,710.8 316.6,702.2 317.0,703.0 317.4,718.5 317.8,711.4 318.2,704.9 318.6,715.6 319.0,728.0 319.4,722.6 319.8,717.4 320.2,715.1 320.6,715.9 321.0,711.5 321.4,708.6 321.8,707.8 322.2,703.5 322.6,703.4 323.0,706.4 323.4,708.6 323.8,714.2 324.2,734.3 324.7,724.7 325.1,710.5 325.5,706.2 325.9,705.8 326.3,711.8 326.7,722.7 327.1,736.2 327.5,721.5 327.9,713.7 328.3,726.3 328.7,721.4 329.1,723.5 329.5,729.0 329.9,722.6 330.3,716.8 330.7,709.9 331.1,706.2 331.5,712.8 331.9,726.2 332.3,735.3 332.7,740.7 333.1,735.9 333.5,722.8 333.9,716.2 334.4,712.8 334.8,711.0 335.2,717.8 335.6,718.0 336.0,712.5 336.4,712.7 336.8,715.2 337.2,712.1 337.6,705.7 338.0,708.7 338.4,730.2 338.8,722.3 339.2,719.1 339.6,724.2 340.0,715.7 340.4,707.3 340.8,702.6 341.2,703.4 341.6,708.4 342.0,709.6 342.4,704.7 342.8,699.7 343.2,700.0 343.6,709.2 344.1,741.3 344.5,713.4 344.9,713.5 345.3,732.6 345.7,747.7 346.1,734.9 346.5,719.9 346.9,712.2 347.3,715.7 347.7,721.9 348.1,713.1 348.5,706.1 348.9,702.5 349.3,704.1 349.7,714.2 350.1,737.9 350.5,744.3 350.9,726.0 351.3,719.5 351.7,717.4 352.1,714.2 352.5,715.0 352.9,721.8 353.3,735.2 353.8,735.3 354.2,729.2 354.6,726.5 355.0,717.5 355.4,719.9 355.8,714.3 356.2,707.6 356.6,708.6 357.0,712.1 357.4,712.8 357.8,718.4 358.2,733.1 358.6,720.0 359.0,705.5 359.4,703.0 359.8,709.5 360.2,728.1 360.6,754.9 361.0,759.5 361.4,723.6 361.8,711.4 362.2,707.1 362.6,705.9 363.0,708.5 363.5,715.6 363.9,719.5 364.3,711.8 364.7,713.0 365.1,711.9 365.5,709.9 365.9,719.7 366.3,735.8 366.7,759.9 367.1,718.8 367.5,712.2 367.9,712.9 368.3,721.8 368.7,746.5 369.1,721.5 369.5,735.9 369.9,729.5 370.3,731.1 370.7,737.9 371.1,721.7 371.5,738.5 371.9,726.9 372.3,718.0 372.7,714.2 373.2,711.1 373.6,713.2 374.0,723.0 374.4,732.1 374.8,728.3 375.2,736.1 375.6,726.0 376.0,709.8 376.4,707.2 376.8,713.5 377.2,729.9 377.6,732.5 378.0,725.6 378.4,725.2 378.8,737.7 379.2,743.3 379.6,748.2 380.0,731.4 380.4,718.8 380.8,719.1 381.2,742.4 381.6,745.1 382.0,716.5 382.4,705.1 382.9,702.1 383.3,704.9 383.7,716.4 384.1,737.0 384.5,741.7 384.9,718.3 385.3,707.2 385.7,704.4 386.1,709.3 386.5,719.6 386.9,725.9 387.3,731.0 387.7,732.4 388.1,734.5 388.5,727.8 388.9,722.5 389.3,731.1 389.7,724.1 390.1,718.4 390.5,723.1 390.9,739.9 391.3,730.5 391.7,714.4 392.1,711.1 392.6,720.1 393.0,736.8 393.4,714.4 393.8,705.9 394.2,706.3 394.6,714.4 395.0,718.7 395.4,717.3 395.8,721.1 396.2,730.7 396.6,756.5 397.0,733.4 397.4,736.2 397.8,745.5 398.2,741.5 398.6,735.1 399.0,756.1 399.4,735.6 399.8,723.7 400.2,719.0 400.6,732.7 401.0,739.2 401.4,731.6 401.8,738.0 402.2,726.6 402.7,731.9 403.1,716.3 403.5,707.4 403.9,706.3 404.3,708.9 404.7,711.2 405.1,710.9 405.5,709.6 405.9,706.9 406.3,707.9 406.7,713.0 407.1,714.1 407.5,713.3 407.9,721.2 408.3,722.4 408.7,710.8 409.1,710.2 409.5,714.3 409.9,715.1 410.3,718.1 410.7,722.7 411.1,717.3 411.5,715.2 411.9,718.5 412.4,722.5 412.8,726.1 413.2,734.9 413.6,724.7 414.0,722.8 414.4,722.1 414.8,718.8 415.2,726.0 415.6,738.6 416.0,737.6 416.4,737.6 416.8,734.4 417.2,735.2 417.6,728.7 418.0,721.7 418.4,725.4 418.8,735.0 419.2,727.2 419.6,717.3 420.0,714.0 420.4,714.2 420.8,706.3 421.2,702.2 421.6,711.3 422.1,720.6 422.5,711.1 422.9,711.3 423.3,709.4 423.7,709.4 424.1,721.8 424.5,737.8 424.9,726.4 425.3,750.2 425.7,725.4 426.1,716.4 426.5,718.5 426.9,729.6 427.3,717.1 427.7,716.9 428.1,719.0 428.5,712.9 428.9,716.5 429.3,724.5 429.7,720.7 430.1,716.9 430.5,713.9 430.9,715.6 431.3,734.5 431.8,723.6 432.2,724.4 432.6,740.0 433.0,722.1 433.4,723.5 433.8,731.4 434.2,730.9 434.6,729.0 435.0,733.0 435.4,725.4 435.8,720.8 436.2,723.2 436.6,724.8 437.0,725.8 437.4,732.6 437.8,728.0 438.2,724.1 438.6,720.5 439.0,717.8 439.4,725.5 439.8,745.3 440.2,729.8 440.6,728.2 441.0,730.1 441.5,724.0 441.9,710.9 442.3,705.0 442.7,705.1 443.1,709.8 443.5,716.2 443.9,721.9 444.3,727.2 444.7,729.2 445.1,752.8 445.5,733.7 445.9,724.0 446.3,720.0 446.7,712.6 447.1,712.4 447.5,722.4 447.9,731.8 448.3,726.1 448.7,730.8 449.1,729.4 449.5,724.6 449.9,733.9 450.3,735.9 450.7,728.7 451.2,726.6 451.6,725.4 452.0,736.5 452.4,721.5 452.8,731.6 453.2,741.9 453.6,741.8 454.0,724.3 454.4,714.2 454.8,709.0 455.2,711.6 455.6,722.2 456.0,723.7 456.4,731.1 456.8,731.3 457.2,722.6 457.6,724.0 458.0,744.9 458.4,761.7 458.8,732.8 459.2,727.5 459.6,761.8 460.0,722.7 460.4,721.8 460.9,754.0 461.3,724.3 461.7,720.2 462.1,720.3 462.5,719.5 462.9,724.7 463.3,731.0 463.7,743.2 464.1,748.1 464.5,743.2 464.9,733.2 465.3,727.2 465.7,725.3 466.1,723.0 466.5,718.8 466.9,717.8 467.3,727.4 467.7,732.2 468.1,731.2 468.5,720.4 468.9,713.9 469.3,715.3 469.7,718.5 470.1,718.4 470.6,723.6 471.0,739.4 471.4,762.2 471.8,750.5 472.2,740.1 472.6,742.9 473.0,743.9 473.4,733.4 473.8,726.4 474.2,720.1 474.6,716.9 475.0,720.2 475.4,725.4 475.8,716.6 476.2,710.2 476.6,712.4 477.0,727.7 477.4,720.5 477.8,719.3 478.2,727.0 478.6,731.2 479.0,731.9 479.4,742.2 479.8,736.1 480.3,722.1 480.7,720.9 481.1,726.4 481.5,722.6 481.9,715.9 482.3,714.9 482.7,717.2 483.1,721.8 483.5,726.2 483.9,730.3 484.3,731.1 484.7,734.9 485.1,730.3 485.5,725.4 485.9,725.6 486.3,723.7 486.7,720.7 487.1,718.6 487.5,721.9 487.9,731.0 488.3,721.4 488.7,716.5 489.1,718.3 489.5,725.9 490.0,730.5 490.4,733.0 490.8,732.0 491.2,728.8 491.6,725.7 492.0,726.5 492.4,731.7 492.8,734.8 493.2,737.7 493.6,745.3 494.0,760.3 494.4,748.6 494.8,728.2 495.2,717.6 495.6,714.4 496.0,716.9 496.4,725.0 496.8,730.8 497.2,728.4 497.6,719.3 498.0,715.9 498.4,717.6 498.8,725.6 499.2,736.7 499.7,722.5 500.1,721.3 500.5,728.1 500.9,732.4 501.3,734.6 501.7,744.9 502.1,735.9 502.5,724.5 502.9,723.6 503.3,730.7 503.7,753.5 504.1,731.0 504.5,730.4 504.9,732.2 505.3,722.4 505.7,721.8 506.1,723.5 506.5,725.5 506.9,733.1 507.3,724.9 507.7,716.6 508.1,718.9 508.5,738.8 508.9,734.0 509.4,732.6 509.8,737.7 510.2,726.8 510.6,728.1 511.0,742.6 511.4,734.5 511.8,724.8 512.2,724.1 512.6,729.3 513.0,725.2 513.4,720.7 513.8,722.2 514.2,729.4 514.6,728.4 515.0,728.7 515.4,730.7 515.8,725.2 516.2,722.1 516.6,722.4 517.0,719.9 517.4,722.8 517.8,736.3 518.2,731.0 518.6,729.7 519.0,735.2 519.5,733.6 519.9,726.1 520.3,726.5 520.7,736.7 521.1,727.8 521.5,727.1 521.9,737.7 522.3,735.3 522.7,731.1 523.1,729.6 523.5,741.0 523.9,730.0 524.3,724.9 524.7,738.8 525.1,733.6 525.5,721.4 525.9,718.0 526.3,721.2 526.7,730.9 527.1,739.6 527.5,742.7 527.9,763.6 528.3,740.3 528.7,733.7 529.2,724.5 529.6,719.1 530.0,718.4 530.4,720.8 530.8,725.6 531.2,733.1 531.6,740.4 532.0,745.8 532.4,736.8 532.8,731.5 533.2,731.0 533.6,729.0 534.0,725.5 534.4,727.7 534.8,736.2 535.2,737.9 535.6,743.8 536.0,727.7 536.4,717.3 536.8,714.9 537.2,720.0 537.6,729.8 538.0,734.0 538.4,750.6 538.9,728.5 539.3,722.5 539.7,722.3 540.1,727.6 540.5,739.6 540.9,732.4 541.3,727.0 541.7,731.4 542.1,751.8 542.5,743.9 542.9,729.2 543.3,725.8 543.7,734.2 544.1,735.5 544.5,723.6 544.9,720.4 545.3,724.0 545.7,735.6 546.1,738.1 546.5,730.1 546.9,726.5 547.3,725.7 547.7,728.8 548.1,732.3 548.6,729.5 549.0,726.0 549.4,724.8 549.8,729.0 550.2,729.6 550.6,720.4 551.0,718.8 551.4,724.8 551.8,738.9 552.2,740.6 552.6,758.2 553.0,731.1 553.4,726.7 553.8,730.0 554.2,735.0 554.6,729.8 555.0,725.5 555.4,727.5 555.8,736.5 556.2,744.5 556.6,732.5 557.0,728.9 557.4,737.4 557.8,745.9 558.3,736.7 558.7,734.3 559.1,734.6 559.5,737.1 559.9,752.2 560.3,742.1 560.7,735.1 561.1,734.4 561.5,735.3 561.9,742.2 562.3,755.8 562.7,741.8 563.1,746.6 563.5,746.6 563.9,731.7 564.3,728.1 564.7,729.4 565.1,731.7 565.5,732.7 565.9,733.9 566.3,734.7 566.7,732.9 567.1,732.0 567.5,735.5 568.0,735.6 568.4,737.0 568.8,744.3 569.2,745.7 569.6,739.3 570.0,735.5 570.4,735.4 570.8,745.9 571.2,747.7 571.6,738.3 572.0,738.0 572.4,738.7 572.8,737.9 573.2,737.4 573.6,734.9 574.0,731.6 574.4,731.8 574.8,746.4 575.2,736.5 575.6,728.2 576.0,728.8 576.4,734.7 576.8,738.7 577.2,744.3 577.7,743.1 578.1,734.5 578.5,731.3 578.9,731.5 579.3,732.9 579.7,736.7 580.1,766.9 580.5,734.3 580.9,731.8 581.3,738.6 581.7,743.4 582.1,742.5 582.5,746.5 582.9,738.4 583.3,731.4 583.7,732.8 584.1,739.3 584.5,748.9 584.9,757.3 585.3,740.2 585.7,736.7 586.1,743.5 586.5,745.0 586.9,736.7 587.4,736.9 587.8,747.5 588.2,760.3 588.6,735.7 589.0,735.1 589.4,739.8 589.8,752.8 590.2,785.4 590.6,816.7 591.0,783.4 591.4,796.5 591.8,778.4 592.2,787.9 592.6,782.9 593.0,765.9 593.4,816.7 593.8,765.1 594.2,768.6 594.6,768.6 595.0,768.7 595.4,773.3 595.8,763.6 596.2,760.1 596.6,762.3 597.1,759.5 597.5,754.3 597.9,757.4 598.3,773.8 598.7,760.9 599.1,750.9 599.5,745.6 599.9,743.4 600.3,742.5 600.7,742.6 601.1,742.9 601.5,740.9 601.9,739.0 602.3,737.7 602.7,736.2 603.1,737.8 603.5,739.4 603.9,730.1 604.3,728.8 604.7,729.3 605.1,731.8 605.5,732.0 605.9,730.4 606.3,725.9 606.8,717.8 607.2,710.6 607.6,707.0 608.0,705.7 608.4,706.7 608.8,709.3 609.2,710.0 609.6,706.8 610.0,701.4 610.4,698.9 610.8,681.9 611.2,698.5 611.6,696.7 612.0,697.5 612.4,695.2" fill="none" stroke="#0000ff" stroke-width="1"/></g><g clip-path="url(#ct)"><path d="M699.3,814.7 700.4,816.1 701.5,817.1 702.6,809.7 703.7,805.8 704.8,810.0 705.9,810.0 707.0,810.3 708.2,814.8 709.3,821.1 710.4,819.7 711.5,809.9 712.6,802.7 713.7,798.1 714.8,801.3 715.9,809.9 717.0,810.7 718.1,807.8 719.2,807.1 720.3,806.4 721.4,809.4 722.5,815.1 723.7,812.8 724.8,804.5 725.9,807.5 727.0,811.7 728.1,810.8 729.2,812.0 730.3,812.8 731.4,813.9 732.5,814.2 733.6,819.4 734.7,823.8 735.8,821.9 736.9,818.4 738.0,812.3 739.1,809.0 740.3,809.0 741.4,810.8 742.5,812.9 743.6,809.8 744.7,807.1 745.8,811.7 746.9,817.7 748.0,818.3 749.1,816.6 750.2,811.2 751.3,807.3 752.4,815.2 753.5,820.0 754.6,814.0 755.7,809.9 756.9,813.5 758.0,818.5 759.1,818.3 760.2,812.8 761.3,810.1 762.4,814.0 763.5,815.7 764.6,813.9 765.7,810.6 766.8,812.4 767.9,811.9 769.0,803.5 770.1,806.4 771.2,815.5 772.4,817.5 773.5,814.8 774.6,810.6 775.7,808.7 776.8,809.1 777.9,813.0 779.0,819.6 780.1,821.1 781.2,817.6 782.3,812.1 783.4,812.5 784.5,817.7 785.6,806.2 786.7,571.8 787.8,759.2 789.0,751.3 790.1,743.5 791.2,743.3 792.3,749.4 793.4,760.3 794.5,780.6 795.6,797.9 796.7,807.7 797.8,815.7 798.9,816.2 800.0,806.6 801.1,794.3 802.2,782.3 803.3,770.8 804.4,764.5 805.6,757.8 806.7,753.3 807.8,758.7 808.9,768.3 810.0,784.6 811.1,802.5 812.2,813.6 813.3,820.8 814.4,822.2 815.5,815.5 816.6,807.9 817.7,800.7 818.8,789.8 819.9,777.8 821.1,767.0 822.2,760.4 823.3,767.1 824.4,778.9 825.5,789.5 826.6,802.0 827.7,811.5 828.8,820.6 829.9,822.1 831.0,816.2 832.1,813.2 833.2,806.5 834.3,797.9 835.4,797.4 836.5,793.6 837.7,785.9 838.8,787.4 839.9,789.5 841.0,792.2 842.1,799.2 843.2,805.1 844.3,809.3 845.4,810.2 846.5,807.8 847.6,806.5 848.7,804.6 849.8,801.9 850.9,801.8 852.0,801.9 853.2,798.4 854.3,791.8 855.4,790.0 856.5,800.1 857.6,811.6 858.7,814.3 859.8,814.6 860.9,818.3 862.0,820.0 863.1,817.0 864.2,816.0 865.3,814.7 866.4,807.5 867.5,799.9 868.6,791.7 869.8,783.3 870.9,782.5 872.0,791.4 873.1,804.2 874.2,813.0 875.3,820.8 876.4,829.4 877.5,831.2 878.6,826.5 879.7,822.1 880.8,817.0 881.9,806.2 883.0,794.6 884.1,792.4 885.2,793.5 886.4,790.5 887.5,792.6 888.6,801.6 889.7,813.4 890.8,823.2 891.9,826.4 893.0,831.1 894.1,834.9 895.2,830.4 896.3,823.8 897.4,820.6 898.5,818.4 899.6,805.7 900.7,790.0 901.9,789.6 903.0,793.6 904.1,797.7 905.2,806.0 906.3,815.8 907.4,826.4 908.5,835.1 909.6,838.7 910.7,831.8 911.8,821.8 912.9,814.3 914.0,805.3 915.1,795.7 916.2,787.3 917.3,786.5 918.5,790.7 919.6,795.8 920.7,805.5 921.8,815.6 922.9,823.3 924.0,830.1 925.1,834.0 926.2,833.7 927.3,831.2 928.4,822.7 929.5,807.8 930.6,796.3 931.7,788.6 932.8,786.0 933.9,788.5 935.1,792.9 936.2,801.8 937.3,811.5 938.4,820.6 939.5,827.9 940.6,832.0 941.7,835.6 942.8,833.0 943.9,820.6 945.0,807.8 946.1,798.1 947.2,793.5 948.3,793.3 949.4,790.8 950.6,794.4 951.7,804.2 952.8,810.1 953.9,819.7 955.0,832.5 956.1,837.0 957.2,833.7 958.3,827.9 959.4,823.6 960.5,820.9 961.6,814.0 962.7,803.8 963.8,797.0 964.9,795.5 966.0,795.4 967.2,796.5 968.3,802.6 969.4,813.6 970.5,823.9 971.6,826.6 972.7,823.5 973.8,820.1 974.9,819.5 976.0,819.9 977.1,816.2 978.2,814.0 979.3,812.4 980.4,807.3 981.5,801.2 982.7,796.3 983.8,801.3 984.9,812.0 986.0,818.2 987.1,819.9 988.2,820.4 989.3,821.0 990.4,819.4 991.5,814.8 992.6,806.3 993.7,797.9 994.8,794.6 995.9,792.7 997.0,792.3 998.1,794.7 999.3,798.7 1000.4,808.2 1001.5,814.8 1002.6,816.7 1003.7,822.8 1004.8,827.8 1005.9,828.7 1007.0,825.0 1008.1,818.9 1009.2,811.0 1010.3,802.6 1011.4,802.0 1012.5,800.9 1013.6,795.4 1014.7,800.9 1015.9,813.8 1017.0,816.9 1018.1,818.3 1019.2,825.8 1020.3,829.7 1021.4,831.9 1022.5,833.0 1023.6,823.5 1024.7,807.8 1025.8,798.1 1026.9,795.9 1028.0,793.7 1029.1,791.7 1030.2,794.3 1031.4,802.0 1032.5,812.4 1033.6,819.4 1034.7,823.7 1035.8,830.9 1036.9,835.1 1038.0,829.2 1039.1,821.2 1040.2,816.4 1041.3,809.9 1042.4,801.0 1043.5,798.7 1044.6,798.1 1045.7,793.8 1046.8,796.4 1048.0,805.9 1049.1,816.7 1050.2,825.5 1051.3,830.1 1052.4,831.1 1053.5,825.6 1054.6,817.4 1055.7,811.0 1056.8,800.2 1057.9,790.6 1059.0,789.7 1060.1,788.6 1061.2,790.7 1062.3,797.6 1063.5,800.2 1064.6,808.6 1065.7,825.0 1066.8,831.8 1067.9,827.7 1069.0,827.3 1070.1,828.2 1071.2,820.3 1072.3,813.9 1073.4,810.8 1074.5,803.7 1075.6,798.2 1076.7,796.8 1077.8,799.7 1078.9,805.7 1080.1,811.8 1081.2,816.1 1082.3,817.5 1083.4,817.9 1084.5,821.1 1085.6,825.3 1086.7,823.9 1087.8,814.6 1088.9,803.1 1090.0,799.2 1091.1,801.4 1092.2,803.0 1093.3,802.9 1094.4,805.3 1095.5,811.7 1096.7,814.9 1097.8,818.0 1098.9,824.2 1100.0,829.2 1101.1,830.9 1102.2,824.5 1103.3,816.8 1104.4,809.0 1105.5,798.0 1106.6,793.8 1107.7,794.5 1108.8,793.0 1109.9,796.5 1111.0,806.8 1112.2,816.4 1113.3,824.6 1114.4,831.1 1115.5,834.9 1116.6,833.2 1117.7,826.7 1118.8,819.2 1119.9,808.6 1121.0,798.6 1122.1,792.9 1123.2,791.1 1124.3,791.6 1125.4,793.0 1126.5,795.4 1127.6,799.7 1128.8,809.9 1129.9,821.6 1131.0,823.9 1132.1,819.8 1133.2,814.9 1134.3,814.4 1135.4,815.5 1136.5,813.1 1137.6,811.7 1138.7,810.0 1139.8,809.0 1140.9,806.6 1142.0,804.7 1143.1,810.4 1144.2,814.8 1145.4,812.6 1146.5,813.6 1147.6,816.2 1148.7,813.8 1149.8,815.6 1150.9,817.0 1152.0,811.1 1153.1,802.4 1154.2,796.4 1155.3,800.5 1156.4,807.6 1157.5,810.9 1158.6,812.0 1159.7,810.1 1160.9,812.0 1162.0,816.3 1163.1,820.5 1164.2,826.2 1165.3,826.4 1166.4,821.8 1167.5,817.8 1168.6,810.1 1169.7,800.5 1170.8,796.9 1171.9,793.8 1173.0,789.7 1174.1,792.7 1175.2,807.2 1176.3,824.4 1177.5,831.3 1178.6,833.7 1179.7,836.2 1180.8,834.0 1181.9,825.5 1183.0,814.7 1184.1,808.7 1185.2,806.2 1186.3,801.0 1187.4,797.7 1188.5,799.5 1189.6,801.9 1190.7,809.0 1191.8,817.1 1193.0,822.0 1194.1,825.0 1195.2,827.0 1196.3,831.0 1197.4,825.8 1198.5,812.0 1199.6,810.4 1200.7,810.2 1201.8,802.4 1202.9,798.3 1204.0,793.2 1205.1,792.6 1206.2,801.6 1207.3,812.2 1208.4,818.1 1209.6,819.3 1210.7,820.1 1211.8,819.4 1212.9,821.4 1214.0,822.7 1215.1,816.4 1216.2,809.1 1217.3,804.4 1218.4,802.0 1219.5,799.3 1220.6,797.7 1221.7,802.7 1222.8,812.0 1223.9,820.0 1225.0,820.5 1226.2,820.1 1227.3,825.0 1228.4,828.7 1229.5,824.8 1230.6,813.4 1231.7,805.3 1232.8,800.9 1233.9,792.6 1235.0,788.2 1236.1,791.0 1237.2,796.0 1238.3,803.2 1239.4,813.9 1240.5,826.2 1241.7,831.7 1242.8,835.7 1243.9,839.3 1245.0,833.7 1246.1,820.9 1247.2,807.9 1248.3,800.3 1249.4,795.0 1250.5,787.4 1251.6,784.9 1252.7,791.1 1253.8,798.9 1254.9,812.3 1256.0,826.4 1257.1,832.8 1258.3,834.8 1259.4,834.3 1260.5,832.2 1261.6,821.7 1262.7,806.9 1263.8,800.1 1264.9,796.8" fill="none" stroke="#0000ff" stroke-width="1"/><path d="M699.3,805.0 700.4,811.7 701.5,811.9 702.6,810.6 703.7,812.4 704.8,812.6 705.9,807.8 707.0,800.8 708.2,800.6 709.3,803.8 710.4,808.0 711.5,820.0 712.6,823.5 713.7,806.9 714.8,796.7 715.9,804.2 717.0,811.3 718.1,808.0 719.2,806.6 720.3,812.0 721.4,810.6 722.5,809.0 723.7,808.1 724.8,800.4 725.9,797.2 727.0,802.6 728.1,810.3 729.2,807.6 730.3,801.0 731.4,801.1 732.5,807.0 733.6,815.5 734.7,818.9 735.8,820.2 736.9,815.9 738.0,809.7 739.1,812.4 740.3,815.1 741.4,809.7 742.5,806.2 743.6,806.7 744.7,803.5 745.8,799.6 746.9,802.1 748.0,807.2 749.1,809.5 750.2,811.6 751.3,809.1 752.4,805.2 753.5,808.7 754.6,813.4 755.7,812.3 756.9,804.9 758.0,798.9 759.1,802.2 760.2,806.7 761.3,804.3 762.4,800.1 763.5,802.3 764.6,808.0 765.7,809.2 766.8,811.3 767.9,810.2 769.0,803.9 770.1,804.1 771.2,804.9 772.4,802.9 773.5,807.8 774.6,811.3 775.7,809.7 776.8,813.9 777.9,816.8 779.0,814.0 780.1,809.3 781.2,806.7 782.3,813.5 783.4,820.2 784.5,815.8 785.6,868.0 786.7,655.8 787.8,827.0 789.0,819.5 790.1,803.3 791.2,783.7 792.3,770.8 793.4,765.8 794.5,765.0 795.6,766.8 796.7,774.0 797.8,790.0 798.9,808.0 800.0,823.7 801.1,834.2 802.2,835.0 803.3,831.1 804.4,823.7 805.6,810.4 806.7,796.4 807.8,779.9 808.9,763.7 810.0,759.9 811.1,768.4 812.2,779.9 813.3,791.2 814.4,806.4 815.5,824.4 816.6,833.8 817.7,836.4 818.8,837.6 819.9,830.2 821.1,818.1 822.2,810.1 823.3,800.1 824.4,789.8 825.5,785.5 826.6,784.0 827.7,785.0 828.8,790.1 829.9,800.7 831.0,815.5 832.1,825.3 833.2,828.6 834.3,824.1 835.4,818.9 836.5,816.1 837.7,810.7 838.8,808.2 839.9,805.2 841.0,797.3 842.1,793.7 843.2,796.2 844.3,800.7 845.4,807.0 846.5,816.7 847.6,824.4 848.7,825.0 849.8,822.4 850.9,820.3 852.0,815.6 853.2,807.0 854.3,804.2 855.4,803.7 856.5,799.5 857.6,795.8 858.7,794.8 859.8,796.9 860.9,802.0 862.0,810.9 863.1,817.7 864.2,823.1 865.3,828.6 866.4,828.2 867.5,825.6 868.6,822.9 869.8,814.1 870.9,803.0 872.0,793.7 873.1,783.2 874.2,781.5 875.3,789.4 876.4,795.6 877.5,801.6 878.6,811.6 879.7,821.0 880.8,826.1 881.9,829.0 883.0,824.9 884.1,815.7 885.2,810.3 886.4,804.6 887.5,794.2 888.6,785.9 889.7,785.4 890.8,787.6 891.9,791.9 893.0,797.4 894.1,803.8 895.2,814.8 896.3,825.0 897.4,831.0 898.5,827.6 899.6,817.2 900.7,807.7 901.9,799.9 903.0,793.0 904.1,785.9 905.2,784.1 906.3,785.0 907.4,786.3 908.5,795.2 909.6,804.5 910.7,810.1 911.8,813.6 912.9,816.3 914.0,819.5 915.1,817.5 916.2,812.6 917.3,803.6 918.5,791.2 919.6,784.6 920.7,783.2 921.8,782.2 922.9,781.3 924.0,786.8 925.1,800.0 926.2,810.1 927.3,816.9 928.4,824.8 929.5,827.4 930.6,824.4 931.7,816.8 932.8,808.4 933.9,806.9 935.1,799.1 936.2,783.7 937.3,776.4 938.4,779.9 939.5,789.1 940.6,798.3 941.7,808.9 942.8,820.5 943.9,828.4 945.0,829.3 946.1,823.4 947.2,818.3 948.3,813.5 949.4,804.7 950.6,794.8 951.7,786.0 952.8,781.0 953.9,782.7 955.0,787.6 956.1,794.0 957.2,803.7 958.3,813.0 959.4,819.9 960.5,825.8 961.6,827.7 962.7,820.2 963.8,810.9 964.9,807.3 966.0,802.2 967.2,794.7 968.3,787.7 969.4,784.4 970.5,787.3 971.6,790.9 972.7,796.0 973.8,803.3 974.9,809.8 976.0,814.5 977.1,814.7 978.2,816.0 979.3,817.4 980.4,807.5 981.5,797.1 982.7,794.3 983.8,789.1 984.9,787.4 986.0,792.1 987.1,796.0 988.2,801.4 989.3,806.6 990.4,811.5 991.5,819.1 992.6,824.0 993.7,822.7 994.8,817.6 995.9,810.6 997.0,804.9 998.1,797.9 999.3,791.4 1000.4,791.9 1001.5,790.9 1002.6,789.0 1003.7,793.2 1004.8,801.9 1005.9,811.3 1007.0,816.9 1008.1,822.4 1009.2,823.2 1010.3,817.6 1011.4,813.0 1012.5,807.9 1013.6,800.9 1014.7,792.4 1015.9,788.8 1017.0,792.8 1018.1,799.8 1019.2,806.0 1020.3,807.5 1021.4,811.1 1022.5,816.4 1023.6,818.3 1024.7,820.1 1025.8,820.5 1026.9,819.3 1028.0,813.9 1029.1,801.1 1030.2,788.0 1031.4,781.6 1032.5,784.0 1033.6,789.8 1034.7,793.0 1035.8,799.5 1036.9,810.5 1038.0,819.5 1039.1,826.4 1040.2,831.3 1041.3,829.7 1042.4,820.7 1043.5,808.5 1044.6,798.3 1045.7,791.2 1046.8,787.1 1048.0,784.4 1049.1,778.8 1050.2,780.1 1051.3,791.8 1052.4,803.9 1053.5,815.0 1054.6,822.7 1055.7,829.4 1056.8,835.2 1057.9,831.9 1059.0,821.1 1060.1,806.1 1061.2,791.9 1062.3,784.9 1063.5,781.6 1064.6,781.9 1065.7,785.2 1066.8,788.6 1067.9,795.8 1069.0,805.4 1070.1,816.5 1071.2,824.0 1072.3,823.3 1073.4,822.1 1074.5,814.1 1075.6,799.1 1076.7,794.3 1077.8,793.7 1078.9,787.7 1080.1,785.1 1081.2,790.0 1082.3,794.8 1083.4,796.2 1084.5,800.3 1085.6,810.1 1086.7,818.8 1087.8,815.5 1088.9,811.8 1090.0,815.4 1091.1,813.9 1092.2,807.3 1093.3,799.9 1094.4,789.4 1095.5,782.3 1096.7,783.0 1097.8,787.5 1098.9,795.6 1100.0,802.9 1101.1,810.8 1102.2,818.5 1103.3,819.2 1104.4,817.1 1105.5,815.3 1106.6,811.0 1107.7,803.8 1108.8,794.9 1109.9,786.1 1111.0,781.1 1112.2,782.7 1113.3,787.9 1114.4,794.3 1115.5,801.2 1116.6,809.8 1117.7,819.0 1118.8,823.3 1119.9,822.2 1121.0,818.4 1122.1,812.4 1123.2,804.1 1124.3,796.8 1125.4,792.5 1126.5,788.9 1127.6,786.6 1128.8,789.6 1129.9,796.5 1131.0,805.2 1132.1,810.2 1133.2,807.2 1134.3,807.8 1135.4,815.3 1136.5,816.4 1137.6,808.2 1138.7,802.2 1139.8,802.9 1140.9,800.9 1142.0,794.6 1143.1,792.1 1144.2,791.5 1145.4,792.9 1146.5,799.0 1147.6,799.9 1148.7,797.1 1149.8,796.7 1150.9,802.5 1152.0,814.9 1153.1,815.8 1154.2,806.1 1155.3,803.8 1156.4,806.7 1157.5,806.6 1158.6,802.2 1159.7,799.5 1160.9,801.5 1162.0,803.3 1163.1,810.0 1164.2,817.3 1165.3,812.6 1166.4,809.7 1167.5,814.6 1168.6,815.7 1169.7,813.6 1170.8,812.1 1171.9,807.2 1173.0,799.8 1174.1,794.9 1175.2,789.4 1176.3,785.7 1177.5,790.7 1178.6,800.2 1179.7,810.0 1180.8,817.4 1181.9,822.8 1183.0,823.1 1184.1,815.6 1185.2,812.2 1186.3,808.0 1187.4,799.5 1188.5,794.0 1189.6,788.7 1190.7,787.3 1191.8,789.4 1193.0,794.0 1194.1,801.0 1195.2,806.0 1196.3,810.3 1197.4,812.0 1198.5,811.2 1199.6,817.9 1200.7,824.1 1201.8,817.7 1202.9,807.3 1204.0,799.1 1205.1,796.1 1206.2,796.7 1207.3,796.0 1208.4,797.0 1209.6,799.5 1210.7,801.1 1211.8,801.8 1212.9,803.3 1214.0,808.4 1215.1,815.5 1216.2,816.9 1217.3,813.5 1218.4,810.6 1219.5,804.7 1220.6,793.0 1221.7,784.1 1222.8,782.8 1223.9,786.8 1225.0,792.0 1226.2,791.1 1227.3,795.5 1228.4,810.5 1229.5,820.6 1230.6,825.6 1231.7,828.2 1232.8,825.3 1233.9,816.2 1235.0,802.0 1236.1,793.1 1237.2,791.6 1238.3,786.8 1239.4,779.8 1240.5,784.0 1241.7,793.2 1242.8,802.3 1243.9,813.2 1245.0,816.7 1246.1,819.0 1247.2,821.8 1248.3,815.4 1249.4,808.9 1250.5,807.6 1251.6,800.5 1252.7,788.6 1253.8,784.4 1254.9,792.3 1256.0,802.1 1257.1,801.3 1258.3,799.6 1259.4,809.1 1260.5,818.1 1261.6,822.9 1262.7,823.2 1263.8,819.0 1264.9,818.3" fill="none" stroke="#ff0000" stroke-width="1"/></g><text x="53.1" y="444.0" font-size="12" text-anchor="middle" fill="#262626" >-2</text><text x="123.4" y="444.0" font-size="12" text-anchor="middle" fill="#262626" >-1.5</text><text x="193.6" y="444.0" font-size="12" text-anchor="middle" fill="#262626" >-1</text><text x="263.9" y="444.0" font-size="12" text-anchor="middle" fill="#262626" >-0.5</text><text x="334.1" y="444.0" font-size="12" text-anchor="middle" fill="#262626" >0</text><text x="404.4" y="444.0" font-size="12" text-anchor="middle" fill="#262626" >0.5</text><text x="474.6" y="444.0" font-size="12" text-anchor="middle" fill="#262626" >1</text><text x="544.9" y="444.0" font-size="12" text-anchor="middle" fill="#262626" >1.5</text><text x="41.0" y="431.2" font-size="12" text-anchor="end" fill="#262626" >0</text><text x="41.0" y="377.9" font-size="12" text-anchor="end" fill="#262626" >10</text><text x="41.0" y="324.6" font-size="12" text-anchor="end" fill="#262626" >20</text><text x="41.0" y="271.3" font-size="12" text-anchor="end" fill="#262626" >30</text><text x="41.0" y="218.1" font-size="12" text-anchor="end" fill="#262626" >40</text><text x="41.0" y="164.8" font-size="12" text-anchor="end" fill="#262626" >50</text><text x="41.0" y="111.5" font-size="12" text-anchor="end" fill="#262626" >60</text><text x="41.0" y="58.2" font-size="12" text-anchor="end" fill="#262626" >70</text><text x="739.5" y="444.0" font-size="12" text-anchor="middle" fill="#262626" >-60</text><text x="820.1" y="444.0" font-size="12" text-anchor="middle" fill="#262626" >-40</text><text x="900.8" y="444.0" font-size="12" text-anchor="middle" fill="#262626" >-20</text><text x="981.4" y="444.0" font-size="12" text-anchor="middle" fill="#262626" >0</text><text x="1062.0" y="444.0" font-size="12" text-anchor="middle" fill="#262626" >20</text><text x="1142.7" y="444.0" font-size="12" text-anchor="middle" fill="#262626" >40</text><text x="1223.3" y="444.0" font-size="12" text-anchor="middle" fill="#262626" >60</text><text x="693.0" y="425.9" font-size="12" text-anchor="end" fill="#262626" >0</text><text x="693.0" y="373.4" font-size="12" text-anchor="end" fill="#262626" >10</text><text x="693.0" y="320.9" font-size="12" text-anchor="end" fill="#262626" >20</text><text x="693.0" y="268.3" font-size="12" text-anchor="end" fill="#262626" >30</text><text x="693.0" y="215.8" font-size="12" text-anchor="end" fill="#262626" >40</text><text x="693.0" y="163.3" font-size="12" text-anchor="end" fill="#262626" >50</text><text x="693.0" y="110.7" font-size="12" text-anchor="end" fill="#262626" >60</text><text x="693.0" y="58.2" font-size="12" text-anchor="end" fill="#262626" >70</text><text x="47.0" y="921.0" font-size="12" text-anchor="middle" fill="#262626" >0</text><text x="127.6" y="921.0" font-size="12" text-anchor="middle" fill="#262626" >10</text><text x="208.2" y="921.0" font-size="12" text-anchor="middle" fill="#262626" >20</text><text x="288.8" y="921.0" font-size="12" text-anchor="middle" fill="#262626" >30</text><text x="369.4" y="921.0" font-size="12" text-anchor="middle" fill="#262626" >40</text><text x="450.0" y="921.0" font-size="12" text-anchor="middle" fill="#262626" >50</text><text x="530.6" y="921.0" font-size="12" text-anchor="middle" fill="#262626" >60</text><text x="611.2" y="921.0" font-size="12" text-anchor="middle" fill="#262626" >70</text><text x="41.0" y="535.0" font-size="12" text-anchor="end" fill="#262626" >0</text><text x="41.0" y="592.4" font-size="12" text-anchor="end" fill="#262626" >-20</text><text x="41.0" y="649.8" font-size="12" text-anchor="end" fill="#262626" >-40</text><text x="41.0" y="707.2" font-size="12" text-anchor="end" fill="#262626" >-60</text><text x="41.0" y="764.5" font-size="12" text-anchor="end" fill="#262626" >-80</text><text x="41.0" y="821.9" font-size="12" text-anchor="end" fill="#262626" >-100</text><text x="41.0" y="879.3" font-size="12" text-anchor="end" fill="#262626" >-120</text><text x="699.3" y="921.0" font-size="12" text-anchor="middle" fill="#262626" >0</text><text x="790.5" y="921.0" font-size="12" text-anchor="middle" fill="#262626" >0.5</text><text x="881.8" y="921.0" font-size="12" text-anchor="middle" fill="#262626" >1</text><text x="973.0" y="921.0" font-size="12" text-anchor="middle" fill="#262626" >1.5</text><text x="1064.2" y="921.0" font-size="12" text-anchor="middle" fill="#262626" >2</text><text x="1155.4" y="921.0" font-size="12" text-anchor="middle" fill="#262626" >2.5</text><text x="1246.6" y="921.0" font-size="12" text-anchor="middle" fill="#262626" >3</text><text x="693.0" y="908.2" font-size="12" text-anchor="end" fill="#262626" >-4000</text><text x="693.0" y="861.5" font-size="12" text-anchor="end" fill="#262626" >-2000</text><text x="693.0" y="814.9" font-size="12" text-anchor="end" fill="#262626" >0</text><text x="693.0" y="768.2" font-size="12" text-anchor="end" fill="#262626" >2000</text><text x="693.0" y="721.6" font-size="12" text-anchor="end" fill="#262626" >4000</text><text x="693.0" y="675.0" font-size="12" text-anchor="end" fill="#262626" >6000</text><text x="693.0" y="628.3" font-size="12" text-anchor="end" fill="#262626" >8000</text><text x="693.0" y="581.6" font-size="12" text-anchor="end" fill="#262626" >10000</text><text x="693.0" y="535.0" font-size="12" text-anchor="end" fill="#262626" >12000</text><text x="330.0" y="462.0" font-size="13.2" text-anchor="middle" fill="#262626" >Velocity - meters/sec</text><text x="981.0" y="462.0" font-size="13.2" text-anchor="middle" fill="#262626" >meters</text><text x="329.0" y="939.0" font-size="13.2" text-anchor="middle" fill="#262626" >Distance (meters)</text><text x="932.3" y="938.3" font-size="12.3" text-anchor="start" fill="#262626" >time&#160; (seconds)</text><path d="M1018.5 934.5H1028.5M1025 931.5L1028.5 934.5L1025 937.5" stroke="#555" stroke-width="1" fill="none"/><text x="21.0" y="240.0" font-size="13.2" text-anchor="middle" fill="#262626" transform="rotate(-90 21 240)">Distance - meters</text><text x="673.0" y="240.0" font-size="13.2" text-anchor="middle" fill="#262626" transform="rotate(-90 673 240)">meters</text><text x="11.0" y="716.0" font-size="13.2" text-anchor="middle" fill="#262626" transform="rotate(-90 11 716)">FFT Output (dBFS)</text><text x="653.0" y="716.0" font-size="13.2" text-anchor="middle" fill="#262626" transform="rotate(-90 653 716)">codes</text><text x="1232.0" y="941.0" font-size="12" text-anchor="start" fill="#262626" font-size="11">&#215;</text><text x="1242.0" y="941.0" font-size="12" text-anchor="start" fill="#262626" >10</text><text x="1255.5" y="935.0" font-size="9.5" text-anchor="start" fill="#262626" >-5</text><rect x="1170.5" y="542.5" width="81" height="37" fill="#fff" stroke="#262626" stroke-width="1"/><path d="M1178 554.5H1219" stroke="#0000ff" stroke-width="1"/><path d="M1178 569.5H1219" stroke="#ff0000" stroke-width="1"/><text x="1223.0" y="558.5" font-size="12" text-anchor="start" fill="#262626" >real</text><text x="1223.0" y="574.0" font-size="12" text-anchor="start" fill="#262626" >imag</text></svg>
<script>
(function(){var s="POQQQOPORPNOONRXRNNPQQPOPQQPWVPntnPPNONQONPOOOQTPPPPMOQQROOSPNNQQQQQTQMPPRQSTTYTRQPORRPOOPQbXPnsnOQRSRRPOQQRPPPRQQPPQPPPPPRPPQQQQRRPPPQMPPQPSaUPRQRQPQQRQRYVOmpmORQOPOPOOQQNQRMRQQQOQPOOOPQOONOPNNONNPQONNLPWVPOOLOQOONMQYVNlolPMONMNMONOMOLMQOOOQOOPNNMNNMNOOOMMNNOMOMMLOPXTMNNLMMNONNNWTMjnjMLNOOMLLNMNOMLMNNMNKKMKKLLMMNOLMLKKJMLNLJNPNWOMKNLJNOLOMMVTJimiNMKNLLNMMNNNLKMKLKLKMKLMNJLLMMLLLNLKKKNMNNJNVSPNNMKKNMLMMVTKglgNKLLLLMKLLMKNLKNNKKKKKMLKKMMLKLNLLNLKLJKLLKMUQKLNLMMLKMLMTSLekdJKLKJKKKJJLJJJKKKIIJLKKKKKJLKKNMMKJLMKLKKLKMTPKLKKLLJNLKMUQJcjcKKLKKJMMMKKJLJIKKKKLKLKLKJKMKJKKJJLMKJJKLKJMSOKKJKKKKKJLKOOIbhbJHJJKJJJJJIJIIJLJJJJJJJHIHIIILMMMMJJLLMLJOOOURMMLJMMMLJNNUPMbgbKLLLJJKJKLLLMLLKJLKKNLLLLKKLKKKLLMLLKKMLKMKLQOJJJLKLMKLJMSPJafaKJKJIJJJJJJKLKVUJJJJKKKKJIIMKMKKNJKMLLLNJKKNUQKJLNNLJJLLLSRKafaLKKKKKJLKKKKKKKJMJJKJKLLKNJKLKKNLLMKLLLKJJKNTOJLKKKKKKKKLSPJaeaJJJJJKLKKJKJKKJJKMKIJJKJKLLLJKKKMMKKKKKLKLKMTOKKMKLJKKJKNSPJbeaLIKILLLKKKMLKIJKKJKJJKJKJJJKJJKKNKKKJIKLKLKMUPKKLKLMMLNMNSQJaeaMKKKKKJKLJJKJKKLLJJJLKKMLKLKKKKKLKLLLLMNMKLNUPKKNMLKLLMLLSSJafaKJIJKKJKLLLKKJLKLLLKJJKKKLKKJJLLKJKLKJLJKJKKUQMMKIKMMKJKKQPLbfaJLKKKJJKKJJJKKKLLLLJLLLJKLKJKKMLLMLNLLLNMJKLVRKLKMLKMLKKLSRLafaMKJKKNMLLJKKMLILJLKKLLJKLLLKMNNMMLMOONMNOOOOXQMLOMNPPMMMNWTLaebMMKLMKLNMMLMMONONLLOMMMMLMOMMOOOMMLMPNNMMLMOWRNMMLLMLMLLPUSKbfaMNMMNLNNMLNLLNNLMKMLMMLMMLMMONMLNMOMPMOOLMOPVTONMONNNONLRVTNafaPOOONONMOKMNMMOONNNNNOMNOMMONPQORPQOQSQQPRQRZTPPPQQOQQRPOWXPbebPPPPOOPPQPPOQNNPQOQOOPRPOQQQPQQRRPRPQNNQOPPSXROQSNOOOONPRWWPafbPQOPOOOPQNOQSPROPPPONORRQQPQPOQNOPQNOONOOPNQVTPONQPPONQRQXVPafaOOOOPOQPOMOPQQQONPOOOOPPQPPPOPPOPPRQNPROOPOQVQOOMPQOPQQSSYXQafaTRTTQQPQPOQRRQNOQQQTSQRRQOQPQPSQQQRRRRQPPPQUWSPQQRQOPMQRPWURbfaNNQSOOPOOQSRQRQOPTRRPQQRRRSRPQMQTSRQRPQOPRQPXTOQPQROMQQQOWVOafaROQPPQQQPOQPRRPOPRPOPQQPQQQQPQOPQNOOPOPQPQNQSRQRQPRQOOQPQWTOafbQONNPQOQPQQOQNNPRPNQOOQPPQQRPQPORQQOQRPRPPORVTPPRQRRQSOQRXVQafaRQRRRSQPPQRRRQPPPRPPQPQPQPQRPTRSQRSRSTRRTSSUVTRRRQRSRSSUTZWSbfbUQTQRSSRRPRQQRRRQPTOSQQRRRSQSQSQPQRPQRPPQONPSSQQPRSPQOOQQZVQbfbQSQOMPQPPRQQQPRPQOOPQQSSQQQRTQQQRRQOOQPOQPROSRQQROPPQOSQRYXRbfaOPRQPNPQPOPSPOPQPNPPQOQPNRRRPSSSRQQRPSSQPQQQUTPQSRRPQSQSSaVPafaRQQOPQSRRPQRQPQSPRRSSSRTRQQSTSRSRQSRROQPRQQOSRRTQSTRSSQQQaWPbfbRPRRQPQPQTQRSQRQZWSRRPRSQPSQQSQROOPRRQQSSRRQQRPRPTORSOQPPWVPafaSQPQSQPPPOQQSSPQRQQPQQRSPPPSRRQQQRRTQQQQRTSOTTPQRPSTSQRSRZVQafbPQQRPRPSQRSQRQRQRSRQRTUQOQPQSPQQQOSSQRRSQRSRUTQSRRSRPRQRQZZRbfbRPRQRRQUSRRQSSRSSPQRUVRRSSQQPOPQROOQNRRNQPSRRRQQQPRRSQQQTYVTbfaTPSPROPQQPRRQQQRPPOQPRRQRRPRURRPRPQQPRQQQPQQRSOQORQQQSQPTYVRafaOQROQPQRPPROOOQRPRQQRSQQRQPNQPRSTQONPQQRORTQTQRPRQPQOQSQQYWObeaRPRRPPPRRQQPQPPQPRPRQRRSSPTSQPSQQSSRQRSROPOPSRRRSQOQMMRRQYURafaQQPQOPPQTQOPORSQPQTSTTPRRSUSRTQRPTRSTRQQPRURRTSTRSTTSRRQSXVQafbQTQQRRPQQRQSPRSQRQQSTSQQRSSRTOONRNPQOOPQOQRQSRPOPQPRPQOPQUTQafaONPPQOQPMPPOPPQSQQOOQPQOORPQQRPNOOONPQQPPRQORRQPROQQPPQQQSRPbfbQONOPPQPOQSRQRPQPPOPRQPQQQSRQQRPOOPQRNOPQPOQRSPRSPOPPNOOQURRafbSRRRQNOQQRQQQPQPQRRQQQQPQOQQOONPNNPPRNNPONONQPOOOOPOPNNPPSRPbfbOOPNPONPOQPQOOQPPONNNPPOQPQQPQPRPNROPRQPRQRQRRRSQRPQPSRRORTSafaRQRPQRSSRRRQURSQSSQQQSQQRQOOPQORRRPRRPOTSRSTUSRSQPPNRQQQRTSQbfbOQRRRSRQORRRRPQQQPPQPPSQRTSRRQQPRQQOQPQPQQOMRTQQQQOOPQQRRQTQafaPPPQPRNQPQPONPOQRPPQQQQRQSQSRRSRSQRQQTROQQTRRTRSRTSPQQQSRSVTbfaSTRTSRQRQSRRQQQRRRSTSTRSQRPQRPPSSSQNRQQQQRSQRSQQSRSRPRPPPSURbfaRRQPQPRRRRQQQPSRRSSPSPQQSRRRQRSSRQOQRQORSSQRSSSRQQRQQQQRRTRQbfbQPQPQRRRTRQQRQPQQOOROQQSRQSRTSQSRPRQRSRRPPPPQTRSPPQQQQQSTTSRbfbOPSOSTQPQOPRPPQROQPPQQSRSRSSQQPSRQSSQRTRQQRSSURSTRQPQRSRQUURbfbPPROPRRSPPRQRTRSRSRTSQQRSQRRQONPPQQQMPRRPNRRSPPPQPPNPPQSRQSQbfaPPQOQOMOPONQOOPQQQPPPOOPPSPPRSTTSSSSQQRTRQQRTTSSPQOORRQQRSSRbfbRPQSSPPRPQQPQRQQQPQQSSSRPQPRRQQRSQRQPQQQRRQPSPPPRTQRPORQRRRQafbQSSOQQRRPRPPPSUTRRTRPPQQRQSSQQPOQPPONRPOPNNPQQPPPOOPPPRQQRPPbfbPPNOPPQPQQPRQPPQPPPOOOQPOPOOOQPPQQPPRPRPORSQTSSRQRPRQSQPRTSRafbPRSQRPSQRPQRSQRRQRSQRPOQQRRRQRPPRNRRPRQQNPQQRQNQQQPPQSPSRRQPbfbPPQQRQQRPPPPPQPSSQQSRQPPQQPRQQQQSRRSRQSQPSPSSRRRSRQQQQOPQRRPbfbQRQQRTRRUQRRPQSQRSQRQQRSSRSRRSROPOPQQQRRSQQPPQQOPQPPPQTRRTSRbfbPPRQQQRPPNQRQROPPQPOPRPRPPQOOQRRSQOQQQRQSPORSRPRRPQQSTRSRSRPbfaRSOPRQPQQQPQRQRPQSRQPPQRSRSOPPQOSSPRSTSQRRRQRTRSTRSOPOQQSSTTafbPRQQSQQRPQQQQQOQQQQQRRPPPPQRQRPPQRPQOOSQOPPQSQQOQNPPQQMPQRTPbfbQPOQRQNQRQOPRPOPPQQQPRQPQQRQQPRQRQQPPSPRPSQQSTSRPRRRSSQUVSVTbfbSRPRRQPQPSPRQQRORQQRRRQSSQTRQPONPQQQPQPQTQORUQPQQRTQPRRRURRQbfaRROPPQPRQPQPPPRQQQQQQQPQQRQRSSQPPQQRQPQSSPQRTSQRQSQQSSQRSSSSbfbQQRRQPORRQQQORSSSPQQRQQRUQORQSQQQQPPPPQPPQRQRQRNOOQQRQOOPRRObgbQOOQPOOQQPQQPPQOOQSSQPPPQRQRRSQRQRRTSSRQRSPRRRPOSTRSRQQTUTSQbgbSRQQRQSSRQQQPRSSQPSTSTQPRRSTRSQSRURQTQQPSQRRRPTRPPRPSPRTTSTSbfbRQPQSRSRROPRSRSPRQQRRSRROQRTQQQPQRQQQPQORPRQTRSSORPRPPRPQRSObfbQQSRNPRQTRQSROSRRRRSRSPQSSQROORRSOORQQPPQRSPSTRRRTSRQPQNSUTSbgbQQRRRSRRSQRSQQRORSSSTQRRRQROPTRRQRRRTTRQRSTSSSPRRQQSSSSSSSTPbgbTSSRQSSRRPQSRRRRRSRPRTRSQQSRQQRQRSURUSQRTSSSUTRSURSQQRTRTUUSbgbSQRQRSTSQSTUSRSTSSSQQRSQRRSSTPPOOPNPOQQPPRPQTQOPQPOOOOONRSRPbfbPPQPQQPQOPQOQPQRQPNQPOPSQRPOQPOQQRQRSRSTRPQSTSPSSRRQUQRSUSRQbgbPQQQRRPSRRQRRRPRRSRSRQSSRUOSSSQRSSPORSRQQPRRRSSRPPRPPSQPSVUPbgbRRORSRRSSUQPPPRSRQSSRPQQRRPQSQOOQQQRRQSPRPQPSSPRPQPRRQRQSSQPbgbPRRRRQSRSQQRQQQQQPRRQPPROPPRPQPQOQQQRPSPPQTQQPORPOORRRQOQQRRbfbPPPNPPMOQRQPPPRQPTQPTPOPQPRQSRQRQRRURPSQTSURRTRRRQOOTTSSTTTTbgbORQORSSQRRRRSSRUSSSRQTQQTSRRRMOOQQPPNNRQPPRRRSQRQQOQPPMNQQSQbgbPONMSPQOPQRQOPQPPOPPQNPQQPQPQSPQQTSTTQPPQMPRQSRUTPQQPQSTUVTQbgbRRSVRRSTRQRRRSRPPRTRSQQPRQQQSRTRQRQRQSQQRTSPVSPSRTOTRRRRUTTQbgbSRRTTRRUQRRTSQQRRSSQQRRRRTPRTRQNPOPPPRPOPPPQTPPPPNPPNPQRSRQPbgcSPONPPPQPNOPORQPQPPONRQOQRQPQRSTPPOPSQRRROORSQPPOQNOPQRQSSSQbfbPOONRQPQMOQRQQRRSTQRQQRQNSPRPPRPRONNPQRQQRRQRRQONNOPONQNQTTRbgbPQQOONPOPPQQNOPOONRQOOPPOOPQQTRSSRRQPQSPPSSQSTPQPQRTRQPPTTTRbgbSQSRSQRQSPPPPPQSQSSQPROQRQQQSRTQSSTTSRQSSSTRVSRRSQRUURPQVWWTcgbRRRRQSTSOQRTQRRSTSSSTTSPRSSQQSSSSSSRQSQRRRTQRSPPRQRRRRSRVTTRbgbRUUQSQQSSTTSQSSSRSUTSSTPQTSSROPPNQRQQPQOSOOPQOPPMOPOQOQPRQTNcgbQOPQOQPNOOQQQPPPOPQOONPPOPPOOQQRRQQQQROPPOQQQTRQRQSQSPRRRRSSbgcPQOPRQPOQQQPQQPQPOPRRPQQRQOQORQSSSRRSQSRPQOQTTRRRRQPRQRUVVUQbgbSQPTUTQSRRRSQRRSRRSRRRQRPPQPRRSSSTRRRQTSUQSRURRORSSTTUQRTUTPcgbTRRRSQQQRRRSSSWTTSRRSQRRRSSPPPQQSQQORPPPRRSPSSSRRSTSSRRPRSQRcgcRPTPRQQQQPPQRQQSPQQQSQPRPPRRORRNRQQORPPPOPOQTSOQPQQQQPRPRTRObgcRQQPQSQPQSOQQQQPRSQQPQPQPRRRPQORSQSSTRPOQTTRRRQRRQTRSSRRRSTRcfcRUTQQRPRQQQSQSRTSQRQPQQQQRQQRPRQRQRRRRSRQQRSUSOPQSRQPQRSSSSPcgcSSPRQOOQRPOPRRUQTSPQQQRQNQPPRQRPPRQRRQRQTSPPRSPRPQSTPRPTUURScgcQPQQPPRPPORQPPRSOQSRSTQQRSQQQPPNPPQQRSQQQRPRSRPQRPQRPPOQSUSPbgcPRQRQQNPPSQPPPQSQSQQQQPQPORPORPRRTOQSQTRQPRTTTQNRTRTQROQTTRSbgcRQRSRRSQOSRQRQRTRPQRTQPQOTRRRQPRQPNSRRPRQRQPSQQRRRQSSQPRRTVRcgbRQPPSSRQRRRRRRRTTSSRPQRTQQPQQSRNQQOQRQQRQQPQPTTSPQQRPOQQUVTRchcQTQQPSQPRSSQRQQPRTSPSQQRQRPOPSRRPQRRRSRQQOQRTRPPPRROOQQSRTSRchcTNNRRORSSPONRRSQRRQQQQQQQRRQOPPOQOOOPPQPPOPORUSOQQPOOPPQSTQPchcQQQOPPOOPROPNPTRPORPPNOPOQOPPRRRPOOQPQSQOPQSRRQRPOQPQQQUUTUQchcRQSRRRRRQPQRQQRRQQRQRQQOPQQRPQRQTQPQSQQRTRRQURQPPSUSTSSQTVTRchcRUQQRQQQPQSPSUTTSSTRRQSSPRRRRRQOPQORPOQQSRPQTRPRQQRSRRPTVTSRchcPPSQPQOQPQPPRRRSRSTQOSQQQQRSSNOPQOPQQPNQOPQOROOOPQQQOOOSSSSPchcOPPPNPQQPNNPPTQRaabPNOPQPOOQQQROQRRPQSRRRSTRUUSRQQRSRRTUVVTRcgdRSQQQTTRSRQRTTRTUUTRPRRRQRRQPRSRRSQRPORQQPQSSSPPQQRSSRQRTTTQchcQRSRSSPROPPRQRPTSSQRSRPQQSQRRTRQQTSPQRRTTURRSRSQQTSTTRWUVVVRchcPUQSSUSTRSSPRRTUUTTSUSRRSQQQQSQNOPORPRQQTPPQQRRPQOOSRPOQTVUPcgcOQPQQQPPRRORQRPRRSQSQPORRQPQPORRQRTRQPOQPQPPTSNPQRQRQQPRTVTRchcQROORRQRRPQOPRRQRSSQOPQQQPQRQOOPQPQPQQPQPPPQPQOQORPOTPPQRTSTchcOQPPPRQOQOPQNQPPSRRQONPOPQPOOSUTQQQRQUVQSSQRTUSRTSRQTQSTVcSRchcQRPTQQQQSRQRSTTSTVRTSTRQZbSSRRRSSRRSTSRSRRQTVTUTUSSUUljkUVXTchcRSURSTSUSTTTURRTUVUTTRQRSSQSRPPPQOOPQRNQOOORQRRQPRRPONQSRQUPdhcPOQQPQQOQQQORQSTSSRRRPOQNQPQPOOORPQQQQRPOPQQQQQQPQPRROORUTSPchcRQOQSPOQQPPRRQSSOSRPNNPQRRROOSQQSQROOPQOQQQQRTPPPPQQSPQTVVURdhcRPSRQQQURSRQPQRbdcbSRQOORSRQRPQPPPQRPQRPNOPQRSQRQQQQOORTWVTQdhdNPPQOQQOPPRRPRRTSUSQQPPRONRRQONPPRQPSQQQPPQSUQQQRSRPQRPigSTQdidQNQQQQSPRPOPRRSUTSRQQQQPOPPRQRPQQOQQRPTQQPOQPRPRPQQRPRljTUSQdhcQPPQPSPRNQQPQSRTSRQRRQQQRRQPQPPPQRQQPQPSRSSRSRQORQPPQSSRUUUQdhcPPRTSRQOQQRQQSTSSRSSTQSTPRRQRSRRRSRQQQQSRRRQTSRQRQPUQTUUUTURdhdSRTRQRRSRRQPRRTUVTTSQQSTQQQSSRRQRQROQPPQQROPRTRRNQQSRQRSTVURdhdQTQRPQSQRPRSRQURSUSTSQQPPQRSRSQSQRQRRSRRRRRSTSPRQQPQSSUUgiVTcidSSRPQRQSQQSPSSUTSTbbZRRQSQQRQOPQPPPPRPRQPRPOQRSQOQQRPQOUVWSRdieQRSSRRQRSQOPSTSSRSSRSRORRQPRRRQRQQTTOQPQPOPRSQSQQSQQRUTSVVURdhdQSRMQQQRPQPQSRSUSSSSQPPORPQQRNOOOOOQNQOQOOQNPQPONPNNPQSSTTUSdhdOOOQQNOQPOPROQRQQRPPPOOPNPOOPOPNONQQOOPPQPPPOOPOONONNRekkjTPdhdOPRQRONORPOOPQTRSTSRQPPQPPQOOQQRQPQQURPQPRRQSRSSTRSQSUTTVWTTdidPQSPRRRRRRPQSQTVVVTTSQPRSRSRQPQPPTQPQOORPOPQRUOROOPOOOOSXUSQdidOQQOQQPOOQPPQSTTQTTQPPQQQQRORQRQPRTRQRSQRRQQTSTTQOQPPQTTXddRdidQPSQSPQRQQSSTSUUVSSRQSPQPPPRSPORQPQOQQSSRSROSQRRQSRSSSSSXUSRdhdPRRSSSPQTRQQQTTUTVTSRQORPRRRSSRQROQQRQRQTTSRVTSQRRRSQRTUXVUReidQSQQRSRROSRPSSWVWVUSUTPSTQQQQQORTQPQQRQSSQRRTSRRRQQQSSQTWYWSeheTQOQQSQQQQTRRSWVUVTSSTSQRPPQORQQQQSOQRRRPTSRQTRPRRQRRRTVUWVQdiePPPPQSQSRPPSQSSTVUUUSRSTURRQROPORQRPOQQQQQSRQQPQSSSORPSUWWUSdidOQRQOQQSQQPRSRRQUVSRQRQQPRSQORRRPPQSPQRPPORQTRQQNQQRQfffYVTTeieRQQOOQTOOQRQRSTSTTTROQPPQPOPPORQPSROQRRPPNPQRQRORQRNPSSRSUVSdieQOQOPPQQQQRQSSSUUUTSSQQPPQPPOOPPQQQRPPQPPQQQRSQOPPQOQRTjiUTTdidOOQPPPQPRRQQRTSUSRSRQQRPQPOQRRPSPOPQNNQQQPQNPSPQQPOPQQUTVUUQeiePQOOPQRPOPONPQSVUURRPNNPQSPOQQPPQRSQQRQQRRQQRTQQRPQQRRSUUVVReidRQOQRPPOPQPPSSTUUUUSRSQQPQQSPOQQQRQPRRSQPQQRRQQQQTQRQQTTWhURdieRPPQPRQQPRSRSTceRVTSUSRQUQPPQSSPQSPPSQQQPRRQRRQRQRTPRTRijWTQeieQPRRPRPOPQQPSRQVUVWTSQPQRRQRRNPQRRPQQQQQOOOQRQRQRRQPPRRUUYVPdieRQOPQQOMOQQPTTUTVVVTSTPQRRRRPPPMLPRPQNPPPPQQOQQPRPOONRRTVVTQeieMNPMNNNNMNPPRRTSSSTRPNNPQPPPPRPRRRRQRRNPQRQORRRQRSQPSTTTUURQeiePOQRSQPQRRPRSSTVUVTTRRRQRRSQRPRRPRSSQQRRQRRQSSRQRRRQQQTUVUUTeieRPQQPPQQPQPRQSVUUUSSQQQRQQRSNQQQRRSRRQQSRPRTUTRSRPQQQSVXXXUSeieSSUSSTUSQSRTSUUWUVVURTQRPQQPQSPQPSQQQSQQRSQSTTSPSRSSSSSUXUSQejeQTSSQQSQRRQRQTUVWWUSRRQPPRSRSQQQQQPPPOQOOQRPSQRRPQPMPPTkjiUSejeRSQPURQQQQOPTTSVWVUSSPOPPQQPOPQOPPPPOQOQRQSRSSOQOQQPOPRTXWUPejeQRQRQOSQROPQPQRTVUTSRRPOOPOPQPQRSQRQQRVTSSQRUTSSSSTTUSihiYVQeieRRSTURSRSSSRRUWWZXWVTTRTQRTRTQRQTSRPSRQPPPPQTSSSSSTPPSigVUYPejeQRQRTPPQQQSSRRUefWVSSRSRRQQQQURRSQSQPQSRRQSSTUSQRRSSSSSUXZVSejeTQQUSPSSSSQSUTVVUXVUTUSPRORSSRRRSSTRSTSRTRTRUTSQRSTSSUSWgfWUejeUTQRRSURSSTSUTVVYWWVVSRRTRRSTQPTRPQRPRQQQNRQRRQRPQORPQRTWSVQfjePRNNQOMPOORSRSTUUWUUPQOQPQRORTRPSRRRRSRSRTPPRSQOQQSQQRSVXVUUejePQRPRSRPQQRRQUWVTWWSQSQQRSTRQRRQPQORSRQRORPPRRRRQRSRQPUUWXVSejeRQRQRQRQRSQRTSTWVUUSSQRQQPQRQQRRQSPPQSPPRSRQRQQQQRTSQSTUXWTRejfRQRPRRRPRPQQSRTWUWTTQQQTQQRQQRSTTQRRRSTRQPTSSSRQRPPPQPRihhWSejfQQPQQQTSSPQQUSUWYUUSTURRQPRRSQSRQQRSQRTRQPPQRRQSRSRPSRUVVWTPejfPPRPRSOQQRPRSRUTUVTRQPPRQQPRSQPQPRQQPQPQPRQQRTORRQPQRTTUYXURfjfQQUSSRPQRQPRRQUWVXSRQQRQRSRPPOQOPTPOQQPONNPPPOOPPQQPRRPRYVSQejeNNNQPPOOPPPQPRSTUVSQQPQRPNOQOQNNPRRQPQPNOOQSSRPPPSRRQPRUXiiUejfPQPOQRPRQPRQRSWdedSRPTPRQQPPRORROSQPPPQQRPRQRROPPQPPRRSUWVVSejeQQRSPRRRRPQSQRSUUVSQQRQQPQPRPRPPRRSSPQSRRRQOTQQQPQSQRQSUXVTSejeSSSRQPRRROQQRTXWWXXRRSQORPQRROPOPPQOQRPOQRQRSRPPQOQPQRTVVVWSejfQQORPQOQOQPQQSTTUVUTPTSPPPRQQQOQQRQPQSPRRQPQVSPRRQRSRQUllVWTfjePOPPOQSPRPPQQTUVXWVTSUSRSQRQSPQRSRQQTQRRTPPQSRQPQSQUUTUWXTUSfjeRPRRQQQSRQRSTUUVUVUSTRQQRSTQOMQSSSQPSSSRRPRQRQRQPPRSRSUUXVXSfjeOQRPSTQPPQQORSUXYWTRRSPQSQRSPRRQRQQSSQSPRQSQSROQRQSRSkimXXVSfjeRQQQPPSPQRRQSSWWXVVTSTPOOQQQQRPSQPQRRPSQPRQQRTQRQQOSSRTUXXURfkeRZYZSQQPQRSRPRVWWVUQQQQQQQROPQQPQQQRRPORPROPTPORRQPPQSSSXWTQfkfRPQPOROQQPQSRTUXUVUSPRSQOPQSQPPSTSRQPRSRPPPQQRQQQRQQSSRSWWWTfkfQPPQQQPPRPTRQSUVYXWTQQQRQSPQPPObacRTTQRRPQPNTSPPRRQQNQSVkjUSfjfRRRQORQQTQSQQSUVYWUTRSPPRRQOORQPRQRRTPQRRQQSTSRRRSRPTSTWXXVRfjfPSQQSQPRSQPRRUVVWXVVTRSUSSPQPTRQPQPPRQQRRQRQSSRPRQRQQRSWWXUSfkfTRUQURQQPPQSSSTVWXUTRQRQPRROQSSQQRQRRRRRRURRTRQRRSRSTSUVWWVPfkfPQRPTRSRROQSSUWXXVVUSPSSSRRSQQOOPOQRQRRSPQQQRPROPPNPRRSTUXVRfjfRNPOPPNOOOOQReegVUVTUTPQNQQQPQSRPQTRSTTQPSRSTTSRRRTQQSSUYWVSfkfQRRRSSSSRRSSQUUVWXWUTRPRRRRRQQQRPQROONPQQQPQTSQRPRRPRRjkjWUQfkfPPRQPRQPOOQRRRUWVTUUQSQSSQPQQQQOONOQRQRQPRRPRSPPRQRRSRUUWVVRfkfQSQQRRPORSRQQTVUTVUUQRRPPQRRRPQRSQOaaaQPPRPRRQUSOQRRSRjjhWUSgkfSQSQPSRNQORSSSTVVVUSTTTQOPSSQRSRSQORRRRQPQPQTRQRSPOOQRSVYVWRfkfQQSPQRRQPTPRSSUTWVSSTTSQQQPSPRRQTQPQQQRSRQQQRSQSTRSSORSVWXXSgkfRRRQRQQQQRQRTSSVWXURQSPQPSSTPRQQQOONQQQRSQRSUSSPPQQRSQUVUiUQfkgQSPRRSQQNOPQRSUTVUTTQPRPQQQQPQPPOPNSOPPOOPRSSTQQQQRRRQSTXXVQfkgPNOOPQQSOPSSSRSTUWTRSQQRQQPROPQNSRPRTSPQQQPOQQQRSSPORRRVXXTSfkfOPOPONQQOSSQRTURVSTURPRRPSQRRTTRRSSSRTTSSRTTTSSRRUTSRTVVXYXTgkfSSSQSSQRRSTSTSVWXZXWVVSTTSRSSTRRRSTUTSRSSRQSSRRRRRRTTSRUkiVSfkfTQQOPORRRRQSQUUUWYTUTRQPRPTTRPRRTQQQRRPRSROPSTSQSPRQQSRgigSQgkgPQPQRPQPPQRQSTTUWTUTSSRRQQPOPQPRTRTRQSRRRSQQRRSPPSSUSTUXXWVSflfPPRRQSRORPSROTUTVWVTTRQTRUTQROROOQRRSSQQPQPORRQRQQPPQRTkiWVRgkfQQQPNRRQQPRQRcbUTTRRQSRPPQQQPUSSTTVTSSTSSTUUWTUTTUUSSVXWXXWUgkgRSSTTSTTTTTUTTWWXWUTTSSRTURSSQSQSTRQRSQQQPSSTRRRSQQQQSSVVTWSfkfPOPPQRPOPRQQRRRSXTSSRRQQQPSOPUSRSSRQSRUUSRTUUTTRTTSTTSUVYYWTfkgRSRPQSTTRQQRRTUXYVUUTTSSRSRRRTSRQRRTRTQRRSSSSTSSSRRRRTVVYjXUgkfRSRTSOTTSTPPRRUVVWTUUUTTTSSVVRRRQSRQRQPQRSRQSQQQQRQSSRRSXWXTglgQPQPQQSRQPSQQSTVVVUTSTSQQSQPORSRRRTSUTSTQRTUURPTSTSSTTUhhgWTflgRRRRRSRQOQRSQUUVUWWTTVRSTQRRRTTSTUTRTTRSSUVUWTSTSTUSTRUVZWWRgkfOQTRUTQQRRPSTTTWVVUVUSVTSRTSTTTRRVTRQQRSUUVQSQQSRTRUURVVYYYTglfSRPPTQRRSRSRRRTWYWXURUTURSTSTSTSRTSSTTSSRQSTTSRSSTSRTTUWXXVUfkgORRRRRRSRQRRQVWYTUVTVRSSQRSRRVVUUUTTTSTUTTQTTTUTSSVTSTWmllXUfkgQRSRTUSRTSSUUUeffYWTVVUTRRTSSUQPPQSTRTTUUURRVTQSSUTSRTVUXVVTglgQRRSTSSTRRROPTUUWXUSSTQRQTRSURSQVTRRTTSTTVRRVUTUTUSVUUVjjYUUglgPSQQQQSQNSRTUTVWXWXVUSRSSTSSQSSTVSSUSSTTSSSTVVVRSSTRSTVUXWVVgkgQOQTQRSSTRSQRTUUVUUSTSQbdbRRRSTTVTSSSUSUUTSSTWUUTSSVUUXkkZXUglgRSSSQRQSRQPRUTVWYWUTSTTURRRSUQSRSURQRRUTRUTSUVTSTTUVTUVWijUUgkgPQRRPQPPQPSQQQSSWXTSTRRPQQRSPTTUUTUUTTTUUSUVTTSVWTSTVUWWZYWTglfSSQQSSSSRQQTSTUUVXTTTTSSSRTTTRSRSRRSRUQQUTSTSQUTRUUWWUWVXYVQflgSQQRRQROQRQQSURUVWUUSUSccddQSTUSQSRQQRTUQRQQTTUTSSUTTTUUWVXRglgOQQQSRSRPRTRRTTUWVSRRSSPQRROQTQUTUVUSTTTSRUVUUTTVUUTUVTXYZXVgkgRSSRTRQQQSSSRRSYWWWUTSRRQSRSUVSUUWVUUUVTVTWWWWUVVSWYXXVXZZXUgkgRTVTSRQRSTRRTUWWWYTUSTTVUTUTUVVUTUTSTSTTVUSTXYWUVVWXVXXXXXXUglgSRRRTQSTSRTSRUWVVWXSUSSUTTSTRUTTRTSSUTTTSTTSVUUTTUWWWXfffXWTgkgQTTPTQQSRRPRTRSUYWUUSeffSSTSRUTWVSSTTSTTTWTUVWUTWUVZaYZYYaYUglgPRRSQSRRRPRSUUUWVUVXUUUUWUUUTTUUTVVSTTUTWVVVVXUUTUefffgZYYWUglgSRRRRSQQSPRTTUSUUWVVVVSUTSTSSTURSTVSTTUUVTTUWXUXYVXZWVXYbZYVgkgSSTQSSQRRORRRRVWXYWWTTUVTSURTWUUVUWWVUVWXVVVVWSdfffdaYYZbZXWglgQRQTTSSRRRSRQRVWVWWUUTSSUVUSUTUSSVTUUWUSUSTTVVWWWVWXWWXYaaUVglgQPPNPPPPPRRRPRSSTVWUUSRSSUVTQUUWVXUTUVUVXVXVWZXXXiiigaZbcZZWglgSTPTTRTRRRSSSRUWfgffVVVVUTVUUUUWUVVVVWUWUUUUYYWXXXYYaghhbaaWglgRQQRPPPRQQQgghSUVYYXWUTSVVSTTdcbWVVVXYXTWVWXYUWWXXXYZYbbccZWglgRQQRPQRTRQRRSUWUWYYVWVYUUUVUUWVUUVXZVVVWWVYWXZXVWZYYYZZbZaYXglhTRRQQSSQPPRRRRTWXXVXVXYXVWUVTVWVWVWWVXYXWVWVYYXXWZcbaZaccbbWglgRQRSSRSPPQSQTSTVYXXXZXXUUUXVTXVVUXVVaXZXWXaXaYaYWYbbaadacbbXglgSQRSQQRRTQQRTTVXYaZaYYXWXVVTTYYZXYYZaXYYZYZYbdacaaccbbbcbeebglgSRRRTSQTRRTTTVXYXacbZZaYYXYYYbaYZbbZYZYXZabcacacabcdeedcfedZglgUTTUUSRTTTTTUXYYabbcbcbceffiZZZXXZZZYZYZZZZZfccbZZbabecacddagkgVUSSRRUPRSTSSUUXbgggcaYaZaXYXbaaZZabYdcZZdgffebccbafbbddedccglgTSRTTSSUUTRTSWXaadddcabbbcZYYYZYZZZaaaZYXZbccdccZYbabbbccceZgkgRRTRPSQRSSSSVUVYZdcdqsaZZbYWWaYXYXYYbZaZZXXYcdbZXZYZZbaYZdeaglgPPSRQQSTSRQPSUYWZZcijjiYZYZYXZZYZZabbdbcabcllmnncaaabcabfefeikgUTTPSVTVVRSUUWYZbdddacbbZZZZXZbbaZcbddbccaaclljdYbbaZbeccedbglgURSTSSRSQRTTUWVbbdeddcZabbapoaYaabYaaaabbddcgfaassuustutt85rglgSQTSffghhgeeTWWYbadcccbbacaaZbababadbdedcbbcmmtrtabcbaccflmbglgTSkjkhhikkhRTXXZaddedccaacbZYZcbcddeddcdccajiijjabbbababdhhZglgTTdfeeeeSTTTVUWZafdcccbbaYcaZZYXbabbaZcaaZabvudbaaabbXaZcdfcglgURSSSRSSPRQSRSVZbddcdbbYZbaaZaZYrooqnpsqcbbb24fbbZXYaYaacfebglgURRRRQTPPSSRRUWWaZbcccZZYaYaXaacZabbacbcproo66ttbbaYcYYachhZgkgRQTSQRTRRSSSRVggffeaZZYaabYaZYZZZadZZabdbbYcggdcbYZYZYaabgfZglgQSTTQQPSQRSSUVUUXbbaabbaYZYZaYabddacbYbabacdggfcZZaZabaZcefbglgSSRRRUTUVTTSSUVYaaaaZYZZgiiaXabcacaZbadabacegjeaaacbbYZZchhcrtrTPUUSTURSRSTSVXYYbbbZZZXZbYaaZaccdbbbcccbbcdgihbdbZaaaccghhbmnmTUURTTSRTVRVUVXZYaccdXaYbZYZZccbccbcdccbdbabdgcbbdcXYZYXagfXmnmWZWYZWXYWXXWbdfdbccdddceccdccdfdegffffeddieeghffdfdeeffgdfeemnmRSTSQRRSSTUSSUVYXYZYZZYWYXXZXZYaaaZbccababadfeebaYZaZaabdefbmomTSVSUTTVTUTTUUYXXZXZYWYXWWWXWbcZYaaZabZcaZadfebZababaXaZadfampmRTVTURTRSSRSSTVWXYYZYZYYXWZZXYXZbaZaYbYYZZYchgaZZbZZYYXadefbmpmMKJLJLIJLIJLJKLJILJKMJLKKIJKMMJJKKJLJIKMJLLLXXKJJJJJJJLLKXXJmqmJLKJKKLJKKIJJJMLKJJJJJJLKKKLJKKKKLJJKJJKKKJKXXKKIJJJJKKJJXXKmrmJJILJLJJKJLKKKKJJJKKKKKKLKKJKIIIIIIIIIIIIIIIXXIIIIIIIIIIIXXIy2yIIIIIIIIIIIIIIIIIIIIIIIIIIIII",A="ABCDEFGHIJKLMNOPQRSTUVWXYZabcdefghijklmnopqrstuvwxyz0123456789+/";var cv=document.getElementById("hm"),x=cv.getContext("2d"),im=x.createImageData(63,256);
function cl(v){return v<0?0:v>1?1:v}
for(var i=0;i<s.length;i++){var v=A.indexOf(s[i])/63;var p=i*4;im.data[p]=Math.round(255*cl(Math.min(4*v-1.5,-4*v+4.5)));im.data[p+1]=Math.round(255*cl(Math.min(4*v-.5,-4*v+3.5)));im.data[p+2]=Math.round(255*cl(Math.min(4*v+.5,-4*v+2.5)));im.data[p+3]=255;}
x.putImageData(im,0,0);})();
</script>
</body></html>
